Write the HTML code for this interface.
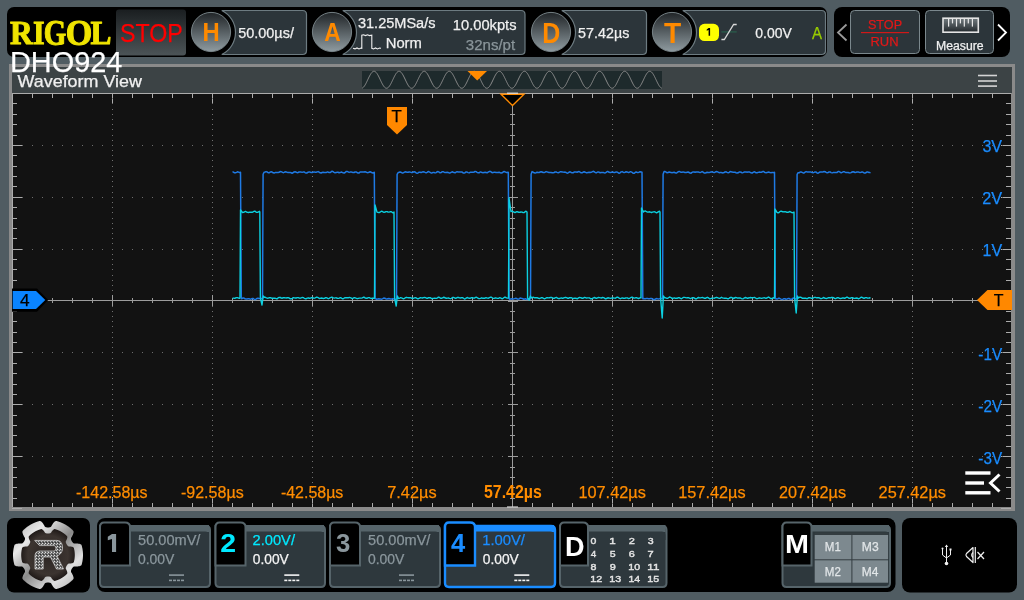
<!DOCTYPE html>
<html><head><meta charset="utf-8"><title>DHO924</title>
<style>html,body{margin:0;padding:0;width:1024px;height:600px;overflow:hidden;background:#505c62;font-family:"Liberation Sans", sans-serif;}</style>
</head><body>
<svg width="1024" height="600" viewBox="0 0 1024 600" style="position:absolute;left:0;top:0;display:block;will-change:transform">
<defs>
<linearGradient id="cg" x1="0" y1="0" x2="0" y2="1"><stop offset="0" stop-color="#202427"/><stop offset="1" stop-color="#8f9ba0"/></linearGradient>
<linearGradient id="sg" x1="0" y1="0" x2="0" y2="1"><stop offset="0" stop-color="#1a1e20"/><stop offset="1" stop-color="#4c5457"/></linearGradient>
<radialGradient id="gearin" cx="0.5" cy="0.5" r="0.5"><stop offset="0" stop-color="#2a2422"/><stop offset="0.75" stop-color="#3c3430"/><stop offset="1" stop-color="#221c1a"/></radialGradient>
<linearGradient id="ring" x1="0" y1="0" x2="1" y2="1"><stop offset="0" stop-color="#b0b0b0"/><stop offset="0.25" stop-color="#e8e8e8"/><stop offset="0.5" stop-color="#8a8a8a"/><stop offset="0.75" stop-color="#e0e0e0"/><stop offset="1" stop-color="#a8a8a8"/></linearGradient>
<linearGradient id="ruler" x1="0" y1="0" x2="0" y2="1"><stop offset="0" stop-color="#737c80"/><stop offset="1" stop-color="#22282c"/></linearGradient>
<pattern id="tex" width="3" height="3" patternUnits="userSpaceOnUse"><rect width="3" height="3" fill="#6a6a6a"/><rect width="1" height="1" fill="#e0e0e0"/><rect x="2" y="1" width="1" height="1" fill="#c0c0c0"/><rect x="1" y="2" width="1" height="1" fill="#303030"/></pattern>
</defs>
<rect x="0" y="0" width="1024" height="600" fill="#505c62"/>
<rect x="7" y="7" width="820" height="50" rx="7" fill="#000"/>
<rect x="834" y="7" width="176" height="50" rx="8" fill="#000"/>
<text x="9.96" y="44.10" font-size="34.36" fill="#f0e400" font-weight="bold" textLength="22.76" lengthAdjust="spacingAndGlyphs" style='font-family:"Liberation Serif", serif' stroke="#f0e400" stroke-width="1.0" stroke-linejoin="round">R</text>
<text x="33.09" y="44.10" font-size="34.36" fill="#f0e400" font-weight="bold" textLength="11.61" lengthAdjust="spacingAndGlyphs" style='font-family:"Liberation Serif", serif' stroke="#f0e400" stroke-width="1.0" stroke-linejoin="round">I</text>
<text x="43.68" y="44.60" font-size="35.89" fill="#f0e400" font-weight="bold" textLength="22.61" lengthAdjust="spacingAndGlyphs" style='font-family:"Liberation Serif", serif' stroke="#f0e400" stroke-width="1.0" stroke-linejoin="round">G</text>
<text x="65.63" y="44.60" font-size="35.89" fill="#f0e400" font-weight="bold" textLength="26.53" lengthAdjust="spacingAndGlyphs" style='font-family:"Liberation Serif", serif' stroke="#f0e400" stroke-width="1.0" stroke-linejoin="round">O</text>
<text x="90.56" y="44.10" font-size="34.36" fill="#f0e400" font-weight="bold" textLength="20.96" lengthAdjust="spacingAndGlyphs" style='font-family:"Liberation Serif", serif' stroke="#f0e400" stroke-width="1.0" stroke-linejoin="round">L</text>
<rect x="116" y="9.5" width="70" height="46" rx="3" fill="url(#sg)"/>
<text x="119.95" y="42.20" font-size="26.45" fill="#ff0000" font-weight="normal" textLength="62.76" lengthAdjust="spacingAndGlyphs" style='font-family:"Liberation Sans", sans-serif'  stroke="#ff0000" stroke-width="0.25">STOP</text>
<path d="M221.78,10.5 L302.5,10.5 Q306.5,10.5 306.5,14.5 L306.5,50.5 Q306.5,54.5 302.5,54.5 L221.78,54.5 A24.5,24.5 0 0 0 221.78,10.5 Z" fill="#2c353a" stroke="#6d7b81" stroke-width="1.2"/>
<circle cx="211" cy="32" r="19.6" fill="url(#cg)" stroke="#7f8b90" stroke-width="0.9"/>
<text x="202.41" y="41.10" font-size="24.86" fill="#ff8a00" font-weight="bold" textLength="17.20" lengthAdjust="spacingAndGlyphs" style='font-family:"Liberation Sans", sans-serif' >H</text>
<text x="238.22" y="37.70" font-size="14.39" fill="#f0f0f0" font-weight="normal" textLength="55.68" lengthAdjust="spacingAndGlyphs" style='font-family:"Liberation Sans", sans-serif'  stroke="#f0f0f0" stroke-width="0.25">50.00µs/</text>
<path d="M342.78,10.5 L521,10.5 Q525,10.5 525,14.5 L525,50.5 Q525,54.5 521,54.5 L342.78,54.5 A24.5,24.5 0 0 0 342.78,10.5 Z" fill="#2c353a" stroke="#6d7b81" stroke-width="1.2"/>
<circle cx="332" cy="32" r="19.6" fill="url(#cg)" stroke="#7f8b90" stroke-width="0.9"/>
<text x="324.33" y="41.10" font-size="24.86" fill="#ff8a00" font-weight="bold" textLength="16.47" lengthAdjust="spacingAndGlyphs" style='font-family:"Liberation Sans", sans-serif' >A</text>
<text x="357.95" y="27.80" font-size="13.95" fill="#f0f0f0" font-weight="normal" textLength="77.58" lengthAdjust="spacingAndGlyphs" style='font-family:"Liberation Sans", sans-serif'  stroke="#f0f0f0" stroke-width="0.25">31.25MSa/s</text>
<text x="385.69" y="47.80" font-size="14.10" fill="#f0f0f0" font-weight="normal" textLength="36.19" lengthAdjust="spacingAndGlyphs" style='font-family:"Liberation Sans", sans-serif'  stroke="#f0f0f0" stroke-width="0.25">Norm</text>
<text x="452.88" y="29.90" font-size="14.10" fill="#f0f0f0" font-weight="normal" textLength="63.65" lengthAdjust="spacingAndGlyphs" style='font-family:"Liberation Sans", sans-serif'  stroke="#f0f0f0" stroke-width="0.25">10.00kpts</text>
<text x="465.83" y="49.80" font-size="14.39" fill="#8a959a" font-weight="normal" textLength="49.28" lengthAdjust="spacingAndGlyphs" style='font-family:"Liberation Sans", sans-serif'  stroke="#8a959a" stroke-width="0.25">32ns/pt</text>
<polyline points="353,48.3 355,48.9 357,47.9 359,48.9 361,48.1 361.8,48.3 361.8,35.2 363.5,34.8 365.5,35.6 367.5,34.8 369.5,35.6 371.8,35.2 371.8,48.3 373.5,48.9 375.5,47.9 377.5,48.9 379.5,48.1 381,48.3" fill="none" stroke="#f0f0f0" stroke-width="1.1"/>
<path d="M561.78,10.5 L642.5,10.5 Q646.5,10.5 646.5,14.5 L646.5,50.5 Q646.5,54.5 642.5,54.5 L561.78,54.5 A24.5,24.5 0 0 0 561.78,10.5 Z" fill="#2c353a" stroke="#6d7b81" stroke-width="1.2"/>
<circle cx="551" cy="32" r="19.6" fill="url(#cg)" stroke="#7f8b90" stroke-width="0.9"/>
<text x="542.23" y="43.00" font-size="29.22" fill="#ff8a00" font-weight="bold" textLength="18.02" lengthAdjust="spacingAndGlyphs" style='font-family:"Liberation Sans", sans-serif' >D</text>
<text x="578.13" y="37.70" font-size="14.10" fill="#f0f0f0" font-weight="normal" textLength="51.19" lengthAdjust="spacingAndGlyphs" style='font-family:"Liberation Sans", sans-serif'  stroke="#f0f0f0" stroke-width="0.25">57.42µs</text>
<path d="M682.78,10.5 L821.5,10.5 Q825.5,10.5 825.5,14.5 L825.5,50.5 Q825.5,54.5 821.5,54.5 L682.78,54.5 A24.5,24.5 0 0 0 682.78,10.5 Z" fill="#2c353a" stroke="#6d7b81" stroke-width="1.2"/>
<circle cx="672" cy="32" r="19.6" fill="url(#cg)" stroke="#7f8b90" stroke-width="0.9"/>
<text x="663.88" y="43.00" font-size="29.22" fill="#ff8a00" font-weight="bold" textLength="17.22" lengthAdjust="spacingAndGlyphs" style='font-family:"Liberation Sans", sans-serif' >T</text>
<rect x="699" y="23.8" width="20" height="17.2" rx="5.5" fill="#ffff00"/>
<path d="M708.6,28 L710.1,28 L710.1,35.8 L708.6,35.8 L708.6,29.9 L706.7,30.7 L706.7,29.4 Z" fill="#000"/>
<line x1="721.4" y1="31.9" x2="736.7" y2="31.9" stroke="#2a5a4a" stroke-width="1.4"/>
<polyline points="721.4,39.5 724.3,39.5 733.6,24.5 736.7,24.5" fill="none" stroke="#d8d8d8" stroke-width="1.3"/>
<text x="755.25" y="37.70" font-size="15.26" fill="#f0f0f0" font-weight="normal" textLength="36.51" lengthAdjust="spacingAndGlyphs" style='font-family:"Liberation Sans", sans-serif'  stroke="#f0f0f0" stroke-width="0.25">0.00V</text>
<text x="811.97" y="38.70" font-size="16.28" fill="#99cc00" font-weight="normal" textLength="10.06" lengthAdjust="spacingAndGlyphs" style='font-family:"Liberation Sans", sans-serif'  stroke="#99cc00" stroke-width="0.25">A</text>
<polyline points="846.5,24.5 838,32.5 846.5,40.5" fill="none" stroke="#9a9a9a" stroke-width="1.8"/>
<rect x="850.5" y="10.5" width="69" height="43" rx="4" fill="#2c353a" stroke="#7b888d" stroke-width="1"/>
<text x="867.93" y="29.00" font-size="13.08" fill="#e01818" font-weight="normal" textLength="34.23" lengthAdjust="spacingAndGlyphs" style='font-family:"Liberation Sans", sans-serif'  stroke="#e01818" stroke-width="0.25">STOP</text>
<rect x="861" y="32" width="48" height="1.2" fill="#d01818"/>
<text x="870.44" y="45.50" font-size="12.35" fill="#e01818" font-weight="normal" textLength="28.12" lengthAdjust="spacingAndGlyphs" style='font-family:"Liberation Sans", sans-serif'  stroke="#e01818" stroke-width="0.25">RUN</text>
<rect x="925.5" y="10.5" width="68" height="43" rx="4" fill="#2c353a" stroke="#7b888d" stroke-width="1"/>
<rect x="943" y="18.2" width="35.3" height="14" fill="url(#ruler)" stroke="#e4e4e4" stroke-width="1.6"/>
<rect x="948.0" y="19" width="1.2" height="7.6" fill="#e8e8e8"/>
<rect x="951.9" y="19" width="1.2" height="4.4" fill="#e8e8e8"/>
<rect x="955.9" y="19" width="1.2" height="7.6" fill="#e8e8e8"/>
<rect x="959.8" y="19" width="1.2" height="4.4" fill="#e8e8e8"/>
<rect x="963.6999999999999" y="19" width="1.2" height="7.6" fill="#e8e8e8"/>
<rect x="967.6999999999999" y="19" width="1.2" height="4.4" fill="#e8e8e8"/>
<rect x="971.8" y="19" width="1.2" height="7.6" fill="#e8e8e8"/>
<text x="936.00" y="49.80" font-size="12.21" fill="#f0f0f0" font-weight="normal" textLength="47.55" lengthAdjust="spacingAndGlyphs" style='font-family:"Liberation Sans", sans-serif'  stroke="#f0f0f0" stroke-width="0.25">Measure</text>
<polyline points="998,24.5 1006,32.5 998,40.5" fill="none" stroke="#ffffff" stroke-width="1.8"/>
<rect x="9" y="64" width="1006" height="447" fill="#8a8a8a"/>
<rect x="12" y="67" width="1000" height="26" fill="#3c4345"/>
<rect x="12" y="93" width="999" height="414" fill="#121212"/>
<rect x="362" y="71" width="300" height="18" fill="#1e2a2c"/>
<polyline points="362.0,88.17 362.5,87.97 363.0,87.63 363.5,87.17 364.0,86.59 364.5,85.91 365.0,85.13 365.5,84.26 366.0,83.33 366.5,82.33 367.0,81.30 367.5,80.25 368.0,79.18 368.5,78.13 369.0,77.10 369.5,76.11 370.0,75.18 370.5,74.32 371.0,73.54 371.5,72.86 372.0,72.30 372.5,71.84 373.0,71.52 373.5,71.32 374.0,71.25 374.5,71.32 375.0,71.52 375.5,71.84 376.0,72.30 376.5,72.86 377.0,73.54 377.5,74.32 378.0,75.18 378.5,76.11 379.0,77.10 379.5,78.13 380.0,79.18 380.5,80.25 381.0,81.30 381.5,82.33 382.0,83.33 382.5,84.26 383.0,85.13 383.5,85.91 384.0,86.59 384.5,87.17 385.0,87.63 385.5,87.97 386.0,88.17 386.5,88.25 387.0,88.19 387.5,88.00 388.0,87.68 388.5,87.24 389.0,86.68 389.5,86.01 390.0,85.24 390.5,84.39 391.0,83.46 391.5,82.48 392.0,81.45 392.5,80.39 393.0,79.33 393.5,78.27 394.0,77.24 394.5,76.24 395.0,75.30 395.5,74.43 396.0,73.64 396.5,72.95 397.0,72.37 397.5,71.90 398.0,71.55 398.5,71.34 399.0,71.25 399.5,71.30 400.0,71.48 400.5,71.79 401.0,72.23 401.5,72.78 402.0,73.44 402.5,74.20 403.0,75.05 403.5,75.97 404.0,76.95 404.5,77.98 405.0,79.03 405.5,80.10 406.0,81.15 406.5,82.19 407.0,83.19 407.5,84.13 408.0,85.01 408.5,85.80 409.0,86.50 409.5,87.09 410.0,87.57 410.5,87.93 411.0,88.15 411.5,88.25 412.0,88.21 412.5,88.04 413.0,87.74 413.5,87.31 414.0,86.76 414.5,86.11 415.0,85.35 415.5,84.51 416.0,83.59 416.5,82.62 417.0,81.59 417.5,80.54 418.0,79.48 418.5,78.42 419.0,77.38 419.5,76.38 420.0,75.43 420.5,74.55 421.0,73.75 421.5,73.04 422.0,72.44 422.5,71.96 423.0,71.59 423.5,71.36 424.0,71.26 424.5,71.28 425.0,71.45 425.5,71.74 426.0,72.16 426.5,72.69 427.0,73.34 427.5,74.09 428.0,74.93 428.5,75.84 429.0,76.81 429.5,77.83 430.0,78.88 430.5,79.95 431.0,81.01 431.5,82.05 432.0,83.05 432.5,84.01 433.0,84.89 433.5,85.70 434.0,86.41 434.5,87.02 435.0,87.51 435.5,87.88 436.0,88.13 436.5,88.24 437.0,88.22 437.5,88.07 438.0,87.79 438.5,87.38 439.0,86.85 439.5,86.21 440.0,85.47 440.5,84.63 441.0,83.73 441.5,82.76 442.0,81.74 442.5,80.69 443.0,79.63 443.5,78.57 444.0,77.52 444.5,76.52 445.0,75.56 445.5,74.67 446.0,73.86 446.5,73.14 447.0,72.52 447.5,72.02 448.0,71.64 448.5,71.38 449.0,71.26 449.5,71.27 450.0,71.42 450.5,71.69 451.0,72.09 451.5,72.61 452.0,73.24 452.5,73.98 453.0,74.80 453.5,75.71 454.0,76.67 454.5,77.69 455.0,78.74 455.5,79.80 456.0,80.86 456.5,81.90 457.0,82.92 457.5,83.88 458.0,84.77 458.5,85.59 459.0,86.32 459.5,86.94 460.0,87.45 460.5,87.84 461.0,88.10 461.5,88.23 462.0,88.23 462.5,88.10 463.0,87.83 463.5,87.44 464.0,86.93 464.5,86.30 465.0,85.58 465.5,84.76 466.0,83.86 466.5,82.90 467.0,81.88 467.5,80.84 468.0,79.78 468.5,78.71 469.0,77.67 469.5,76.65 470.0,75.69 470.5,74.79 471.0,73.96 471.5,73.23 472.0,72.60 472.5,72.08 473.0,71.68 473.5,71.41 474.0,71.27 474.5,71.26 475.0,71.39 475.5,71.64 476.0,72.03 476.5,72.53 477.0,73.15 477.5,73.87 478.0,74.68 478.5,75.58 479.0,76.54 479.5,77.54 480.0,78.59 480.5,79.65 481.0,80.71 481.5,81.76 482.0,82.78 482.5,83.75 483.0,84.65 483.5,85.48 484.0,86.22 484.5,86.86 485.0,87.39 485.5,87.79 486.0,88.07 486.5,88.22 487.0,88.24 487.5,88.13 488.0,87.88 488.5,87.50 489.0,87.01 489.5,86.40 490.0,85.68 490.5,84.88 491.0,83.99 491.5,83.03 492.0,82.03 492.5,80.99 493.0,79.93 493.5,78.86 494.0,77.81 494.5,76.79 495.0,75.82 495.5,74.91 496.0,74.07 496.5,73.33 497.0,72.68 497.5,72.15 498.0,71.73 498.5,71.44 499.0,71.28 499.5,71.26 500.0,71.36 500.5,71.60 501.0,71.97 501.5,72.45 502.0,73.06 502.5,73.76 503.0,74.57 503.5,75.45 504.0,76.40 504.5,77.40 505.0,78.44 505.5,79.50 506.0,80.56 506.5,81.61 507.0,82.64 507.5,83.61 508.0,84.53 508.5,85.37 509.0,86.12 509.5,86.78 510.0,87.32 510.5,87.74 511.0,88.04 511.5,88.21 512.0,88.25 512.5,88.15 513.0,87.92 513.5,87.56 514.0,87.08 514.5,86.49 515.0,85.79 515.5,84.99 516.0,84.12 516.5,83.17 517.0,82.17 517.5,81.13 518.0,80.07 518.5,79.01 519.0,77.96 519.5,76.93 520.0,75.95 520.5,75.03 521.0,74.19 521.5,73.43 522.0,72.77 522.5,72.22 523.0,71.78 523.5,71.47 524.0,71.30 524.5,71.25 525.0,71.34 525.5,71.56 526.0,71.91 526.5,72.38 527.0,72.97 527.5,73.66 528.0,74.45 528.5,75.32 529.0,76.26 529.5,77.26 530.0,78.29 530.5,79.35 531.0,80.42 531.5,81.47 532.0,82.50 532.5,83.48 533.0,84.41 533.5,85.26 534.0,86.02 534.5,86.69 535.0,87.25 535.5,87.69 536.0,88.01 536.5,88.19 537.0,88.25 537.5,88.17 538.0,87.96 538.5,87.62 539.0,87.16 539.5,86.58 540.0,85.89 540.5,85.11 541.0,84.24 541.5,83.31 542.0,82.31 542.5,81.28 543.0,80.22 543.5,79.16 544.0,78.10 544.5,77.07 545.0,76.09 545.5,75.16 546.0,74.30 546.5,73.53 547.0,72.85 547.5,72.29 548.0,71.84 548.5,71.51 549.0,71.31 549.5,71.25 550.0,71.32 550.5,71.52 551.0,71.85 551.5,72.31 552.0,72.88 552.5,73.56 553.0,74.33 553.5,75.19 554.0,76.13 554.5,77.12 555.0,78.15 555.5,79.20 556.0,80.27 556.5,81.32 557.0,82.35 557.5,83.35 558.0,84.28 558.5,85.14 559.0,85.92 559.5,86.60 560.0,87.18 560.5,87.64 561.0,87.97 561.5,88.18 562.0,88.25 562.5,88.19 563.0,88.00 563.5,87.68 564.0,87.23 564.5,86.67 565.0,85.99 565.5,85.23 566.0,84.37 566.5,83.44 567.0,82.46 567.5,81.43 568.0,80.37 568.5,79.31 569.0,78.25 569.5,77.22 570.0,76.22 570.5,75.28 571.0,74.41 571.5,73.63 572.0,72.94 572.5,72.36 573.0,71.89 573.5,71.55 574.0,71.33 574.5,71.25 575.0,71.30 575.5,71.48 576.0,71.80 576.5,72.24 577.0,72.79 577.5,73.45 578.0,74.22 578.5,75.07 579.0,75.99 579.5,76.97 580.0,78.00 580.5,79.05 581.0,80.12 581.5,81.18 582.0,82.21 582.5,83.21 583.0,84.15 583.5,85.03 584.0,85.82 584.5,86.51 585.0,87.10 585.5,87.58 586.0,87.93 586.5,88.16 587.0,88.25 587.5,88.21 588.0,88.03 588.5,87.73 589.0,87.30 589.5,86.75 590.0,86.09 590.5,85.34 591.0,84.49 591.5,83.58 592.0,82.60 592.5,81.57 593.0,80.52 593.5,79.46 594.0,78.40 594.5,77.36 595.0,76.36 595.5,75.41 596.0,74.53 596.5,73.73 597.0,73.03 597.5,72.43 598.0,71.95 598.5,71.59 599.0,71.36 599.5,71.25 600.0,71.29 600.5,71.45 601.0,71.75 601.5,72.17 602.0,72.71 602.5,73.36 603.0,74.11 603.5,74.94 604.0,75.86 604.5,76.83 605.0,77.85 605.5,78.90 606.0,79.97 606.5,81.03 607.0,82.07 607.5,83.07 608.0,84.02 608.5,84.91 609.0,85.71 609.5,86.42 610.0,87.03 610.5,87.52 611.0,87.89 611.5,88.13 612.0,88.24 612.5,88.22 613.0,88.06 613.5,87.78 614.0,87.37 614.5,86.84 615.0,86.19 615.5,85.45 616.0,84.62 616.5,83.71 617.0,82.74 617.5,81.72 618.0,80.67 618.5,79.61 619.0,78.55 619.5,77.50 620.0,76.50 620.5,75.54 621.0,74.65 621.5,73.84 622.0,73.12 622.5,72.51 623.0,72.01 623.5,71.63 624.0,71.38 624.5,71.26 625.0,71.27 625.5,71.42 626.0,71.70 626.5,72.10 627.0,72.62 627.5,73.26 628.0,74.00 628.5,74.82 629.0,75.73 629.5,76.69 630.0,77.71 630.5,78.76 631.0,79.82 631.5,80.88 632.0,81.93 632.5,82.94 633.0,83.90 633.5,84.79 634.0,85.61 634.5,86.33 635.0,86.95 635.5,87.46 636.0,87.85 636.5,88.11 637.0,88.24 637.5,88.23 638.0,88.09 638.5,87.83 639.0,87.43 639.5,86.92 640.0,86.29 640.5,85.56 641.0,84.74 641.5,83.84 642.0,82.88 642.5,81.86 643.0,80.82 643.5,79.76 644.0,78.69 644.5,77.65 645.0,76.63 645.5,75.67 646.0,74.77 646.5,73.95 647.0,73.22 647.5,72.59 648.0,72.07 648.5,71.68 649.0,71.41 649.5,71.27 650.0,71.26 650.5,71.39 651.0,71.65 651.5,72.04 652.0,72.54 652.5,73.16 653.0,73.89 653.5,74.70 654.0,75.60 654.5,76.56 655.0,77.56 655.5,78.61 656.0,79.67 656.5,80.73 657.0,81.78 657.5,82.80 658.0,83.76 658.5,84.67 659.0,85.50 659.5,86.23 660.0,86.87 660.5,87.39 661.0,87.80 661.5,88.08 662.0,88.23" fill="none" stroke="#8c8c8c" stroke-width="1"/>
<polygon points="467.5,71 487,71 477.2,80.5" fill="#ff8a00"/>
<text x="17.52" y="86.70" font-size="17.01" fill="#f0f0f0" font-weight="normal" textLength="124.43" lengthAdjust="spacingAndGlyphs" style='font-family:"Liberation Sans", sans-serif'  stroke="#f0f0f0" stroke-width="0.25">Waveform View</text>
<rect x="978" y="74.7" width="19" height="1.6" fill="#d4d4d4"/>
<rect x="978" y="80.2" width="19" height="1.6" fill="#d4d4d4"/>
<rect x="978" y="85.3" width="19" height="1.6" fill="#d4d4d4"/>
<g shape-rendering="crispEdges"><rect x="12" y="93" width="999" height="1" fill="#acacac"/><rect x="12" y="93" width="1" height="414" fill="#acacac"/><rect x="12" y="93" width="1" height="10" fill="#acacac"/><rect x="12" y="497" width="1" height="10" fill="#acacac"/><rect x="32" y="93" width="1" height="4.5" fill="#acacac"/><rect x="32" y="502.5" width="1" height="4.5" fill="#acacac"/><rect x="52" y="93" width="1" height="4.5" fill="#acacac"/><rect x="52" y="502.5" width="1" height="4.5" fill="#acacac"/><rect x="72" y="93" width="1" height="4.5" fill="#acacac"/><rect x="72" y="502.5" width="1" height="4.5" fill="#acacac"/><rect x="92" y="93" width="1" height="4.5" fill="#acacac"/><rect x="92" y="502.5" width="1" height="4.5" fill="#acacac"/><rect x="112" y="93" width="1" height="10" fill="#acacac"/><rect x="112" y="497" width="1" height="10" fill="#acacac"/><rect x="132" y="93" width="1" height="4.5" fill="#acacac"/><rect x="132" y="502.5" width="1" height="4.5" fill="#acacac"/><rect x="152" y="93" width="1" height="4.5" fill="#acacac"/><rect x="152" y="502.5" width="1" height="4.5" fill="#acacac"/><rect x="172" y="93" width="1" height="4.5" fill="#acacac"/><rect x="172" y="502.5" width="1" height="4.5" fill="#acacac"/><rect x="192" y="93" width="1" height="4.5" fill="#acacac"/><rect x="192" y="502.5" width="1" height="4.5" fill="#acacac"/><rect x="212" y="93" width="1" height="10" fill="#acacac"/><rect x="212" y="497" width="1" height="10" fill="#acacac"/><rect x="232" y="93" width="1" height="4.5" fill="#acacac"/><rect x="232" y="502.5" width="1" height="4.5" fill="#acacac"/><rect x="252" y="93" width="1" height="4.5" fill="#acacac"/><rect x="252" y="502.5" width="1" height="4.5" fill="#acacac"/><rect x="272" y="93" width="1" height="4.5" fill="#acacac"/><rect x="272" y="502.5" width="1" height="4.5" fill="#acacac"/><rect x="292" y="93" width="1" height="4.5" fill="#acacac"/><rect x="292" y="502.5" width="1" height="4.5" fill="#acacac"/><rect x="312" y="93" width="1" height="10" fill="#acacac"/><rect x="312" y="497" width="1" height="10" fill="#acacac"/><rect x="332" y="93" width="1" height="4.5" fill="#acacac"/><rect x="332" y="502.5" width="1" height="4.5" fill="#acacac"/><rect x="352" y="93" width="1" height="4.5" fill="#acacac"/><rect x="352" y="502.5" width="1" height="4.5" fill="#acacac"/><rect x="372" y="93" width="1" height="4.5" fill="#acacac"/><rect x="372" y="502.5" width="1" height="4.5" fill="#acacac"/><rect x="392" y="93" width="1" height="4.5" fill="#acacac"/><rect x="392" y="502.5" width="1" height="4.5" fill="#acacac"/><rect x="412" y="93" width="1" height="10" fill="#acacac"/><rect x="412" y="497" width="1" height="10" fill="#acacac"/><rect x="432" y="93" width="1" height="4.5" fill="#acacac"/><rect x="432" y="502.5" width="1" height="4.5" fill="#acacac"/><rect x="452" y="93" width="1" height="4.5" fill="#acacac"/><rect x="452" y="502.5" width="1" height="4.5" fill="#acacac"/><rect x="472" y="93" width="1" height="4.5" fill="#acacac"/><rect x="472" y="502.5" width="1" height="4.5" fill="#acacac"/><rect x="492" y="93" width="1" height="4.5" fill="#acacac"/><rect x="492" y="502.5" width="1" height="4.5" fill="#acacac"/><rect x="512" y="93" width="1" height="10" fill="#acacac"/><rect x="512" y="497" width="1" height="10" fill="#acacac"/><rect x="532" y="93" width="1" height="4.5" fill="#acacac"/><rect x="532" y="502.5" width="1" height="4.5" fill="#acacac"/><rect x="552" y="93" width="1" height="4.5" fill="#acacac"/><rect x="552" y="502.5" width="1" height="4.5" fill="#acacac"/><rect x="572" y="93" width="1" height="4.5" fill="#acacac"/><rect x="572" y="502.5" width="1" height="4.5" fill="#acacac"/><rect x="592" y="93" width="1" height="4.5" fill="#acacac"/><rect x="592" y="502.5" width="1" height="4.5" fill="#acacac"/><rect x="612" y="93" width="1" height="10" fill="#acacac"/><rect x="612" y="497" width="1" height="10" fill="#acacac"/><rect x="632" y="93" width="1" height="4.5" fill="#acacac"/><rect x="632" y="502.5" width="1" height="4.5" fill="#acacac"/><rect x="652" y="93" width="1" height="4.5" fill="#acacac"/><rect x="652" y="502.5" width="1" height="4.5" fill="#acacac"/><rect x="672" y="93" width="1" height="4.5" fill="#acacac"/><rect x="672" y="502.5" width="1" height="4.5" fill="#acacac"/><rect x="692" y="93" width="1" height="4.5" fill="#acacac"/><rect x="692" y="502.5" width="1" height="4.5" fill="#acacac"/><rect x="712" y="93" width="1" height="10" fill="#acacac"/><rect x="712" y="497" width="1" height="10" fill="#acacac"/><rect x="732" y="93" width="1" height="4.5" fill="#acacac"/><rect x="732" y="502.5" width="1" height="4.5" fill="#acacac"/><rect x="752" y="93" width="1" height="4.5" fill="#acacac"/><rect x="752" y="502.5" width="1" height="4.5" fill="#acacac"/><rect x="772" y="93" width="1" height="4.5" fill="#acacac"/><rect x="772" y="502.5" width="1" height="4.5" fill="#acacac"/><rect x="792" y="93" width="1" height="4.5" fill="#acacac"/><rect x="792" y="502.5" width="1" height="4.5" fill="#acacac"/><rect x="812" y="93" width="1" height="10" fill="#acacac"/><rect x="812" y="497" width="1" height="10" fill="#acacac"/><rect x="832" y="93" width="1" height="4.5" fill="#acacac"/><rect x="832" y="502.5" width="1" height="4.5" fill="#acacac"/><rect x="852" y="93" width="1" height="4.5" fill="#acacac"/><rect x="852" y="502.5" width="1" height="4.5" fill="#acacac"/><rect x="872" y="93" width="1" height="4.5" fill="#acacac"/><rect x="872" y="502.5" width="1" height="4.5" fill="#acacac"/><rect x="892" y="93" width="1" height="4.5" fill="#acacac"/><rect x="892" y="502.5" width="1" height="4.5" fill="#acacac"/><rect x="912" y="93" width="1" height="10" fill="#acacac"/><rect x="912" y="497" width="1" height="10" fill="#acacac"/><rect x="932" y="93" width="1" height="4.5" fill="#acacac"/><rect x="932" y="502.5" width="1" height="4.5" fill="#acacac"/><rect x="952" y="93" width="1" height="4.5" fill="#acacac"/><rect x="952" y="502.5" width="1" height="4.5" fill="#acacac"/><rect x="972" y="93" width="1" height="4.5" fill="#acacac"/><rect x="972" y="502.5" width="1" height="4.5" fill="#acacac"/><rect x="992" y="93" width="1" height="4.5" fill="#acacac"/><rect x="992" y="502.5" width="1" height="4.5" fill="#acacac"/><rect x="12" y="93.00" width="10" height="1" fill="#acacac"/><rect x="1001" y="93.00" width="10" height="1" fill="#acacac"/><rect x="12" y="103.38" width="5" height="1" fill="#acacac"/><rect x="1006" y="103.38" width="5" height="1" fill="#acacac"/><rect x="12" y="113.75" width="5" height="1" fill="#acacac"/><rect x="1006" y="113.75" width="5" height="1" fill="#acacac"/><rect x="12" y="124.12" width="5" height="1" fill="#acacac"/><rect x="1006" y="124.12" width="5" height="1" fill="#acacac"/><rect x="12" y="134.50" width="5" height="1" fill="#acacac"/><rect x="1006" y="134.50" width="5" height="1" fill="#acacac"/><rect x="12" y="144.88" width="10" height="1" fill="#acacac"/><rect x="1001" y="144.88" width="10" height="1" fill="#acacac"/><rect x="12" y="155.25" width="5" height="1" fill="#acacac"/><rect x="1006" y="155.25" width="5" height="1" fill="#acacac"/><rect x="12" y="165.62" width="5" height="1" fill="#acacac"/><rect x="1006" y="165.62" width="5" height="1" fill="#acacac"/><rect x="12" y="176.00" width="5" height="1" fill="#acacac"/><rect x="1006" y="176.00" width="5" height="1" fill="#acacac"/><rect x="12" y="186.38" width="5" height="1" fill="#acacac"/><rect x="1006" y="186.38" width="5" height="1" fill="#acacac"/><rect x="12" y="196.75" width="10" height="1" fill="#acacac"/><rect x="1001" y="196.75" width="10" height="1" fill="#acacac"/><rect x="12" y="207.12" width="5" height="1" fill="#acacac"/><rect x="1006" y="207.12" width="5" height="1" fill="#acacac"/><rect x="12" y="217.50" width="5" height="1" fill="#acacac"/><rect x="1006" y="217.50" width="5" height="1" fill="#acacac"/><rect x="12" y="227.88" width="5" height="1" fill="#acacac"/><rect x="1006" y="227.88" width="5" height="1" fill="#acacac"/><rect x="12" y="238.25" width="5" height="1" fill="#acacac"/><rect x="1006" y="238.25" width="5" height="1" fill="#acacac"/><rect x="12" y="248.62" width="10" height="1" fill="#acacac"/><rect x="1001" y="248.62" width="10" height="1" fill="#acacac"/><rect x="12" y="259.00" width="5" height="1" fill="#acacac"/><rect x="1006" y="259.00" width="5" height="1" fill="#acacac"/><rect x="12" y="269.38" width="5" height="1" fill="#acacac"/><rect x="1006" y="269.38" width="5" height="1" fill="#acacac"/><rect x="12" y="279.75" width="5" height="1" fill="#acacac"/><rect x="1006" y="279.75" width="5" height="1" fill="#acacac"/><rect x="12" y="290.12" width="5" height="1" fill="#acacac"/><rect x="1006" y="290.12" width="5" height="1" fill="#acacac"/><rect x="12" y="300.50" width="10" height="1" fill="#acacac"/><rect x="1001" y="300.50" width="10" height="1" fill="#acacac"/><rect x="12" y="310.88" width="5" height="1" fill="#acacac"/><rect x="1006" y="310.88" width="5" height="1" fill="#acacac"/><rect x="12" y="321.25" width="5" height="1" fill="#acacac"/><rect x="1006" y="321.25" width="5" height="1" fill="#acacac"/><rect x="12" y="331.62" width="5" height="1" fill="#acacac"/><rect x="1006" y="331.62" width="5" height="1" fill="#acacac"/><rect x="12" y="342.00" width="5" height="1" fill="#acacac"/><rect x="1006" y="342.00" width="5" height="1" fill="#acacac"/><rect x="12" y="352.38" width="10" height="1" fill="#acacac"/><rect x="1001" y="352.38" width="10" height="1" fill="#acacac"/><rect x="12" y="362.75" width="5" height="1" fill="#acacac"/><rect x="1006" y="362.75" width="5" height="1" fill="#acacac"/><rect x="12" y="373.12" width="5" height="1" fill="#acacac"/><rect x="1006" y="373.12" width="5" height="1" fill="#acacac"/><rect x="12" y="383.50" width="5" height="1" fill="#acacac"/><rect x="1006" y="383.50" width="5" height="1" fill="#acacac"/><rect x="12" y="393.88" width="5" height="1" fill="#acacac"/><rect x="1006" y="393.88" width="5" height="1" fill="#acacac"/><rect x="12" y="404.25" width="10" height="1" fill="#acacac"/><rect x="1001" y="404.25" width="10" height="1" fill="#acacac"/><rect x="12" y="414.62" width="5" height="1" fill="#acacac"/><rect x="1006" y="414.62" width="5" height="1" fill="#acacac"/><rect x="12" y="425.00" width="5" height="1" fill="#acacac"/><rect x="1006" y="425.00" width="5" height="1" fill="#acacac"/><rect x="12" y="435.38" width="5" height="1" fill="#acacac"/><rect x="1006" y="435.38" width="5" height="1" fill="#acacac"/><rect x="12" y="445.75" width="5" height="1" fill="#acacac"/><rect x="1006" y="445.75" width="5" height="1" fill="#acacac"/><rect x="12" y="456.12" width="10" height="1" fill="#acacac"/><rect x="1001" y="456.12" width="10" height="1" fill="#acacac"/><rect x="12" y="466.50" width="5" height="1" fill="#acacac"/><rect x="1006" y="466.50" width="5" height="1" fill="#acacac"/><rect x="12" y="476.88" width="5" height="1" fill="#acacac"/><rect x="1006" y="476.88" width="5" height="1" fill="#acacac"/><rect x="12" y="487.25" width="5" height="1" fill="#acacac"/><rect x="1006" y="487.25" width="5" height="1" fill="#acacac"/><rect x="12" y="497.62" width="5" height="1" fill="#acacac"/><rect x="1006" y="497.62" width="5" height="1" fill="#acacac"/><rect x="12" y="508.00" width="10" height="1" fill="#acacac"/><rect x="1001" y="508.00" width="10" height="1" fill="#acacac"/><rect x="22" y="144.88" width="1" height="1" fill="#6e6e6e"/><rect x="32" y="144.88" width="1" height="1" fill="#6e6e6e"/><rect x="42" y="144.88" width="1" height="1" fill="#6e6e6e"/><rect x="52" y="144.88" width="1" height="1" fill="#6e6e6e"/><rect x="62" y="144.88" width="1" height="1" fill="#6e6e6e"/><rect x="72" y="144.88" width="1" height="1" fill="#6e6e6e"/><rect x="82" y="144.88" width="1" height="1" fill="#6e6e6e"/><rect x="92" y="144.88" width="1" height="1" fill="#6e6e6e"/><rect x="102" y="144.88" width="1" height="1" fill="#6e6e6e"/><rect x="112" y="144.88" width="1" height="1" fill="#6e6e6e"/><rect x="122" y="144.88" width="1" height="1" fill="#6e6e6e"/><rect x="132" y="144.88" width="1" height="1" fill="#6e6e6e"/><rect x="142" y="144.88" width="1" height="1" fill="#6e6e6e"/><rect x="152" y="144.88" width="1" height="1" fill="#6e6e6e"/><rect x="162" y="144.88" width="1" height="1" fill="#6e6e6e"/><rect x="172" y="144.88" width="1" height="1" fill="#6e6e6e"/><rect x="182" y="144.88" width="1" height="1" fill="#6e6e6e"/><rect x="192" y="144.88" width="1" height="1" fill="#6e6e6e"/><rect x="202" y="144.88" width="1" height="1" fill="#6e6e6e"/><rect x="212" y="144.88" width="1" height="1" fill="#6e6e6e"/><rect x="222" y="144.88" width="1" height="1" fill="#6e6e6e"/><rect x="232" y="144.88" width="1" height="1" fill="#6e6e6e"/><rect x="242" y="144.88" width="1" height="1" fill="#6e6e6e"/><rect x="252" y="144.88" width="1" height="1" fill="#6e6e6e"/><rect x="262" y="144.88" width="1" height="1" fill="#6e6e6e"/><rect x="272" y="144.88" width="1" height="1" fill="#6e6e6e"/><rect x="282" y="144.88" width="1" height="1" fill="#6e6e6e"/><rect x="292" y="144.88" width="1" height="1" fill="#6e6e6e"/><rect x="302" y="144.88" width="1" height="1" fill="#6e6e6e"/><rect x="312" y="144.88" width="1" height="1" fill="#6e6e6e"/><rect x="322" y="144.88" width="1" height="1" fill="#6e6e6e"/><rect x="332" y="144.88" width="1" height="1" fill="#6e6e6e"/><rect x="342" y="144.88" width="1" height="1" fill="#6e6e6e"/><rect x="352" y="144.88" width="1" height="1" fill="#6e6e6e"/><rect x="362" y="144.88" width="1" height="1" fill="#6e6e6e"/><rect x="372" y="144.88" width="1" height="1" fill="#6e6e6e"/><rect x="382" y="144.88" width="1" height="1" fill="#6e6e6e"/><rect x="392" y="144.88" width="1" height="1" fill="#6e6e6e"/><rect x="402" y="144.88" width="1" height="1" fill="#6e6e6e"/><rect x="412" y="144.88" width="1" height="1" fill="#6e6e6e"/><rect x="422" y="144.88" width="1" height="1" fill="#6e6e6e"/><rect x="432" y="144.88" width="1" height="1" fill="#6e6e6e"/><rect x="442" y="144.88" width="1" height="1" fill="#6e6e6e"/><rect x="452" y="144.88" width="1" height="1" fill="#6e6e6e"/><rect x="462" y="144.88" width="1" height="1" fill="#6e6e6e"/><rect x="472" y="144.88" width="1" height="1" fill="#6e6e6e"/><rect x="482" y="144.88" width="1" height="1" fill="#6e6e6e"/><rect x="492" y="144.88" width="1" height="1" fill="#6e6e6e"/><rect x="502" y="144.88" width="1" height="1" fill="#6e6e6e"/><rect x="512" y="144.88" width="1" height="1" fill="#6e6e6e"/><rect x="522" y="144.88" width="1" height="1" fill="#6e6e6e"/><rect x="532" y="144.88" width="1" height="1" fill="#6e6e6e"/><rect x="542" y="144.88" width="1" height="1" fill="#6e6e6e"/><rect x="552" y="144.88" width="1" height="1" fill="#6e6e6e"/><rect x="562" y="144.88" width="1" height="1" fill="#6e6e6e"/><rect x="572" y="144.88" width="1" height="1" fill="#6e6e6e"/><rect x="582" y="144.88" width="1" height="1" fill="#6e6e6e"/><rect x="592" y="144.88" width="1" height="1" fill="#6e6e6e"/><rect x="602" y="144.88" width="1" height="1" fill="#6e6e6e"/><rect x="612" y="144.88" width="1" height="1" fill="#6e6e6e"/><rect x="622" y="144.88" width="1" height="1" fill="#6e6e6e"/><rect x="632" y="144.88" width="1" height="1" fill="#6e6e6e"/><rect x="642" y="144.88" width="1" height="1" fill="#6e6e6e"/><rect x="652" y="144.88" width="1" height="1" fill="#6e6e6e"/><rect x="662" y="144.88" width="1" height="1" fill="#6e6e6e"/><rect x="672" y="144.88" width="1" height="1" fill="#6e6e6e"/><rect x="682" y="144.88" width="1" height="1" fill="#6e6e6e"/><rect x="692" y="144.88" width="1" height="1" fill="#6e6e6e"/><rect x="702" y="144.88" width="1" height="1" fill="#6e6e6e"/><rect x="712" y="144.88" width="1" height="1" fill="#6e6e6e"/><rect x="722" y="144.88" width="1" height="1" fill="#6e6e6e"/><rect x="732" y="144.88" width="1" height="1" fill="#6e6e6e"/><rect x="742" y="144.88" width="1" height="1" fill="#6e6e6e"/><rect x="752" y="144.88" width="1" height="1" fill="#6e6e6e"/><rect x="762" y="144.88" width="1" height="1" fill="#6e6e6e"/><rect x="772" y="144.88" width="1" height="1" fill="#6e6e6e"/><rect x="782" y="144.88" width="1" height="1" fill="#6e6e6e"/><rect x="792" y="144.88" width="1" height="1" fill="#6e6e6e"/><rect x="802" y="144.88" width="1" height="1" fill="#6e6e6e"/><rect x="812" y="144.88" width="1" height="1" fill="#6e6e6e"/><rect x="822" y="144.88" width="1" height="1" fill="#6e6e6e"/><rect x="832" y="144.88" width="1" height="1" fill="#6e6e6e"/><rect x="842" y="144.88" width="1" height="1" fill="#6e6e6e"/><rect x="852" y="144.88" width="1" height="1" fill="#6e6e6e"/><rect x="862" y="144.88" width="1" height="1" fill="#6e6e6e"/><rect x="872" y="144.88" width="1" height="1" fill="#6e6e6e"/><rect x="882" y="144.88" width="1" height="1" fill="#6e6e6e"/><rect x="892" y="144.88" width="1" height="1" fill="#6e6e6e"/><rect x="902" y="144.88" width="1" height="1" fill="#6e6e6e"/><rect x="912" y="144.88" width="1" height="1" fill="#6e6e6e"/><rect x="922" y="144.88" width="1" height="1" fill="#6e6e6e"/><rect x="932" y="144.88" width="1" height="1" fill="#6e6e6e"/><rect x="942" y="144.88" width="1" height="1" fill="#6e6e6e"/><rect x="952" y="144.88" width="1" height="1" fill="#6e6e6e"/><rect x="962" y="144.88" width="1" height="1" fill="#6e6e6e"/><rect x="972" y="144.88" width="1" height="1" fill="#6e6e6e"/><rect x="982" y="144.88" width="1" height="1" fill="#6e6e6e"/><rect x="992" y="144.88" width="1" height="1" fill="#6e6e6e"/><rect x="1002" y="144.88" width="1" height="1" fill="#6e6e6e"/><rect x="22" y="196.75" width="1" height="1" fill="#6e6e6e"/><rect x="32" y="196.75" width="1" height="1" fill="#6e6e6e"/><rect x="42" y="196.75" width="1" height="1" fill="#6e6e6e"/><rect x="52" y="196.75" width="1" height="1" fill="#6e6e6e"/><rect x="62" y="196.75" width="1" height="1" fill="#6e6e6e"/><rect x="72" y="196.75" width="1" height="1" fill="#6e6e6e"/><rect x="82" y="196.75" width="1" height="1" fill="#6e6e6e"/><rect x="92" y="196.75" width="1" height="1" fill="#6e6e6e"/><rect x="102" y="196.75" width="1" height="1" fill="#6e6e6e"/><rect x="112" y="196.75" width="1" height="1" fill="#6e6e6e"/><rect x="122" y="196.75" width="1" height="1" fill="#6e6e6e"/><rect x="132" y="196.75" width="1" height="1" fill="#6e6e6e"/><rect x="142" y="196.75" width="1" height="1" fill="#6e6e6e"/><rect x="152" y="196.75" width="1" height="1" fill="#6e6e6e"/><rect x="162" y="196.75" width="1" height="1" fill="#6e6e6e"/><rect x="172" y="196.75" width="1" height="1" fill="#6e6e6e"/><rect x="182" y="196.75" width="1" height="1" fill="#6e6e6e"/><rect x="192" y="196.75" width="1" height="1" fill="#6e6e6e"/><rect x="202" y="196.75" width="1" height="1" fill="#6e6e6e"/><rect x="212" y="196.75" width="1" height="1" fill="#6e6e6e"/><rect x="222" y="196.75" width="1" height="1" fill="#6e6e6e"/><rect x="232" y="196.75" width="1" height="1" fill="#6e6e6e"/><rect x="242" y="196.75" width="1" height="1" fill="#6e6e6e"/><rect x="252" y="196.75" width="1" height="1" fill="#6e6e6e"/><rect x="262" y="196.75" width="1" height="1" fill="#6e6e6e"/><rect x="272" y="196.75" width="1" height="1" fill="#6e6e6e"/><rect x="282" y="196.75" width="1" height="1" fill="#6e6e6e"/><rect x="292" y="196.75" width="1" height="1" fill="#6e6e6e"/><rect x="302" y="196.75" width="1" height="1" fill="#6e6e6e"/><rect x="312" y="196.75" width="1" height="1" fill="#6e6e6e"/><rect x="322" y="196.75" width="1" height="1" fill="#6e6e6e"/><rect x="332" y="196.75" width="1" height="1" fill="#6e6e6e"/><rect x="342" y="196.75" width="1" height="1" fill="#6e6e6e"/><rect x="352" y="196.75" width="1" height="1" fill="#6e6e6e"/><rect x="362" y="196.75" width="1" height="1" fill="#6e6e6e"/><rect x="372" y="196.75" width="1" height="1" fill="#6e6e6e"/><rect x="382" y="196.75" width="1" height="1" fill="#6e6e6e"/><rect x="392" y="196.75" width="1" height="1" fill="#6e6e6e"/><rect x="402" y="196.75" width="1" height="1" fill="#6e6e6e"/><rect x="412" y="196.75" width="1" height="1" fill="#6e6e6e"/><rect x="422" y="196.75" width="1" height="1" fill="#6e6e6e"/><rect x="432" y="196.75" width="1" height="1" fill="#6e6e6e"/><rect x="442" y="196.75" width="1" height="1" fill="#6e6e6e"/><rect x="452" y="196.75" width="1" height="1" fill="#6e6e6e"/><rect x="462" y="196.75" width="1" height="1" fill="#6e6e6e"/><rect x="472" y="196.75" width="1" height="1" fill="#6e6e6e"/><rect x="482" y="196.75" width="1" height="1" fill="#6e6e6e"/><rect x="492" y="196.75" width="1" height="1" fill="#6e6e6e"/><rect x="502" y="196.75" width="1" height="1" fill="#6e6e6e"/><rect x="512" y="196.75" width="1" height="1" fill="#6e6e6e"/><rect x="522" y="196.75" width="1" height="1" fill="#6e6e6e"/><rect x="532" y="196.75" width="1" height="1" fill="#6e6e6e"/><rect x="542" y="196.75" width="1" height="1" fill="#6e6e6e"/><rect x="552" y="196.75" width="1" height="1" fill="#6e6e6e"/><rect x="562" y="196.75" width="1" height="1" fill="#6e6e6e"/><rect x="572" y="196.75" width="1" height="1" fill="#6e6e6e"/><rect x="582" y="196.75" width="1" height="1" fill="#6e6e6e"/><rect x="592" y="196.75" width="1" height="1" fill="#6e6e6e"/><rect x="602" y="196.75" width="1" height="1" fill="#6e6e6e"/><rect x="612" y="196.75" width="1" height="1" fill="#6e6e6e"/><rect x="622" y="196.75" width="1" height="1" fill="#6e6e6e"/><rect x="632" y="196.75" width="1" height="1" fill="#6e6e6e"/><rect x="642" y="196.75" width="1" height="1" fill="#6e6e6e"/><rect x="652" y="196.75" width="1" height="1" fill="#6e6e6e"/><rect x="662" y="196.75" width="1" height="1" fill="#6e6e6e"/><rect x="672" y="196.75" width="1" height="1" fill="#6e6e6e"/><rect x="682" y="196.75" width="1" height="1" fill="#6e6e6e"/><rect x="692" y="196.75" width="1" height="1" fill="#6e6e6e"/><rect x="702" y="196.75" width="1" height="1" fill="#6e6e6e"/><rect x="712" y="196.75" width="1" height="1" fill="#6e6e6e"/><rect x="722" y="196.75" width="1" height="1" fill="#6e6e6e"/><rect x="732" y="196.75" width="1" height="1" fill="#6e6e6e"/><rect x="742" y="196.75" width="1" height="1" fill="#6e6e6e"/><rect x="752" y="196.75" width="1" height="1" fill="#6e6e6e"/><rect x="762" y="196.75" width="1" height="1" fill="#6e6e6e"/><rect x="772" y="196.75" width="1" height="1" fill="#6e6e6e"/><rect x="782" y="196.75" width="1" height="1" fill="#6e6e6e"/><rect x="792" y="196.75" width="1" height="1" fill="#6e6e6e"/><rect x="802" y="196.75" width="1" height="1" fill="#6e6e6e"/><rect x="812" y="196.75" width="1" height="1" fill="#6e6e6e"/><rect x="822" y="196.75" width="1" height="1" fill="#6e6e6e"/><rect x="832" y="196.75" width="1" height="1" fill="#6e6e6e"/><rect x="842" y="196.75" width="1" height="1" fill="#6e6e6e"/><rect x="852" y="196.75" width="1" height="1" fill="#6e6e6e"/><rect x="862" y="196.75" width="1" height="1" fill="#6e6e6e"/><rect x="872" y="196.75" width="1" height="1" fill="#6e6e6e"/><rect x="882" y="196.75" width="1" height="1" fill="#6e6e6e"/><rect x="892" y="196.75" width="1" height="1" fill="#6e6e6e"/><rect x="902" y="196.75" width="1" height="1" fill="#6e6e6e"/><rect x="912" y="196.75" width="1" height="1" fill="#6e6e6e"/><rect x="922" y="196.75" width="1" height="1" fill="#6e6e6e"/><rect x="932" y="196.75" width="1" height="1" fill="#6e6e6e"/><rect x="942" y="196.75" width="1" height="1" fill="#6e6e6e"/><rect x="952" y="196.75" width="1" height="1" fill="#6e6e6e"/><rect x="962" y="196.75" width="1" height="1" fill="#6e6e6e"/><rect x="972" y="196.75" width="1" height="1" fill="#6e6e6e"/><rect x="982" y="196.75" width="1" height="1" fill="#6e6e6e"/><rect x="992" y="196.75" width="1" height="1" fill="#6e6e6e"/><rect x="1002" y="196.75" width="1" height="1" fill="#6e6e6e"/><rect x="22" y="248.62" width="1" height="1" fill="#6e6e6e"/><rect x="32" y="248.62" width="1" height="1" fill="#6e6e6e"/><rect x="42" y="248.62" width="1" height="1" fill="#6e6e6e"/><rect x="52" y="248.62" width="1" height="1" fill="#6e6e6e"/><rect x="62" y="248.62" width="1" height="1" fill="#6e6e6e"/><rect x="72" y="248.62" width="1" height="1" fill="#6e6e6e"/><rect x="82" y="248.62" width="1" height="1" fill="#6e6e6e"/><rect x="92" y="248.62" width="1" height="1" fill="#6e6e6e"/><rect x="102" y="248.62" width="1" height="1" fill="#6e6e6e"/><rect x="112" y="248.62" width="1" height="1" fill="#6e6e6e"/><rect x="122" y="248.62" width="1" height="1" fill="#6e6e6e"/><rect x="132" y="248.62" width="1" height="1" fill="#6e6e6e"/><rect x="142" y="248.62" width="1" height="1" fill="#6e6e6e"/><rect x="152" y="248.62" width="1" height="1" fill="#6e6e6e"/><rect x="162" y="248.62" width="1" height="1" fill="#6e6e6e"/><rect x="172" y="248.62" width="1" height="1" fill="#6e6e6e"/><rect x="182" y="248.62" width="1" height="1" fill="#6e6e6e"/><rect x="192" y="248.62" width="1" height="1" fill="#6e6e6e"/><rect x="202" y="248.62" width="1" height="1" fill="#6e6e6e"/><rect x="212" y="248.62" width="1" height="1" fill="#6e6e6e"/><rect x="222" y="248.62" width="1" height="1" fill="#6e6e6e"/><rect x="232" y="248.62" width="1" height="1" fill="#6e6e6e"/><rect x="242" y="248.62" width="1" height="1" fill="#6e6e6e"/><rect x="252" y="248.62" width="1" height="1" fill="#6e6e6e"/><rect x="262" y="248.62" width="1" height="1" fill="#6e6e6e"/><rect x="272" y="248.62" width="1" height="1" fill="#6e6e6e"/><rect x="282" y="248.62" width="1" height="1" fill="#6e6e6e"/><rect x="292" y="248.62" width="1" height="1" fill="#6e6e6e"/><rect x="302" y="248.62" width="1" height="1" fill="#6e6e6e"/><rect x="312" y="248.62" width="1" height="1" fill="#6e6e6e"/><rect x="322" y="248.62" width="1" height="1" fill="#6e6e6e"/><rect x="332" y="248.62" width="1" height="1" fill="#6e6e6e"/><rect x="342" y="248.62" width="1" height="1" fill="#6e6e6e"/><rect x="352" y="248.62" width="1" height="1" fill="#6e6e6e"/><rect x="362" y="248.62" width="1" height="1" fill="#6e6e6e"/><rect x="372" y="248.62" width="1" height="1" fill="#6e6e6e"/><rect x="382" y="248.62" width="1" height="1" fill="#6e6e6e"/><rect x="392" y="248.62" width="1" height="1" fill="#6e6e6e"/><rect x="402" y="248.62" width="1" height="1" fill="#6e6e6e"/><rect x="412" y="248.62" width="1" height="1" fill="#6e6e6e"/><rect x="422" y="248.62" width="1" height="1" fill="#6e6e6e"/><rect x="432" y="248.62" width="1" height="1" fill="#6e6e6e"/><rect x="442" y="248.62" width="1" height="1" fill="#6e6e6e"/><rect x="452" y="248.62" width="1" height="1" fill="#6e6e6e"/><rect x="462" y="248.62" width="1" height="1" fill="#6e6e6e"/><rect x="472" y="248.62" width="1" height="1" fill="#6e6e6e"/><rect x="482" y="248.62" width="1" height="1" fill="#6e6e6e"/><rect x="492" y="248.62" width="1" height="1" fill="#6e6e6e"/><rect x="502" y="248.62" width="1" height="1" fill="#6e6e6e"/><rect x="512" y="248.62" width="1" height="1" fill="#6e6e6e"/><rect x="522" y="248.62" width="1" height="1" fill="#6e6e6e"/><rect x="532" y="248.62" width="1" height="1" fill="#6e6e6e"/><rect x="542" y="248.62" width="1" height="1" fill="#6e6e6e"/><rect x="552" y="248.62" width="1" height="1" fill="#6e6e6e"/><rect x="562" y="248.62" width="1" height="1" fill="#6e6e6e"/><rect x="572" y="248.62" width="1" height="1" fill="#6e6e6e"/><rect x="582" y="248.62" width="1" height="1" fill="#6e6e6e"/><rect x="592" y="248.62" width="1" height="1" fill="#6e6e6e"/><rect x="602" y="248.62" width="1" height="1" fill="#6e6e6e"/><rect x="612" y="248.62" width="1" height="1" fill="#6e6e6e"/><rect x="622" y="248.62" width="1" height="1" fill="#6e6e6e"/><rect x="632" y="248.62" width="1" height="1" fill="#6e6e6e"/><rect x="642" y="248.62" width="1" height="1" fill="#6e6e6e"/><rect x="652" y="248.62" width="1" height="1" fill="#6e6e6e"/><rect x="662" y="248.62" width="1" height="1" fill="#6e6e6e"/><rect x="672" y="248.62" width="1" height="1" fill="#6e6e6e"/><rect x="682" y="248.62" width="1" height="1" fill="#6e6e6e"/><rect x="692" y="248.62" width="1" height="1" fill="#6e6e6e"/><rect x="702" y="248.62" width="1" height="1" fill="#6e6e6e"/><rect x="712" y="248.62" width="1" height="1" fill="#6e6e6e"/><rect x="722" y="248.62" width="1" height="1" fill="#6e6e6e"/><rect x="732" y="248.62" width="1" height="1" fill="#6e6e6e"/><rect x="742" y="248.62" width="1" height="1" fill="#6e6e6e"/><rect x="752" y="248.62" width="1" height="1" fill="#6e6e6e"/><rect x="762" y="248.62" width="1" height="1" fill="#6e6e6e"/><rect x="772" y="248.62" width="1" height="1" fill="#6e6e6e"/><rect x="782" y="248.62" width="1" height="1" fill="#6e6e6e"/><rect x="792" y="248.62" width="1" height="1" fill="#6e6e6e"/><rect x="802" y="248.62" width="1" height="1" fill="#6e6e6e"/><rect x="812" y="248.62" width="1" height="1" fill="#6e6e6e"/><rect x="822" y="248.62" width="1" height="1" fill="#6e6e6e"/><rect x="832" y="248.62" width="1" height="1" fill="#6e6e6e"/><rect x="842" y="248.62" width="1" height="1" fill="#6e6e6e"/><rect x="852" y="248.62" width="1" height="1" fill="#6e6e6e"/><rect x="862" y="248.62" width="1" height="1" fill="#6e6e6e"/><rect x="872" y="248.62" width="1" height="1" fill="#6e6e6e"/><rect x="882" y="248.62" width="1" height="1" fill="#6e6e6e"/><rect x="892" y="248.62" width="1" height="1" fill="#6e6e6e"/><rect x="902" y="248.62" width="1" height="1" fill="#6e6e6e"/><rect x="912" y="248.62" width="1" height="1" fill="#6e6e6e"/><rect x="922" y="248.62" width="1" height="1" fill="#6e6e6e"/><rect x="932" y="248.62" width="1" height="1" fill="#6e6e6e"/><rect x="942" y="248.62" width="1" height="1" fill="#6e6e6e"/><rect x="952" y="248.62" width="1" height="1" fill="#6e6e6e"/><rect x="962" y="248.62" width="1" height="1" fill="#6e6e6e"/><rect x="972" y="248.62" width="1" height="1" fill="#6e6e6e"/><rect x="982" y="248.62" width="1" height="1" fill="#6e6e6e"/><rect x="992" y="248.62" width="1" height="1" fill="#6e6e6e"/><rect x="1002" y="248.62" width="1" height="1" fill="#6e6e6e"/><rect x="22" y="352.38" width="1" height="1" fill="#6e6e6e"/><rect x="32" y="352.38" width="1" height="1" fill="#6e6e6e"/><rect x="42" y="352.38" width="1" height="1" fill="#6e6e6e"/><rect x="52" y="352.38" width="1" height="1" fill="#6e6e6e"/><rect x="62" y="352.38" width="1" height="1" fill="#6e6e6e"/><rect x="72" y="352.38" width="1" height="1" fill="#6e6e6e"/><rect x="82" y="352.38" width="1" height="1" fill="#6e6e6e"/><rect x="92" y="352.38" width="1" height="1" fill="#6e6e6e"/><rect x="102" y="352.38" width="1" height="1" fill="#6e6e6e"/><rect x="112" y="352.38" width="1" height="1" fill="#6e6e6e"/><rect x="122" y="352.38" width="1" height="1" fill="#6e6e6e"/><rect x="132" y="352.38" width="1" height="1" fill="#6e6e6e"/><rect x="142" y="352.38" width="1" height="1" fill="#6e6e6e"/><rect x="152" y="352.38" width="1" height="1" fill="#6e6e6e"/><rect x="162" y="352.38" width="1" height="1" fill="#6e6e6e"/><rect x="172" y="352.38" width="1" height="1" fill="#6e6e6e"/><rect x="182" y="352.38" width="1" height="1" fill="#6e6e6e"/><rect x="192" y="352.38" width="1" height="1" fill="#6e6e6e"/><rect x="202" y="352.38" width="1" height="1" fill="#6e6e6e"/><rect x="212" y="352.38" width="1" height="1" fill="#6e6e6e"/><rect x="222" y="352.38" width="1" height="1" fill="#6e6e6e"/><rect x="232" y="352.38" width="1" height="1" fill="#6e6e6e"/><rect x="242" y="352.38" width="1" height="1" fill="#6e6e6e"/><rect x="252" y="352.38" width="1" height="1" fill="#6e6e6e"/><rect x="262" y="352.38" width="1" height="1" fill="#6e6e6e"/><rect x="272" y="352.38" width="1" height="1" fill="#6e6e6e"/><rect x="282" y="352.38" width="1" height="1" fill="#6e6e6e"/><rect x="292" y="352.38" width="1" height="1" fill="#6e6e6e"/><rect x="302" y="352.38" width="1" height="1" fill="#6e6e6e"/><rect x="312" y="352.38" width="1" height="1" fill="#6e6e6e"/><rect x="322" y="352.38" width="1" height="1" fill="#6e6e6e"/><rect x="332" y="352.38" width="1" height="1" fill="#6e6e6e"/><rect x="342" y="352.38" width="1" height="1" fill="#6e6e6e"/><rect x="352" y="352.38" width="1" height="1" fill="#6e6e6e"/><rect x="362" y="352.38" width="1" height="1" fill="#6e6e6e"/><rect x="372" y="352.38" width="1" height="1" fill="#6e6e6e"/><rect x="382" y="352.38" width="1" height="1" fill="#6e6e6e"/><rect x="392" y="352.38" width="1" height="1" fill="#6e6e6e"/><rect x="402" y="352.38" width="1" height="1" fill="#6e6e6e"/><rect x="412" y="352.38" width="1" height="1" fill="#6e6e6e"/><rect x="422" y="352.38" width="1" height="1" fill="#6e6e6e"/><rect x="432" y="352.38" width="1" height="1" fill="#6e6e6e"/><rect x="442" y="352.38" width="1" height="1" fill="#6e6e6e"/><rect x="452" y="352.38" width="1" height="1" fill="#6e6e6e"/><rect x="462" y="352.38" width="1" height="1" fill="#6e6e6e"/><rect x="472" y="352.38" width="1" height="1" fill="#6e6e6e"/><rect x="482" y="352.38" width="1" height="1" fill="#6e6e6e"/><rect x="492" y="352.38" width="1" height="1" fill="#6e6e6e"/><rect x="502" y="352.38" width="1" height="1" fill="#6e6e6e"/><rect x="512" y="352.38" width="1" height="1" fill="#6e6e6e"/><rect x="522" y="352.38" width="1" height="1" fill="#6e6e6e"/><rect x="532" y="352.38" width="1" height="1" fill="#6e6e6e"/><rect x="542" y="352.38" width="1" height="1" fill="#6e6e6e"/><rect x="552" y="352.38" width="1" height="1" fill="#6e6e6e"/><rect x="562" y="352.38" width="1" height="1" fill="#6e6e6e"/><rect x="572" y="352.38" width="1" height="1" fill="#6e6e6e"/><rect x="582" y="352.38" width="1" height="1" fill="#6e6e6e"/><rect x="592" y="352.38" width="1" height="1" fill="#6e6e6e"/><rect x="602" y="352.38" width="1" height="1" fill="#6e6e6e"/><rect x="612" y="352.38" width="1" height="1" fill="#6e6e6e"/><rect x="622" y="352.38" width="1" height="1" fill="#6e6e6e"/><rect x="632" y="352.38" width="1" height="1" fill="#6e6e6e"/><rect x="642" y="352.38" width="1" height="1" fill="#6e6e6e"/><rect x="652" y="352.38" width="1" height="1" fill="#6e6e6e"/><rect x="662" y="352.38" width="1" height="1" fill="#6e6e6e"/><rect x="672" y="352.38" width="1" height="1" fill="#6e6e6e"/><rect x="682" y="352.38" width="1" height="1" fill="#6e6e6e"/><rect x="692" y="352.38" width="1" height="1" fill="#6e6e6e"/><rect x="702" y="352.38" width="1" height="1" fill="#6e6e6e"/><rect x="712" y="352.38" width="1" height="1" fill="#6e6e6e"/><rect x="722" y="352.38" width="1" height="1" fill="#6e6e6e"/><rect x="732" y="352.38" width="1" height="1" fill="#6e6e6e"/><rect x="742" y="352.38" width="1" height="1" fill="#6e6e6e"/><rect x="752" y="352.38" width="1" height="1" fill="#6e6e6e"/><rect x="762" y="352.38" width="1" height="1" fill="#6e6e6e"/><rect x="772" y="352.38" width="1" height="1" fill="#6e6e6e"/><rect x="782" y="352.38" width="1" height="1" fill="#6e6e6e"/><rect x="792" y="352.38" width="1" height="1" fill="#6e6e6e"/><rect x="802" y="352.38" width="1" height="1" fill="#6e6e6e"/><rect x="812" y="352.38" width="1" height="1" fill="#6e6e6e"/><rect x="822" y="352.38" width="1" height="1" fill="#6e6e6e"/><rect x="832" y="352.38" width="1" height="1" fill="#6e6e6e"/><rect x="842" y="352.38" width="1" height="1" fill="#6e6e6e"/><rect x="852" y="352.38" width="1" height="1" fill="#6e6e6e"/><rect x="862" y="352.38" width="1" height="1" fill="#6e6e6e"/><rect x="872" y="352.38" width="1" height="1" fill="#6e6e6e"/><rect x="882" y="352.38" width="1" height="1" fill="#6e6e6e"/><rect x="892" y="352.38" width="1" height="1" fill="#6e6e6e"/><rect x="902" y="352.38" width="1" height="1" fill="#6e6e6e"/><rect x="912" y="352.38" width="1" height="1" fill="#6e6e6e"/><rect x="922" y="352.38" width="1" height="1" fill="#6e6e6e"/><rect x="932" y="352.38" width="1" height="1" fill="#6e6e6e"/><rect x="942" y="352.38" width="1" height="1" fill="#6e6e6e"/><rect x="952" y="352.38" width="1" height="1" fill="#6e6e6e"/><rect x="962" y="352.38" width="1" height="1" fill="#6e6e6e"/><rect x="972" y="352.38" width="1" height="1" fill="#6e6e6e"/><rect x="982" y="352.38" width="1" height="1" fill="#6e6e6e"/><rect x="992" y="352.38" width="1" height="1" fill="#6e6e6e"/><rect x="1002" y="352.38" width="1" height="1" fill="#6e6e6e"/><rect x="22" y="404.25" width="1" height="1" fill="#6e6e6e"/><rect x="32" y="404.25" width="1" height="1" fill="#6e6e6e"/><rect x="42" y="404.25" width="1" height="1" fill="#6e6e6e"/><rect x="52" y="404.25" width="1" height="1" fill="#6e6e6e"/><rect x="62" y="404.25" width="1" height="1" fill="#6e6e6e"/><rect x="72" y="404.25" width="1" height="1" fill="#6e6e6e"/><rect x="82" y="404.25" width="1" height="1" fill="#6e6e6e"/><rect x="92" y="404.25" width="1" height="1" fill="#6e6e6e"/><rect x="102" y="404.25" width="1" height="1" fill="#6e6e6e"/><rect x="112" y="404.25" width="1" height="1" fill="#6e6e6e"/><rect x="122" y="404.25" width="1" height="1" fill="#6e6e6e"/><rect x="132" y="404.25" width="1" height="1" fill="#6e6e6e"/><rect x="142" y="404.25" width="1" height="1" fill="#6e6e6e"/><rect x="152" y="404.25" width="1" height="1" fill="#6e6e6e"/><rect x="162" y="404.25" width="1" height="1" fill="#6e6e6e"/><rect x="172" y="404.25" width="1" height="1" fill="#6e6e6e"/><rect x="182" y="404.25" width="1" height="1" fill="#6e6e6e"/><rect x="192" y="404.25" width="1" height="1" fill="#6e6e6e"/><rect x="202" y="404.25" width="1" height="1" fill="#6e6e6e"/><rect x="212" y="404.25" width="1" height="1" fill="#6e6e6e"/><rect x="222" y="404.25" width="1" height="1" fill="#6e6e6e"/><rect x="232" y="404.25" width="1" height="1" fill="#6e6e6e"/><rect x="242" y="404.25" width="1" height="1" fill="#6e6e6e"/><rect x="252" y="404.25" width="1" height="1" fill="#6e6e6e"/><rect x="262" y="404.25" width="1" height="1" fill="#6e6e6e"/><rect x="272" y="404.25" width="1" height="1" fill="#6e6e6e"/><rect x="282" y="404.25" width="1" height="1" fill="#6e6e6e"/><rect x="292" y="404.25" width="1" height="1" fill="#6e6e6e"/><rect x="302" y="404.25" width="1" height="1" fill="#6e6e6e"/><rect x="312" y="404.25" width="1" height="1" fill="#6e6e6e"/><rect x="322" y="404.25" width="1" height="1" fill="#6e6e6e"/><rect x="332" y="404.25" width="1" height="1" fill="#6e6e6e"/><rect x="342" y="404.25" width="1" height="1" fill="#6e6e6e"/><rect x="352" y="404.25" width="1" height="1" fill="#6e6e6e"/><rect x="362" y="404.25" width="1" height="1" fill="#6e6e6e"/><rect x="372" y="404.25" width="1" height="1" fill="#6e6e6e"/><rect x="382" y="404.25" width="1" height="1" fill="#6e6e6e"/><rect x="392" y="404.25" width="1" height="1" fill="#6e6e6e"/><rect x="402" y="404.25" width="1" height="1" fill="#6e6e6e"/><rect x="412" y="404.25" width="1" height="1" fill="#6e6e6e"/><rect x="422" y="404.25" width="1" height="1" fill="#6e6e6e"/><rect x="432" y="404.25" width="1" height="1" fill="#6e6e6e"/><rect x="442" y="404.25" width="1" height="1" fill="#6e6e6e"/><rect x="452" y="404.25" width="1" height="1" fill="#6e6e6e"/><rect x="462" y="404.25" width="1" height="1" fill="#6e6e6e"/><rect x="472" y="404.25" width="1" height="1" fill="#6e6e6e"/><rect x="482" y="404.25" width="1" height="1" fill="#6e6e6e"/><rect x="492" y="404.25" width="1" height="1" fill="#6e6e6e"/><rect x="502" y="404.25" width="1" height="1" fill="#6e6e6e"/><rect x="512" y="404.25" width="1" height="1" fill="#6e6e6e"/><rect x="522" y="404.25" width="1" height="1" fill="#6e6e6e"/><rect x="532" y="404.25" width="1" height="1" fill="#6e6e6e"/><rect x="542" y="404.25" width="1" height="1" fill="#6e6e6e"/><rect x="552" y="404.25" width="1" height="1" fill="#6e6e6e"/><rect x="562" y="404.25" width="1" height="1" fill="#6e6e6e"/><rect x="572" y="404.25" width="1" height="1" fill="#6e6e6e"/><rect x="582" y="404.25" width="1" height="1" fill="#6e6e6e"/><rect x="592" y="404.25" width="1" height="1" fill="#6e6e6e"/><rect x="602" y="404.25" width="1" height="1" fill="#6e6e6e"/><rect x="612" y="404.25" width="1" height="1" fill="#6e6e6e"/><rect x="622" y="404.25" width="1" height="1" fill="#6e6e6e"/><rect x="632" y="404.25" width="1" height="1" fill="#6e6e6e"/><rect x="642" y="404.25" width="1" height="1" fill="#6e6e6e"/><rect x="652" y="404.25" width="1" height="1" fill="#6e6e6e"/><rect x="662" y="404.25" width="1" height="1" fill="#6e6e6e"/><rect x="672" y="404.25" width="1" height="1" fill="#6e6e6e"/><rect x="682" y="404.25" width="1" height="1" fill="#6e6e6e"/><rect x="692" y="404.25" width="1" height="1" fill="#6e6e6e"/><rect x="702" y="404.25" width="1" height="1" fill="#6e6e6e"/><rect x="712" y="404.25" width="1" height="1" fill="#6e6e6e"/><rect x="722" y="404.25" width="1" height="1" fill="#6e6e6e"/><rect x="732" y="404.25" width="1" height="1" fill="#6e6e6e"/><rect x="742" y="404.25" width="1" height="1" fill="#6e6e6e"/><rect x="752" y="404.25" width="1" height="1" fill="#6e6e6e"/><rect x="762" y="404.25" width="1" height="1" fill="#6e6e6e"/><rect x="772" y="404.25" width="1" height="1" fill="#6e6e6e"/><rect x="782" y="404.25" width="1" height="1" fill="#6e6e6e"/><rect x="792" y="404.25" width="1" height="1" fill="#6e6e6e"/><rect x="802" y="404.25" width="1" height="1" fill="#6e6e6e"/><rect x="812" y="404.25" width="1" height="1" fill="#6e6e6e"/><rect x="822" y="404.25" width="1" height="1" fill="#6e6e6e"/><rect x="832" y="404.25" width="1" height="1" fill="#6e6e6e"/><rect x="842" y="404.25" width="1" height="1" fill="#6e6e6e"/><rect x="852" y="404.25" width="1" height="1" fill="#6e6e6e"/><rect x="862" y="404.25" width="1" height="1" fill="#6e6e6e"/><rect x="872" y="404.25" width="1" height="1" fill="#6e6e6e"/><rect x="882" y="404.25" width="1" height="1" fill="#6e6e6e"/><rect x="892" y="404.25" width="1" height="1" fill="#6e6e6e"/><rect x="902" y="404.25" width="1" height="1" fill="#6e6e6e"/><rect x="912" y="404.25" width="1" height="1" fill="#6e6e6e"/><rect x="922" y="404.25" width="1" height="1" fill="#6e6e6e"/><rect x="932" y="404.25" width="1" height="1" fill="#6e6e6e"/><rect x="942" y="404.25" width="1" height="1" fill="#6e6e6e"/><rect x="952" y="404.25" width="1" height="1" fill="#6e6e6e"/><rect x="962" y="404.25" width="1" height="1" fill="#6e6e6e"/><rect x="972" y="404.25" width="1" height="1" fill="#6e6e6e"/><rect x="982" y="404.25" width="1" height="1" fill="#6e6e6e"/><rect x="992" y="404.25" width="1" height="1" fill="#6e6e6e"/><rect x="1002" y="404.25" width="1" height="1" fill="#6e6e6e"/><rect x="22" y="456.12" width="1" height="1" fill="#6e6e6e"/><rect x="32" y="456.12" width="1" height="1" fill="#6e6e6e"/><rect x="42" y="456.12" width="1" height="1" fill="#6e6e6e"/><rect x="52" y="456.12" width="1" height="1" fill="#6e6e6e"/><rect x="62" y="456.12" width="1" height="1" fill="#6e6e6e"/><rect x="72" y="456.12" width="1" height="1" fill="#6e6e6e"/><rect x="82" y="456.12" width="1" height="1" fill="#6e6e6e"/><rect x="92" y="456.12" width="1" height="1" fill="#6e6e6e"/><rect x="102" y="456.12" width="1" height="1" fill="#6e6e6e"/><rect x="112" y="456.12" width="1" height="1" fill="#6e6e6e"/><rect x="122" y="456.12" width="1" height="1" fill="#6e6e6e"/><rect x="132" y="456.12" width="1" height="1" fill="#6e6e6e"/><rect x="142" y="456.12" width="1" height="1" fill="#6e6e6e"/><rect x="152" y="456.12" width="1" height="1" fill="#6e6e6e"/><rect x="162" y="456.12" width="1" height="1" fill="#6e6e6e"/><rect x="172" y="456.12" width="1" height="1" fill="#6e6e6e"/><rect x="182" y="456.12" width="1" height="1" fill="#6e6e6e"/><rect x="192" y="456.12" width="1" height="1" fill="#6e6e6e"/><rect x="202" y="456.12" width="1" height="1" fill="#6e6e6e"/><rect x="212" y="456.12" width="1" height="1" fill="#6e6e6e"/><rect x="222" y="456.12" width="1" height="1" fill="#6e6e6e"/><rect x="232" y="456.12" width="1" height="1" fill="#6e6e6e"/><rect x="242" y="456.12" width="1" height="1" fill="#6e6e6e"/><rect x="252" y="456.12" width="1" height="1" fill="#6e6e6e"/><rect x="262" y="456.12" width="1" height="1" fill="#6e6e6e"/><rect x="272" y="456.12" width="1" height="1" fill="#6e6e6e"/><rect x="282" y="456.12" width="1" height="1" fill="#6e6e6e"/><rect x="292" y="456.12" width="1" height="1" fill="#6e6e6e"/><rect x="302" y="456.12" width="1" height="1" fill="#6e6e6e"/><rect x="312" y="456.12" width="1" height="1" fill="#6e6e6e"/><rect x="322" y="456.12" width="1" height="1" fill="#6e6e6e"/><rect x="332" y="456.12" width="1" height="1" fill="#6e6e6e"/><rect x="342" y="456.12" width="1" height="1" fill="#6e6e6e"/><rect x="352" y="456.12" width="1" height="1" fill="#6e6e6e"/><rect x="362" y="456.12" width="1" height="1" fill="#6e6e6e"/><rect x="372" y="456.12" width="1" height="1" fill="#6e6e6e"/><rect x="382" y="456.12" width="1" height="1" fill="#6e6e6e"/><rect x="392" y="456.12" width="1" height="1" fill="#6e6e6e"/><rect x="402" y="456.12" width="1" height="1" fill="#6e6e6e"/><rect x="412" y="456.12" width="1" height="1" fill="#6e6e6e"/><rect x="422" y="456.12" width="1" height="1" fill="#6e6e6e"/><rect x="432" y="456.12" width="1" height="1" fill="#6e6e6e"/><rect x="442" y="456.12" width="1" height="1" fill="#6e6e6e"/><rect x="452" y="456.12" width="1" height="1" fill="#6e6e6e"/><rect x="462" y="456.12" width="1" height="1" fill="#6e6e6e"/><rect x="472" y="456.12" width="1" height="1" fill="#6e6e6e"/><rect x="482" y="456.12" width="1" height="1" fill="#6e6e6e"/><rect x="492" y="456.12" width="1" height="1" fill="#6e6e6e"/><rect x="502" y="456.12" width="1" height="1" fill="#6e6e6e"/><rect x="512" y="456.12" width="1" height="1" fill="#6e6e6e"/><rect x="522" y="456.12" width="1" height="1" fill="#6e6e6e"/><rect x="532" y="456.12" width="1" height="1" fill="#6e6e6e"/><rect x="542" y="456.12" width="1" height="1" fill="#6e6e6e"/><rect x="552" y="456.12" width="1" height="1" fill="#6e6e6e"/><rect x="562" y="456.12" width="1" height="1" fill="#6e6e6e"/><rect x="572" y="456.12" width="1" height="1" fill="#6e6e6e"/><rect x="582" y="456.12" width="1" height="1" fill="#6e6e6e"/><rect x="592" y="456.12" width="1" height="1" fill="#6e6e6e"/><rect x="602" y="456.12" width="1" height="1" fill="#6e6e6e"/><rect x="612" y="456.12" width="1" height="1" fill="#6e6e6e"/><rect x="622" y="456.12" width="1" height="1" fill="#6e6e6e"/><rect x="632" y="456.12" width="1" height="1" fill="#6e6e6e"/><rect x="642" y="456.12" width="1" height="1" fill="#6e6e6e"/><rect x="652" y="456.12" width="1" height="1" fill="#6e6e6e"/><rect x="662" y="456.12" width="1" height="1" fill="#6e6e6e"/><rect x="672" y="456.12" width="1" height="1" fill="#6e6e6e"/><rect x="682" y="456.12" width="1" height="1" fill="#6e6e6e"/><rect x="692" y="456.12" width="1" height="1" fill="#6e6e6e"/><rect x="702" y="456.12" width="1" height="1" fill="#6e6e6e"/><rect x="712" y="456.12" width="1" height="1" fill="#6e6e6e"/><rect x="722" y="456.12" width="1" height="1" fill="#6e6e6e"/><rect x="732" y="456.12" width="1" height="1" fill="#6e6e6e"/><rect x="742" y="456.12" width="1" height="1" fill="#6e6e6e"/><rect x="752" y="456.12" width="1" height="1" fill="#6e6e6e"/><rect x="762" y="456.12" width="1" height="1" fill="#6e6e6e"/><rect x="772" y="456.12" width="1" height="1" fill="#6e6e6e"/><rect x="782" y="456.12" width="1" height="1" fill="#6e6e6e"/><rect x="792" y="456.12" width="1" height="1" fill="#6e6e6e"/><rect x="802" y="456.12" width="1" height="1" fill="#6e6e6e"/><rect x="812" y="456.12" width="1" height="1" fill="#6e6e6e"/><rect x="822" y="456.12" width="1" height="1" fill="#6e6e6e"/><rect x="832" y="456.12" width="1" height="1" fill="#6e6e6e"/><rect x="842" y="456.12" width="1" height="1" fill="#6e6e6e"/><rect x="852" y="456.12" width="1" height="1" fill="#6e6e6e"/><rect x="862" y="456.12" width="1" height="1" fill="#6e6e6e"/><rect x="872" y="456.12" width="1" height="1" fill="#6e6e6e"/><rect x="882" y="456.12" width="1" height="1" fill="#6e6e6e"/><rect x="892" y="456.12" width="1" height="1" fill="#6e6e6e"/><rect x="902" y="456.12" width="1" height="1" fill="#6e6e6e"/><rect x="912" y="456.12" width="1" height="1" fill="#6e6e6e"/><rect x="922" y="456.12" width="1" height="1" fill="#6e6e6e"/><rect x="932" y="456.12" width="1" height="1" fill="#6e6e6e"/><rect x="942" y="456.12" width="1" height="1" fill="#6e6e6e"/><rect x="952" y="456.12" width="1" height="1" fill="#6e6e6e"/><rect x="962" y="456.12" width="1" height="1" fill="#6e6e6e"/><rect x="972" y="456.12" width="1" height="1" fill="#6e6e6e"/><rect x="982" y="456.12" width="1" height="1" fill="#6e6e6e"/><rect x="992" y="456.12" width="1" height="1" fill="#6e6e6e"/><rect x="1002" y="456.12" width="1" height="1" fill="#6e6e6e"/><rect x="112" y="98.19" width="1" height="1" fill="#707070"/><rect x="112" y="103.38" width="1" height="1" fill="#707070"/><rect x="112" y="108.56" width="1" height="1" fill="#707070"/><rect x="112" y="113.75" width="1" height="1" fill="#707070"/><rect x="112" y="118.94" width="1" height="1" fill="#707070"/><rect x="112" y="124.12" width="1" height="1" fill="#707070"/><rect x="112" y="129.31" width="1" height="1" fill="#707070"/><rect x="112" y="134.50" width="1" height="1" fill="#707070"/><rect x="112" y="139.69" width="1" height="1" fill="#707070"/><rect x="112" y="150.06" width="1" height="1" fill="#707070"/><rect x="112" y="155.25" width="1" height="1" fill="#707070"/><rect x="112" y="160.44" width="1" height="1" fill="#707070"/><rect x="112" y="165.62" width="1" height="1" fill="#707070"/><rect x="112" y="170.81" width="1" height="1" fill="#707070"/><rect x="112" y="176.00" width="1" height="1" fill="#707070"/><rect x="112" y="181.19" width="1" height="1" fill="#707070"/><rect x="112" y="186.38" width="1" height="1" fill="#707070"/><rect x="112" y="191.56" width="1" height="1" fill="#707070"/><rect x="112" y="201.94" width="1" height="1" fill="#707070"/><rect x="112" y="207.12" width="1" height="1" fill="#707070"/><rect x="112" y="212.31" width="1" height="1" fill="#707070"/><rect x="112" y="217.50" width="1" height="1" fill="#707070"/><rect x="112" y="222.69" width="1" height="1" fill="#707070"/><rect x="112" y="227.88" width="1" height="1" fill="#707070"/><rect x="112" y="233.06" width="1" height="1" fill="#707070"/><rect x="112" y="238.25" width="1" height="1" fill="#707070"/><rect x="112" y="243.44" width="1" height="1" fill="#707070"/><rect x="112" y="253.81" width="1" height="1" fill="#707070"/><rect x="112" y="259.00" width="1" height="1" fill="#707070"/><rect x="112" y="264.19" width="1" height="1" fill="#707070"/><rect x="112" y="269.38" width="1" height="1" fill="#707070"/><rect x="112" y="274.56" width="1" height="1" fill="#707070"/><rect x="112" y="279.75" width="1" height="1" fill="#707070"/><rect x="112" y="284.94" width="1" height="1" fill="#707070"/><rect x="112" y="290.12" width="1" height="1" fill="#707070"/><rect x="112" y="295.31" width="1" height="1" fill="#707070"/><rect x="112" y="305.69" width="1" height="1" fill="#707070"/><rect x="112" y="310.88" width="1" height="1" fill="#707070"/><rect x="112" y="316.06" width="1" height="1" fill="#707070"/><rect x="112" y="321.25" width="1" height="1" fill="#707070"/><rect x="112" y="326.44" width="1" height="1" fill="#707070"/><rect x="112" y="331.62" width="1" height="1" fill="#707070"/><rect x="112" y="336.81" width="1" height="1" fill="#707070"/><rect x="112" y="342.00" width="1" height="1" fill="#707070"/><rect x="112" y="347.19" width="1" height="1" fill="#707070"/><rect x="112" y="357.56" width="1" height="1" fill="#707070"/><rect x="112" y="362.75" width="1" height="1" fill="#707070"/><rect x="112" y="367.94" width="1" height="1" fill="#707070"/><rect x="112" y="373.12" width="1" height="1" fill="#707070"/><rect x="112" y="378.31" width="1" height="1" fill="#707070"/><rect x="112" y="383.50" width="1" height="1" fill="#707070"/><rect x="112" y="388.69" width="1" height="1" fill="#707070"/><rect x="112" y="393.88" width="1" height="1" fill="#707070"/><rect x="112" y="399.06" width="1" height="1" fill="#707070"/><rect x="112" y="409.44" width="1" height="1" fill="#707070"/><rect x="112" y="414.62" width="1" height="1" fill="#707070"/><rect x="112" y="419.81" width="1" height="1" fill="#707070"/><rect x="112" y="425.00" width="1" height="1" fill="#707070"/><rect x="112" y="430.19" width="1" height="1" fill="#707070"/><rect x="112" y="435.38" width="1" height="1" fill="#707070"/><rect x="112" y="440.56" width="1" height="1" fill="#707070"/><rect x="112" y="445.75" width="1" height="1" fill="#707070"/><rect x="112" y="450.94" width="1" height="1" fill="#707070"/><rect x="112" y="461.31" width="1" height="1" fill="#707070"/><rect x="112" y="466.50" width="1" height="1" fill="#707070"/><rect x="112" y="471.69" width="1" height="1" fill="#707070"/><rect x="112" y="476.88" width="1" height="1" fill="#707070"/><rect x="112" y="482.06" width="1" height="1" fill="#707070"/><rect x="112" y="487.25" width="1" height="1" fill="#707070"/><rect x="112" y="492.44" width="1" height="1" fill="#707070"/><rect x="112" y="497.62" width="1" height="1" fill="#707070"/><rect x="112" y="502.81" width="1" height="1" fill="#707070"/><rect x="212" y="98.19" width="1" height="1" fill="#707070"/><rect x="212" y="103.38" width="1" height="1" fill="#707070"/><rect x="212" y="108.56" width="1" height="1" fill="#707070"/><rect x="212" y="113.75" width="1" height="1" fill="#707070"/><rect x="212" y="118.94" width="1" height="1" fill="#707070"/><rect x="212" y="124.12" width="1" height="1" fill="#707070"/><rect x="212" y="129.31" width="1" height="1" fill="#707070"/><rect x="212" y="134.50" width="1" height="1" fill="#707070"/><rect x="212" y="139.69" width="1" height="1" fill="#707070"/><rect x="212" y="150.06" width="1" height="1" fill="#707070"/><rect x="212" y="155.25" width="1" height="1" fill="#707070"/><rect x="212" y="160.44" width="1" height="1" fill="#707070"/><rect x="212" y="165.62" width="1" height="1" fill="#707070"/><rect x="212" y="170.81" width="1" height="1" fill="#707070"/><rect x="212" y="176.00" width="1" height="1" fill="#707070"/><rect x="212" y="181.19" width="1" height="1" fill="#707070"/><rect x="212" y="186.38" width="1" height="1" fill="#707070"/><rect x="212" y="191.56" width="1" height="1" fill="#707070"/><rect x="212" y="201.94" width="1" height="1" fill="#707070"/><rect x="212" y="207.12" width="1" height="1" fill="#707070"/><rect x="212" y="212.31" width="1" height="1" fill="#707070"/><rect x="212" y="217.50" width="1" height="1" fill="#707070"/><rect x="212" y="222.69" width="1" height="1" fill="#707070"/><rect x="212" y="227.88" width="1" height="1" fill="#707070"/><rect x="212" y="233.06" width="1" height="1" fill="#707070"/><rect x="212" y="238.25" width="1" height="1" fill="#707070"/><rect x="212" y="243.44" width="1" height="1" fill="#707070"/><rect x="212" y="253.81" width="1" height="1" fill="#707070"/><rect x="212" y="259.00" width="1" height="1" fill="#707070"/><rect x="212" y="264.19" width="1" height="1" fill="#707070"/><rect x="212" y="269.38" width="1" height="1" fill="#707070"/><rect x="212" y="274.56" width="1" height="1" fill="#707070"/><rect x="212" y="279.75" width="1" height="1" fill="#707070"/><rect x="212" y="284.94" width="1" height="1" fill="#707070"/><rect x="212" y="290.12" width="1" height="1" fill="#707070"/><rect x="212" y="295.31" width="1" height="1" fill="#707070"/><rect x="212" y="305.69" width="1" height="1" fill="#707070"/><rect x="212" y="310.88" width="1" height="1" fill="#707070"/><rect x="212" y="316.06" width="1" height="1" fill="#707070"/><rect x="212" y="321.25" width="1" height="1" fill="#707070"/><rect x="212" y="326.44" width="1" height="1" fill="#707070"/><rect x="212" y="331.62" width="1" height="1" fill="#707070"/><rect x="212" y="336.81" width="1" height="1" fill="#707070"/><rect x="212" y="342.00" width="1" height="1" fill="#707070"/><rect x="212" y="347.19" width="1" height="1" fill="#707070"/><rect x="212" y="357.56" width="1" height="1" fill="#707070"/><rect x="212" y="362.75" width="1" height="1" fill="#707070"/><rect x="212" y="367.94" width="1" height="1" fill="#707070"/><rect x="212" y="373.12" width="1" height="1" fill="#707070"/><rect x="212" y="378.31" width="1" height="1" fill="#707070"/><rect x="212" y="383.50" width="1" height="1" fill="#707070"/><rect x="212" y="388.69" width="1" height="1" fill="#707070"/><rect x="212" y="393.88" width="1" height="1" fill="#707070"/><rect x="212" y="399.06" width="1" height="1" fill="#707070"/><rect x="212" y="409.44" width="1" height="1" fill="#707070"/><rect x="212" y="414.62" width="1" height="1" fill="#707070"/><rect x="212" y="419.81" width="1" height="1" fill="#707070"/><rect x="212" y="425.00" width="1" height="1" fill="#707070"/><rect x="212" y="430.19" width="1" height="1" fill="#707070"/><rect x="212" y="435.38" width="1" height="1" fill="#707070"/><rect x="212" y="440.56" width="1" height="1" fill="#707070"/><rect x="212" y="445.75" width="1" height="1" fill="#707070"/><rect x="212" y="450.94" width="1" height="1" fill="#707070"/><rect x="212" y="461.31" width="1" height="1" fill="#707070"/><rect x="212" y="466.50" width="1" height="1" fill="#707070"/><rect x="212" y="471.69" width="1" height="1" fill="#707070"/><rect x="212" y="476.88" width="1" height="1" fill="#707070"/><rect x="212" y="482.06" width="1" height="1" fill="#707070"/><rect x="212" y="487.25" width="1" height="1" fill="#707070"/><rect x="212" y="492.44" width="1" height="1" fill="#707070"/><rect x="212" y="497.62" width="1" height="1" fill="#707070"/><rect x="212" y="502.81" width="1" height="1" fill="#707070"/><rect x="312" y="98.19" width="1" height="1" fill="#707070"/><rect x="312" y="103.38" width="1" height="1" fill="#707070"/><rect x="312" y="108.56" width="1" height="1" fill="#707070"/><rect x="312" y="113.75" width="1" height="1" fill="#707070"/><rect x="312" y="118.94" width="1" height="1" fill="#707070"/><rect x="312" y="124.12" width="1" height="1" fill="#707070"/><rect x="312" y="129.31" width="1" height="1" fill="#707070"/><rect x="312" y="134.50" width="1" height="1" fill="#707070"/><rect x="312" y="139.69" width="1" height="1" fill="#707070"/><rect x="312" y="150.06" width="1" height="1" fill="#707070"/><rect x="312" y="155.25" width="1" height="1" fill="#707070"/><rect x="312" y="160.44" width="1" height="1" fill="#707070"/><rect x="312" y="165.62" width="1" height="1" fill="#707070"/><rect x="312" y="170.81" width="1" height="1" fill="#707070"/><rect x="312" y="176.00" width="1" height="1" fill="#707070"/><rect x="312" y="181.19" width="1" height="1" fill="#707070"/><rect x="312" y="186.38" width="1" height="1" fill="#707070"/><rect x="312" y="191.56" width="1" height="1" fill="#707070"/><rect x="312" y="201.94" width="1" height="1" fill="#707070"/><rect x="312" y="207.12" width="1" height="1" fill="#707070"/><rect x="312" y="212.31" width="1" height="1" fill="#707070"/><rect x="312" y="217.50" width="1" height="1" fill="#707070"/><rect x="312" y="222.69" width="1" height="1" fill="#707070"/><rect x="312" y="227.88" width="1" height="1" fill="#707070"/><rect x="312" y="233.06" width="1" height="1" fill="#707070"/><rect x="312" y="238.25" width="1" height="1" fill="#707070"/><rect x="312" y="243.44" width="1" height="1" fill="#707070"/><rect x="312" y="253.81" width="1" height="1" fill="#707070"/><rect x="312" y="259.00" width="1" height="1" fill="#707070"/><rect x="312" y="264.19" width="1" height="1" fill="#707070"/><rect x="312" y="269.38" width="1" height="1" fill="#707070"/><rect x="312" y="274.56" width="1" height="1" fill="#707070"/><rect x="312" y="279.75" width="1" height="1" fill="#707070"/><rect x="312" y="284.94" width="1" height="1" fill="#707070"/><rect x="312" y="290.12" width="1" height="1" fill="#707070"/><rect x="312" y="295.31" width="1" height="1" fill="#707070"/><rect x="312" y="305.69" width="1" height="1" fill="#707070"/><rect x="312" y="310.88" width="1" height="1" fill="#707070"/><rect x="312" y="316.06" width="1" height="1" fill="#707070"/><rect x="312" y="321.25" width="1" height="1" fill="#707070"/><rect x="312" y="326.44" width="1" height="1" fill="#707070"/><rect x="312" y="331.62" width="1" height="1" fill="#707070"/><rect x="312" y="336.81" width="1" height="1" fill="#707070"/><rect x="312" y="342.00" width="1" height="1" fill="#707070"/><rect x="312" y="347.19" width="1" height="1" fill="#707070"/><rect x="312" y="357.56" width="1" height="1" fill="#707070"/><rect x="312" y="362.75" width="1" height="1" fill="#707070"/><rect x="312" y="367.94" width="1" height="1" fill="#707070"/><rect x="312" y="373.12" width="1" height="1" fill="#707070"/><rect x="312" y="378.31" width="1" height="1" fill="#707070"/><rect x="312" y="383.50" width="1" height="1" fill="#707070"/><rect x="312" y="388.69" width="1" height="1" fill="#707070"/><rect x="312" y="393.88" width="1" height="1" fill="#707070"/><rect x="312" y="399.06" width="1" height="1" fill="#707070"/><rect x="312" y="409.44" width="1" height="1" fill="#707070"/><rect x="312" y="414.62" width="1" height="1" fill="#707070"/><rect x="312" y="419.81" width="1" height="1" fill="#707070"/><rect x="312" y="425.00" width="1" height="1" fill="#707070"/><rect x="312" y="430.19" width="1" height="1" fill="#707070"/><rect x="312" y="435.38" width="1" height="1" fill="#707070"/><rect x="312" y="440.56" width="1" height="1" fill="#707070"/><rect x="312" y="445.75" width="1" height="1" fill="#707070"/><rect x="312" y="450.94" width="1" height="1" fill="#707070"/><rect x="312" y="461.31" width="1" height="1" fill="#707070"/><rect x="312" y="466.50" width="1" height="1" fill="#707070"/><rect x="312" y="471.69" width="1" height="1" fill="#707070"/><rect x="312" y="476.88" width="1" height="1" fill="#707070"/><rect x="312" y="482.06" width="1" height="1" fill="#707070"/><rect x="312" y="487.25" width="1" height="1" fill="#707070"/><rect x="312" y="492.44" width="1" height="1" fill="#707070"/><rect x="312" y="497.62" width="1" height="1" fill="#707070"/><rect x="312" y="502.81" width="1" height="1" fill="#707070"/><rect x="412" y="98.19" width="1" height="1" fill="#707070"/><rect x="412" y="103.38" width="1" height="1" fill="#707070"/><rect x="412" y="108.56" width="1" height="1" fill="#707070"/><rect x="412" y="113.75" width="1" height="1" fill="#707070"/><rect x="412" y="118.94" width="1" height="1" fill="#707070"/><rect x="412" y="124.12" width="1" height="1" fill="#707070"/><rect x="412" y="129.31" width="1" height="1" fill="#707070"/><rect x="412" y="134.50" width="1" height="1" fill="#707070"/><rect x="412" y="139.69" width="1" height="1" fill="#707070"/><rect x="412" y="150.06" width="1" height="1" fill="#707070"/><rect x="412" y="155.25" width="1" height="1" fill="#707070"/><rect x="412" y="160.44" width="1" height="1" fill="#707070"/><rect x="412" y="165.62" width="1" height="1" fill="#707070"/><rect x="412" y="170.81" width="1" height="1" fill="#707070"/><rect x="412" y="176.00" width="1" height="1" fill="#707070"/><rect x="412" y="181.19" width="1" height="1" fill="#707070"/><rect x="412" y="186.38" width="1" height="1" fill="#707070"/><rect x="412" y="191.56" width="1" height="1" fill="#707070"/><rect x="412" y="201.94" width="1" height="1" fill="#707070"/><rect x="412" y="207.12" width="1" height="1" fill="#707070"/><rect x="412" y="212.31" width="1" height="1" fill="#707070"/><rect x="412" y="217.50" width="1" height="1" fill="#707070"/><rect x="412" y="222.69" width="1" height="1" fill="#707070"/><rect x="412" y="227.88" width="1" height="1" fill="#707070"/><rect x="412" y="233.06" width="1" height="1" fill="#707070"/><rect x="412" y="238.25" width="1" height="1" fill="#707070"/><rect x="412" y="243.44" width="1" height="1" fill="#707070"/><rect x="412" y="253.81" width="1" height="1" fill="#707070"/><rect x="412" y="259.00" width="1" height="1" fill="#707070"/><rect x="412" y="264.19" width="1" height="1" fill="#707070"/><rect x="412" y="269.38" width="1" height="1" fill="#707070"/><rect x="412" y="274.56" width="1" height="1" fill="#707070"/><rect x="412" y="279.75" width="1" height="1" fill="#707070"/><rect x="412" y="284.94" width="1" height="1" fill="#707070"/><rect x="412" y="290.12" width="1" height="1" fill="#707070"/><rect x="412" y="295.31" width="1" height="1" fill="#707070"/><rect x="412" y="305.69" width="1" height="1" fill="#707070"/><rect x="412" y="310.88" width="1" height="1" fill="#707070"/><rect x="412" y="316.06" width="1" height="1" fill="#707070"/><rect x="412" y="321.25" width="1" height="1" fill="#707070"/><rect x="412" y="326.44" width="1" height="1" fill="#707070"/><rect x="412" y="331.62" width="1" height="1" fill="#707070"/><rect x="412" y="336.81" width="1" height="1" fill="#707070"/><rect x="412" y="342.00" width="1" height="1" fill="#707070"/><rect x="412" y="347.19" width="1" height="1" fill="#707070"/><rect x="412" y="357.56" width="1" height="1" fill="#707070"/><rect x="412" y="362.75" width="1" height="1" fill="#707070"/><rect x="412" y="367.94" width="1" height="1" fill="#707070"/><rect x="412" y="373.12" width="1" height="1" fill="#707070"/><rect x="412" y="378.31" width="1" height="1" fill="#707070"/><rect x="412" y="383.50" width="1" height="1" fill="#707070"/><rect x="412" y="388.69" width="1" height="1" fill="#707070"/><rect x="412" y="393.88" width="1" height="1" fill="#707070"/><rect x="412" y="399.06" width="1" height="1" fill="#707070"/><rect x="412" y="409.44" width="1" height="1" fill="#707070"/><rect x="412" y="414.62" width="1" height="1" fill="#707070"/><rect x="412" y="419.81" width="1" height="1" fill="#707070"/><rect x="412" y="425.00" width="1" height="1" fill="#707070"/><rect x="412" y="430.19" width="1" height="1" fill="#707070"/><rect x="412" y="435.38" width="1" height="1" fill="#707070"/><rect x="412" y="440.56" width="1" height="1" fill="#707070"/><rect x="412" y="445.75" width="1" height="1" fill="#707070"/><rect x="412" y="450.94" width="1" height="1" fill="#707070"/><rect x="412" y="461.31" width="1" height="1" fill="#707070"/><rect x="412" y="466.50" width="1" height="1" fill="#707070"/><rect x="412" y="471.69" width="1" height="1" fill="#707070"/><rect x="412" y="476.88" width="1" height="1" fill="#707070"/><rect x="412" y="482.06" width="1" height="1" fill="#707070"/><rect x="412" y="487.25" width="1" height="1" fill="#707070"/><rect x="412" y="492.44" width="1" height="1" fill="#707070"/><rect x="412" y="497.62" width="1" height="1" fill="#707070"/><rect x="412" y="502.81" width="1" height="1" fill="#707070"/><rect x="612" y="98.19" width="1" height="1" fill="#707070"/><rect x="612" y="103.38" width="1" height="1" fill="#707070"/><rect x="612" y="108.56" width="1" height="1" fill="#707070"/><rect x="612" y="113.75" width="1" height="1" fill="#707070"/><rect x="612" y="118.94" width="1" height="1" fill="#707070"/><rect x="612" y="124.12" width="1" height="1" fill="#707070"/><rect x="612" y="129.31" width="1" height="1" fill="#707070"/><rect x="612" y="134.50" width="1" height="1" fill="#707070"/><rect x="612" y="139.69" width="1" height="1" fill="#707070"/><rect x="612" y="150.06" width="1" height="1" fill="#707070"/><rect x="612" y="155.25" width="1" height="1" fill="#707070"/><rect x="612" y="160.44" width="1" height="1" fill="#707070"/><rect x="612" y="165.62" width="1" height="1" fill="#707070"/><rect x="612" y="170.81" width="1" height="1" fill="#707070"/><rect x="612" y="176.00" width="1" height="1" fill="#707070"/><rect x="612" y="181.19" width="1" height="1" fill="#707070"/><rect x="612" y="186.38" width="1" height="1" fill="#707070"/><rect x="612" y="191.56" width="1" height="1" fill="#707070"/><rect x="612" y="201.94" width="1" height="1" fill="#707070"/><rect x="612" y="207.12" width="1" height="1" fill="#707070"/><rect x="612" y="212.31" width="1" height="1" fill="#707070"/><rect x="612" y="217.50" width="1" height="1" fill="#707070"/><rect x="612" y="222.69" width="1" height="1" fill="#707070"/><rect x="612" y="227.88" width="1" height="1" fill="#707070"/><rect x="612" y="233.06" width="1" height="1" fill="#707070"/><rect x="612" y="238.25" width="1" height="1" fill="#707070"/><rect x="612" y="243.44" width="1" height="1" fill="#707070"/><rect x="612" y="253.81" width="1" height="1" fill="#707070"/><rect x="612" y="259.00" width="1" height="1" fill="#707070"/><rect x="612" y="264.19" width="1" height="1" fill="#707070"/><rect x="612" y="269.38" width="1" height="1" fill="#707070"/><rect x="612" y="274.56" width="1" height="1" fill="#707070"/><rect x="612" y="279.75" width="1" height="1" fill="#707070"/><rect x="612" y="284.94" width="1" height="1" fill="#707070"/><rect x="612" y="290.12" width="1" height="1" fill="#707070"/><rect x="612" y="295.31" width="1" height="1" fill="#707070"/><rect x="612" y="305.69" width="1" height="1" fill="#707070"/><rect x="612" y="310.88" width="1" height="1" fill="#707070"/><rect x="612" y="316.06" width="1" height="1" fill="#707070"/><rect x="612" y="321.25" width="1" height="1" fill="#707070"/><rect x="612" y="326.44" width="1" height="1" fill="#707070"/><rect x="612" y="331.62" width="1" height="1" fill="#707070"/><rect x="612" y="336.81" width="1" height="1" fill="#707070"/><rect x="612" y="342.00" width="1" height="1" fill="#707070"/><rect x="612" y="347.19" width="1" height="1" fill="#707070"/><rect x="612" y="357.56" width="1" height="1" fill="#707070"/><rect x="612" y="362.75" width="1" height="1" fill="#707070"/><rect x="612" y="367.94" width="1" height="1" fill="#707070"/><rect x="612" y="373.12" width="1" height="1" fill="#707070"/><rect x="612" y="378.31" width="1" height="1" fill="#707070"/><rect x="612" y="383.50" width="1" height="1" fill="#707070"/><rect x="612" y="388.69" width="1" height="1" fill="#707070"/><rect x="612" y="393.88" width="1" height="1" fill="#707070"/><rect x="612" y="399.06" width="1" height="1" fill="#707070"/><rect x="612" y="409.44" width="1" height="1" fill="#707070"/><rect x="612" y="414.62" width="1" height="1" fill="#707070"/><rect x="612" y="419.81" width="1" height="1" fill="#707070"/><rect x="612" y="425.00" width="1" height="1" fill="#707070"/><rect x="612" y="430.19" width="1" height="1" fill="#707070"/><rect x="612" y="435.38" width="1" height="1" fill="#707070"/><rect x="612" y="440.56" width="1" height="1" fill="#707070"/><rect x="612" y="445.75" width="1" height="1" fill="#707070"/><rect x="612" y="450.94" width="1" height="1" fill="#707070"/><rect x="612" y="461.31" width="1" height="1" fill="#707070"/><rect x="612" y="466.50" width="1" height="1" fill="#707070"/><rect x="612" y="471.69" width="1" height="1" fill="#707070"/><rect x="612" y="476.88" width="1" height="1" fill="#707070"/><rect x="612" y="482.06" width="1" height="1" fill="#707070"/><rect x="612" y="487.25" width="1" height="1" fill="#707070"/><rect x="612" y="492.44" width="1" height="1" fill="#707070"/><rect x="612" y="497.62" width="1" height="1" fill="#707070"/><rect x="612" y="502.81" width="1" height="1" fill="#707070"/><rect x="712" y="98.19" width="1" height="1" fill="#707070"/><rect x="712" y="103.38" width="1" height="1" fill="#707070"/><rect x="712" y="108.56" width="1" height="1" fill="#707070"/><rect x="712" y="113.75" width="1" height="1" fill="#707070"/><rect x="712" y="118.94" width="1" height="1" fill="#707070"/><rect x="712" y="124.12" width="1" height="1" fill="#707070"/><rect x="712" y="129.31" width="1" height="1" fill="#707070"/><rect x="712" y="134.50" width="1" height="1" fill="#707070"/><rect x="712" y="139.69" width="1" height="1" fill="#707070"/><rect x="712" y="150.06" width="1" height="1" fill="#707070"/><rect x="712" y="155.25" width="1" height="1" fill="#707070"/><rect x="712" y="160.44" width="1" height="1" fill="#707070"/><rect x="712" y="165.62" width="1" height="1" fill="#707070"/><rect x="712" y="170.81" width="1" height="1" fill="#707070"/><rect x="712" y="176.00" width="1" height="1" fill="#707070"/><rect x="712" y="181.19" width="1" height="1" fill="#707070"/><rect x="712" y="186.38" width="1" height="1" fill="#707070"/><rect x="712" y="191.56" width="1" height="1" fill="#707070"/><rect x="712" y="201.94" width="1" height="1" fill="#707070"/><rect x="712" y="207.12" width="1" height="1" fill="#707070"/><rect x="712" y="212.31" width="1" height="1" fill="#707070"/><rect x="712" y="217.50" width="1" height="1" fill="#707070"/><rect x="712" y="222.69" width="1" height="1" fill="#707070"/><rect x="712" y="227.88" width="1" height="1" fill="#707070"/><rect x="712" y="233.06" width="1" height="1" fill="#707070"/><rect x="712" y="238.25" width="1" height="1" fill="#707070"/><rect x="712" y="243.44" width="1" height="1" fill="#707070"/><rect x="712" y="253.81" width="1" height="1" fill="#707070"/><rect x="712" y="259.00" width="1" height="1" fill="#707070"/><rect x="712" y="264.19" width="1" height="1" fill="#707070"/><rect x="712" y="269.38" width="1" height="1" fill="#707070"/><rect x="712" y="274.56" width="1" height="1" fill="#707070"/><rect x="712" y="279.75" width="1" height="1" fill="#707070"/><rect x="712" y="284.94" width="1" height="1" fill="#707070"/><rect x="712" y="290.12" width="1" height="1" fill="#707070"/><rect x="712" y="295.31" width="1" height="1" fill="#707070"/><rect x="712" y="305.69" width="1" height="1" fill="#707070"/><rect x="712" y="310.88" width="1" height="1" fill="#707070"/><rect x="712" y="316.06" width="1" height="1" fill="#707070"/><rect x="712" y="321.25" width="1" height="1" fill="#707070"/><rect x="712" y="326.44" width="1" height="1" fill="#707070"/><rect x="712" y="331.62" width="1" height="1" fill="#707070"/><rect x="712" y="336.81" width="1" height="1" fill="#707070"/><rect x="712" y="342.00" width="1" height="1" fill="#707070"/><rect x="712" y="347.19" width="1" height="1" fill="#707070"/><rect x="712" y="357.56" width="1" height="1" fill="#707070"/><rect x="712" y="362.75" width="1" height="1" fill="#707070"/><rect x="712" y="367.94" width="1" height="1" fill="#707070"/><rect x="712" y="373.12" width="1" height="1" fill="#707070"/><rect x="712" y="378.31" width="1" height="1" fill="#707070"/><rect x="712" y="383.50" width="1" height="1" fill="#707070"/><rect x="712" y="388.69" width="1" height="1" fill="#707070"/><rect x="712" y="393.88" width="1" height="1" fill="#707070"/><rect x="712" y="399.06" width="1" height="1" fill="#707070"/><rect x="712" y="409.44" width="1" height="1" fill="#707070"/><rect x="712" y="414.62" width="1" height="1" fill="#707070"/><rect x="712" y="419.81" width="1" height="1" fill="#707070"/><rect x="712" y="425.00" width="1" height="1" fill="#707070"/><rect x="712" y="430.19" width="1" height="1" fill="#707070"/><rect x="712" y="435.38" width="1" height="1" fill="#707070"/><rect x="712" y="440.56" width="1" height="1" fill="#707070"/><rect x="712" y="445.75" width="1" height="1" fill="#707070"/><rect x="712" y="450.94" width="1" height="1" fill="#707070"/><rect x="712" y="461.31" width="1" height="1" fill="#707070"/><rect x="712" y="466.50" width="1" height="1" fill="#707070"/><rect x="712" y="471.69" width="1" height="1" fill="#707070"/><rect x="712" y="476.88" width="1" height="1" fill="#707070"/><rect x="712" y="482.06" width="1" height="1" fill="#707070"/><rect x="712" y="487.25" width="1" height="1" fill="#707070"/><rect x="712" y="492.44" width="1" height="1" fill="#707070"/><rect x="712" y="497.62" width="1" height="1" fill="#707070"/><rect x="712" y="502.81" width="1" height="1" fill="#707070"/><rect x="812" y="98.19" width="1" height="1" fill="#707070"/><rect x="812" y="103.38" width="1" height="1" fill="#707070"/><rect x="812" y="108.56" width="1" height="1" fill="#707070"/><rect x="812" y="113.75" width="1" height="1" fill="#707070"/><rect x="812" y="118.94" width="1" height="1" fill="#707070"/><rect x="812" y="124.12" width="1" height="1" fill="#707070"/><rect x="812" y="129.31" width="1" height="1" fill="#707070"/><rect x="812" y="134.50" width="1" height="1" fill="#707070"/><rect x="812" y="139.69" width="1" height="1" fill="#707070"/><rect x="812" y="150.06" width="1" height="1" fill="#707070"/><rect x="812" y="155.25" width="1" height="1" fill="#707070"/><rect x="812" y="160.44" width="1" height="1" fill="#707070"/><rect x="812" y="165.62" width="1" height="1" fill="#707070"/><rect x="812" y="170.81" width="1" height="1" fill="#707070"/><rect x="812" y="176.00" width="1" height="1" fill="#707070"/><rect x="812" y="181.19" width="1" height="1" fill="#707070"/><rect x="812" y="186.38" width="1" height="1" fill="#707070"/><rect x="812" y="191.56" width="1" height="1" fill="#707070"/><rect x="812" y="201.94" width="1" height="1" fill="#707070"/><rect x="812" y="207.12" width="1" height="1" fill="#707070"/><rect x="812" y="212.31" width="1" height="1" fill="#707070"/><rect x="812" y="217.50" width="1" height="1" fill="#707070"/><rect x="812" y="222.69" width="1" height="1" fill="#707070"/><rect x="812" y="227.88" width="1" height="1" fill="#707070"/><rect x="812" y="233.06" width="1" height="1" fill="#707070"/><rect x="812" y="238.25" width="1" height="1" fill="#707070"/><rect x="812" y="243.44" width="1" height="1" fill="#707070"/><rect x="812" y="253.81" width="1" height="1" fill="#707070"/><rect x="812" y="259.00" width="1" height="1" fill="#707070"/><rect x="812" y="264.19" width="1" height="1" fill="#707070"/><rect x="812" y="269.38" width="1" height="1" fill="#707070"/><rect x="812" y="274.56" width="1" height="1" fill="#707070"/><rect x="812" y="279.75" width="1" height="1" fill="#707070"/><rect x="812" y="284.94" width="1" height="1" fill="#707070"/><rect x="812" y="290.12" width="1" height="1" fill="#707070"/><rect x="812" y="295.31" width="1" height="1" fill="#707070"/><rect x="812" y="305.69" width="1" height="1" fill="#707070"/><rect x="812" y="310.88" width="1" height="1" fill="#707070"/><rect x="812" y="316.06" width="1" height="1" fill="#707070"/><rect x="812" y="321.25" width="1" height="1" fill="#707070"/><rect x="812" y="326.44" width="1" height="1" fill="#707070"/><rect x="812" y="331.62" width="1" height="1" fill="#707070"/><rect x="812" y="336.81" width="1" height="1" fill="#707070"/><rect x="812" y="342.00" width="1" height="1" fill="#707070"/><rect x="812" y="347.19" width="1" height="1" fill="#707070"/><rect x="812" y="357.56" width="1" height="1" fill="#707070"/><rect x="812" y="362.75" width="1" height="1" fill="#707070"/><rect x="812" y="367.94" width="1" height="1" fill="#707070"/><rect x="812" y="373.12" width="1" height="1" fill="#707070"/><rect x="812" y="378.31" width="1" height="1" fill="#707070"/><rect x="812" y="383.50" width="1" height="1" fill="#707070"/><rect x="812" y="388.69" width="1" height="1" fill="#707070"/><rect x="812" y="393.88" width="1" height="1" fill="#707070"/><rect x="812" y="399.06" width="1" height="1" fill="#707070"/><rect x="812" y="409.44" width="1" height="1" fill="#707070"/><rect x="812" y="414.62" width="1" height="1" fill="#707070"/><rect x="812" y="419.81" width="1" height="1" fill="#707070"/><rect x="812" y="425.00" width="1" height="1" fill="#707070"/><rect x="812" y="430.19" width="1" height="1" fill="#707070"/><rect x="812" y="435.38" width="1" height="1" fill="#707070"/><rect x="812" y="440.56" width="1" height="1" fill="#707070"/><rect x="812" y="445.75" width="1" height="1" fill="#707070"/><rect x="812" y="450.94" width="1" height="1" fill="#707070"/><rect x="812" y="461.31" width="1" height="1" fill="#707070"/><rect x="812" y="466.50" width="1" height="1" fill="#707070"/><rect x="812" y="471.69" width="1" height="1" fill="#707070"/><rect x="812" y="476.88" width="1" height="1" fill="#707070"/><rect x="812" y="482.06" width="1" height="1" fill="#707070"/><rect x="812" y="487.25" width="1" height="1" fill="#707070"/><rect x="812" y="492.44" width="1" height="1" fill="#707070"/><rect x="812" y="497.62" width="1" height="1" fill="#707070"/><rect x="812" y="502.81" width="1" height="1" fill="#707070"/><rect x="912" y="98.19" width="1" height="1" fill="#707070"/><rect x="912" y="103.38" width="1" height="1" fill="#707070"/><rect x="912" y="108.56" width="1" height="1" fill="#707070"/><rect x="912" y="113.75" width="1" height="1" fill="#707070"/><rect x="912" y="118.94" width="1" height="1" fill="#707070"/><rect x="912" y="124.12" width="1" height="1" fill="#707070"/><rect x="912" y="129.31" width="1" height="1" fill="#707070"/><rect x="912" y="134.50" width="1" height="1" fill="#707070"/><rect x="912" y="139.69" width="1" height="1" fill="#707070"/><rect x="912" y="150.06" width="1" height="1" fill="#707070"/><rect x="912" y="155.25" width="1" height="1" fill="#707070"/><rect x="912" y="160.44" width="1" height="1" fill="#707070"/><rect x="912" y="165.62" width="1" height="1" fill="#707070"/><rect x="912" y="170.81" width="1" height="1" fill="#707070"/><rect x="912" y="176.00" width="1" height="1" fill="#707070"/><rect x="912" y="181.19" width="1" height="1" fill="#707070"/><rect x="912" y="186.38" width="1" height="1" fill="#707070"/><rect x="912" y="191.56" width="1" height="1" fill="#707070"/><rect x="912" y="201.94" width="1" height="1" fill="#707070"/><rect x="912" y="207.12" width="1" height="1" fill="#707070"/><rect x="912" y="212.31" width="1" height="1" fill="#707070"/><rect x="912" y="217.50" width="1" height="1" fill="#707070"/><rect x="912" y="222.69" width="1" height="1" fill="#707070"/><rect x="912" y="227.88" width="1" height="1" fill="#707070"/><rect x="912" y="233.06" width="1" height="1" fill="#707070"/><rect x="912" y="238.25" width="1" height="1" fill="#707070"/><rect x="912" y="243.44" width="1" height="1" fill="#707070"/><rect x="912" y="253.81" width="1" height="1" fill="#707070"/><rect x="912" y="259.00" width="1" height="1" fill="#707070"/><rect x="912" y="264.19" width="1" height="1" fill="#707070"/><rect x="912" y="269.38" width="1" height="1" fill="#707070"/><rect x="912" y="274.56" width="1" height="1" fill="#707070"/><rect x="912" y="279.75" width="1" height="1" fill="#707070"/><rect x="912" y="284.94" width="1" height="1" fill="#707070"/><rect x="912" y="290.12" width="1" height="1" fill="#707070"/><rect x="912" y="295.31" width="1" height="1" fill="#707070"/><rect x="912" y="305.69" width="1" height="1" fill="#707070"/><rect x="912" y="310.88" width="1" height="1" fill="#707070"/><rect x="912" y="316.06" width="1" height="1" fill="#707070"/><rect x="912" y="321.25" width="1" height="1" fill="#707070"/><rect x="912" y="326.44" width="1" height="1" fill="#707070"/><rect x="912" y="331.62" width="1" height="1" fill="#707070"/><rect x="912" y="336.81" width="1" height="1" fill="#707070"/><rect x="912" y="342.00" width="1" height="1" fill="#707070"/><rect x="912" y="347.19" width="1" height="1" fill="#707070"/><rect x="912" y="357.56" width="1" height="1" fill="#707070"/><rect x="912" y="362.75" width="1" height="1" fill="#707070"/><rect x="912" y="367.94" width="1" height="1" fill="#707070"/><rect x="912" y="373.12" width="1" height="1" fill="#707070"/><rect x="912" y="378.31" width="1" height="1" fill="#707070"/><rect x="912" y="383.50" width="1" height="1" fill="#707070"/><rect x="912" y="388.69" width="1" height="1" fill="#707070"/><rect x="912" y="393.88" width="1" height="1" fill="#707070"/><rect x="912" y="399.06" width="1" height="1" fill="#707070"/><rect x="912" y="409.44" width="1" height="1" fill="#707070"/><rect x="912" y="414.62" width="1" height="1" fill="#707070"/><rect x="912" y="419.81" width="1" height="1" fill="#707070"/><rect x="912" y="425.00" width="1" height="1" fill="#707070"/><rect x="912" y="430.19" width="1" height="1" fill="#707070"/><rect x="912" y="435.38" width="1" height="1" fill="#707070"/><rect x="912" y="440.56" width="1" height="1" fill="#707070"/><rect x="912" y="445.75" width="1" height="1" fill="#707070"/><rect x="912" y="450.94" width="1" height="1" fill="#707070"/><rect x="912" y="461.31" width="1" height="1" fill="#707070"/><rect x="912" y="466.50" width="1" height="1" fill="#707070"/><rect x="912" y="471.69" width="1" height="1" fill="#707070"/><rect x="912" y="476.88" width="1" height="1" fill="#707070"/><rect x="912" y="482.06" width="1" height="1" fill="#707070"/><rect x="912" y="487.25" width="1" height="1" fill="#707070"/><rect x="912" y="492.44" width="1" height="1" fill="#707070"/><rect x="912" y="497.62" width="1" height="1" fill="#707070"/><rect x="912" y="502.81" width="1" height="1" fill="#707070"/><rect x="12" y="300.00" width="999" height="1" fill="#9c9c9c"/><rect x="512" y="93" width="1" height="414" fill="#9c9c9c"/><rect x="32" y="298.00" width="1" height="5" fill="#9c9c9c"/><rect x="52" y="298.00" width="1" height="5" fill="#9c9c9c"/><rect x="72" y="298.00" width="1" height="5" fill="#9c9c9c"/><rect x="92" y="298.00" width="1" height="5" fill="#9c9c9c"/><rect x="112" y="295.00" width="1" height="11" fill="#9c9c9c"/><rect x="132" y="298.00" width="1" height="5" fill="#9c9c9c"/><rect x="152" y="298.00" width="1" height="5" fill="#9c9c9c"/><rect x="172" y="298.00" width="1" height="5" fill="#9c9c9c"/><rect x="192" y="298.00" width="1" height="5" fill="#9c9c9c"/><rect x="212" y="295.00" width="1" height="11" fill="#9c9c9c"/><rect x="232" y="298.00" width="1" height="5" fill="#9c9c9c"/><rect x="252" y="298.00" width="1" height="5" fill="#9c9c9c"/><rect x="272" y="298.00" width="1" height="5" fill="#9c9c9c"/><rect x="292" y="298.00" width="1" height="5" fill="#9c9c9c"/><rect x="312" y="295.00" width="1" height="11" fill="#9c9c9c"/><rect x="332" y="298.00" width="1" height="5" fill="#9c9c9c"/><rect x="352" y="298.00" width="1" height="5" fill="#9c9c9c"/><rect x="372" y="298.00" width="1" height="5" fill="#9c9c9c"/><rect x="392" y="298.00" width="1" height="5" fill="#9c9c9c"/><rect x="412" y="295.00" width="1" height="11" fill="#9c9c9c"/><rect x="432" y="298.00" width="1" height="5" fill="#9c9c9c"/><rect x="452" y="298.00" width="1" height="5" fill="#9c9c9c"/><rect x="472" y="298.00" width="1" height="5" fill="#9c9c9c"/><rect x="492" y="298.00" width="1" height="5" fill="#9c9c9c"/><rect x="512" y="295.00" width="1" height="11" fill="#9c9c9c"/><rect x="532" y="298.00" width="1" height="5" fill="#9c9c9c"/><rect x="552" y="298.00" width="1" height="5" fill="#9c9c9c"/><rect x="572" y="298.00" width="1" height="5" fill="#9c9c9c"/><rect x="592" y="298.00" width="1" height="5" fill="#9c9c9c"/><rect x="612" y="295.00" width="1" height="11" fill="#9c9c9c"/><rect x="632" y="298.00" width="1" height="5" fill="#9c9c9c"/><rect x="652" y="298.00" width="1" height="5" fill="#9c9c9c"/><rect x="672" y="298.00" width="1" height="5" fill="#9c9c9c"/><rect x="692" y="298.00" width="1" height="5" fill="#9c9c9c"/><rect x="712" y="295.00" width="1" height="11" fill="#9c9c9c"/><rect x="732" y="298.00" width="1" height="5" fill="#9c9c9c"/><rect x="752" y="298.00" width="1" height="5" fill="#9c9c9c"/><rect x="772" y="298.00" width="1" height="5" fill="#9c9c9c"/><rect x="792" y="298.00" width="1" height="5" fill="#9c9c9c"/><rect x="812" y="295.00" width="1" height="11" fill="#9c9c9c"/><rect x="832" y="298.00" width="1" height="5" fill="#9c9c9c"/><rect x="852" y="298.00" width="1" height="5" fill="#9c9c9c"/><rect x="872" y="298.00" width="1" height="5" fill="#9c9c9c"/><rect x="892" y="298.00" width="1" height="5" fill="#9c9c9c"/><rect x="912" y="295.00" width="1" height="11" fill="#9c9c9c"/><rect x="932" y="298.00" width="1" height="5" fill="#9c9c9c"/><rect x="952" y="298.00" width="1" height="5" fill="#9c9c9c"/><rect x="972" y="298.00" width="1" height="5" fill="#9c9c9c"/><rect x="992" y="298.00" width="1" height="5" fill="#9c9c9c"/><rect x="510.0" y="103.38" width="5" height="1" fill="#9c9c9c"/><rect x="510.0" y="113.75" width="5" height="1" fill="#9c9c9c"/><rect x="510.0" y="124.12" width="5" height="1" fill="#9c9c9c"/><rect x="510.0" y="134.50" width="5" height="1" fill="#9c9c9c"/><rect x="507.5" y="144.88" width="10" height="1" fill="#9c9c9c"/><rect x="510.0" y="155.25" width="5" height="1" fill="#9c9c9c"/><rect x="510.0" y="165.62" width="5" height="1" fill="#9c9c9c"/><rect x="510.0" y="176.00" width="5" height="1" fill="#9c9c9c"/><rect x="510.0" y="186.38" width="5" height="1" fill="#9c9c9c"/><rect x="507.5" y="196.75" width="10" height="1" fill="#9c9c9c"/><rect x="510.0" y="207.12" width="5" height="1" fill="#9c9c9c"/><rect x="510.0" y="217.50" width="5" height="1" fill="#9c9c9c"/><rect x="510.0" y="227.88" width="5" height="1" fill="#9c9c9c"/><rect x="510.0" y="238.25" width="5" height="1" fill="#9c9c9c"/><rect x="507.5" y="248.62" width="10" height="1" fill="#9c9c9c"/><rect x="510.0" y="259.00" width="5" height="1" fill="#9c9c9c"/><rect x="510.0" y="269.38" width="5" height="1" fill="#9c9c9c"/><rect x="510.0" y="279.75" width="5" height="1" fill="#9c9c9c"/><rect x="510.0" y="290.12" width="5" height="1" fill="#9c9c9c"/><rect x="507.5" y="300.50" width="10" height="1" fill="#9c9c9c"/><rect x="510.0" y="310.88" width="5" height="1" fill="#9c9c9c"/><rect x="510.0" y="321.25" width="5" height="1" fill="#9c9c9c"/><rect x="510.0" y="331.62" width="5" height="1" fill="#9c9c9c"/><rect x="510.0" y="342.00" width="5" height="1" fill="#9c9c9c"/><rect x="507.5" y="352.38" width="10" height="1" fill="#9c9c9c"/><rect x="510.0" y="362.75" width="5" height="1" fill="#9c9c9c"/><rect x="510.0" y="373.12" width="5" height="1" fill="#9c9c9c"/><rect x="510.0" y="383.50" width="5" height="1" fill="#9c9c9c"/><rect x="510.0" y="393.88" width="5" height="1" fill="#9c9c9c"/><rect x="507.5" y="404.25" width="10" height="1" fill="#9c9c9c"/><rect x="510.0" y="414.62" width="5" height="1" fill="#9c9c9c"/><rect x="510.0" y="425.00" width="5" height="1" fill="#9c9c9c"/><rect x="510.0" y="435.38" width="5" height="1" fill="#9c9c9c"/><rect x="510.0" y="445.75" width="5" height="1" fill="#9c9c9c"/><rect x="507.5" y="456.12" width="10" height="1" fill="#9c9c9c"/><rect x="510.0" y="466.50" width="5" height="1" fill="#9c9c9c"/><rect x="510.0" y="476.88" width="5" height="1" fill="#9c9c9c"/><rect x="510.0" y="487.25" width="5" height="1" fill="#9c9c9c"/><rect x="510.0" y="497.62" width="5" height="1" fill="#9c9c9c"/></g>
<text x="982.39" y="152.00" font-size="17.01" fill="#1a8cff" font-weight="normal" textLength="19.68" lengthAdjust="spacingAndGlyphs" style='font-family:"Liberation Sans", sans-serif'  stroke="#1a8cff" stroke-width="0.25">3V</text>
<text x="982.18" y="204.00" font-size="17.01" fill="#1a8cff" font-weight="normal" textLength="19.89" lengthAdjust="spacingAndGlyphs" style='font-family:"Liberation Sans", sans-serif'  stroke="#1a8cff" stroke-width="0.25">2V</text>
<text x="982.48" y="255.80" font-size="16.86" fill="#1a8cff" font-weight="normal" textLength="19.59" lengthAdjust="spacingAndGlyphs" style='font-family:"Liberation Sans", sans-serif'  stroke="#1a8cff" stroke-width="0.25">1V</text>
<text x="978.32" y="360.00" font-size="17.01" fill="#1a8cff" font-weight="normal" textLength="23.75" lengthAdjust="spacingAndGlyphs" style='font-family:"Liberation Sans", sans-serif'  stroke="#1a8cff" stroke-width="0.25">-1V</text>
<text x="978.32" y="412.00" font-size="17.15" fill="#1a8cff" font-weight="normal" textLength="23.75" lengthAdjust="spacingAndGlyphs" style='font-family:"Liberation Sans", sans-serif'  stroke="#1a8cff" stroke-width="0.25">-2V</text>
<text x="978.32" y="464.00" font-size="17.15" fill="#1a8cff" font-weight="normal" textLength="23.75" lengthAdjust="spacingAndGlyphs" style='font-family:"Liberation Sans", sans-serif'  stroke="#1a8cff" stroke-width="0.25">-3V</text>
<text x="75.99" y="497.90" font-size="16.57" fill="#ff8c00" font-weight="normal" textLength="71.59" lengthAdjust="spacingAndGlyphs" style='font-family:"Liberation Sans", sans-serif'  stroke="#ff8c00" stroke-width="0.25">-142.58µs</text>
<text x="180.89" y="497.90" font-size="16.57" fill="#ff8c00" font-weight="normal" textLength="62.79" lengthAdjust="spacingAndGlyphs" style='font-family:"Liberation Sans", sans-serif'  stroke="#ff8c00" stroke-width="0.25">-92.58µs</text>
<text x="280.89" y="497.90" font-size="16.57" fill="#ff8c00" font-weight="normal" textLength="62.49" lengthAdjust="spacingAndGlyphs" style='font-family:"Liberation Sans", sans-serif'  stroke="#ff8c00" stroke-width="0.25">-42.58µs</text>
<text x="387.26" y="497.90" font-size="16.57" fill="#ff8c00" font-weight="normal" textLength="49.33" lengthAdjust="spacingAndGlyphs" style='font-family:"Liberation Sans", sans-serif'  stroke="#ff8c00" stroke-width="0.25">7.42µs</text>
<text x="484.01" y="498.20" font-size="17.44" fill="#ff8c00" font-weight="bold" textLength="57.84" lengthAdjust="spacingAndGlyphs" style='font-family:"Liberation Sans", sans-serif' >57.42µs</text>
<text x="578.46" y="497.90" font-size="16.57" fill="#ff8c00" font-weight="normal" textLength="67.33" lengthAdjust="spacingAndGlyphs" style='font-family:"Liberation Sans", sans-serif'  stroke="#ff8c00" stroke-width="0.25">107.42µs</text>
<text x="678.26" y="497.90" font-size="16.57" fill="#ff8c00" font-weight="normal" textLength="67.33" lengthAdjust="spacingAndGlyphs" style='font-family:"Liberation Sans", sans-serif'  stroke="#ff8c00" stroke-width="0.25">157.42µs</text>
<text x="778.99" y="497.90" font-size="16.57" fill="#ff8c00" font-weight="normal" textLength="67.00" lengthAdjust="spacingAndGlyphs" style='font-family:"Liberation Sans", sans-serif'  stroke="#ff8c00" stroke-width="0.25">207.42µs</text>
<text x="878.58" y="497.90" font-size="16.57" fill="#ff8c00" font-weight="normal" textLength="67.41" lengthAdjust="spacingAndGlyphs" style='font-family:"Liberation Sans", sans-serif'  stroke="#ff8c00" stroke-width="0.25">257.42µs</text>
<polygon points="501,94.3 524,94.3 512.5,105.5" fill="#000" stroke="#ff8a00" stroke-width="1.4"/>
<rect x="507" y="92.6" width="11" height="1.2" fill="#e0e0e0"/>
<rect x="507" y="506.4" width="11" height="1.2" fill="#d8d8d8"/>
<polygon points="387,107 407,107 407,125 397,134.5 387,125" fill="#ff8800"/>
<text x="391.62" y="122.00" font-size="16.72" fill="#000" font-weight="normal" textLength="10.26" lengthAdjust="spacingAndGlyphs" style='font-family:"Liberation Sans", sans-serif'  stroke="#000" stroke-width="0.25">T</text>
<polygon points="12,288.6 37,288.6 48.2,300 37,311.8 12,311.8" fill="#000"/>
<polygon points="12.7,291 36,291 45.3,300 36,309 12.7,309" fill="#0a84ff"/>
<text x="19.90" y="306.00" font-size="16.42" fill="#000" font-weight="normal" textLength="9.60" lengthAdjust="spacingAndGlyphs" style='font-family:"Liberation Sans", sans-serif'  stroke="#000" stroke-width="0.25">4</text>
<polygon points="977,300 987.5,290 1012,290 1012,310 987.5,310" fill="#ff8800"/>
<text x="993.64" y="306.00" font-size="16.72" fill="#000" font-weight="normal" textLength="9.72" lengthAdjust="spacingAndGlyphs" style='font-family:"Liberation Sans", sans-serif'  stroke="#000" stroke-width="0.25">T</text>
<rect x="965.3" y="471.3" width="25.200000000000045" height="3.4" fill="#fff"/>
<rect x="965.3" y="481.3" width="18.700000000000045" height="3.4" fill="#fff"/>
<rect x="965.3" y="491.1" width="25.200000000000045" height="3.4" fill="#fff"/>
<polyline points="999.5,474.5 990.5,483 999.5,491.5" fill="none" stroke="#fff" stroke-width="3"/>
<polyline points="232.5,171.6 233.5,172.1 234.5,172.8 235.5,172.8 236.5,172.4 237.5,171.8 238.5,172.1 239.5,172.6 240.5,172.3 241.3,298.8 242.0,298.6 243.0,298.0 244.0,298.1 245.0,298.8 246.0,299.1 247.0,298.9 248.0,298.8 249.0,298.7 250.0,299.2 251.0,299.0 252.0,298.6 253.0,298.5 254.0,299.1 255.0,299.6 256.0,299.1 257.0,298.5 258.0,298.2 259.0,298.4 260.0,298.8 261.0,298.6 262.0,298.4 262.5,298.8 263.1,174.3 264.1,172.2 265.1,172.0 266.1,171.6 267.1,171.9 268.1,172.7 269.1,172.8 270.1,172.1 271.1,171.8 272.1,172.0 273.1,172.8 274.1,173.0 275.1,172.6 276.1,172.6 277.1,172.5 278.1,172.6 279.1,172.3 280.1,171.5 281.1,171.7 282.1,172.2 283.1,172.7 284.1,172.4 285.1,171.8 286.1,171.9 287.1,172.3 288.1,172.6 289.1,172.4 290.1,172.4 291.1,172.8 292.1,173.2 293.1,172.8 294.1,171.9 295.1,171.8 296.1,172.1 297.1,172.7 298.1,172.5 299.1,172.0 300.1,171.9 301.1,172.1 302.1,172.2 303.1,172.1 304.1,171.9 305.1,172.6 306.1,173.1 307.1,172.9 308.1,172.2 309.1,172.0 310.1,172.1 311.1,172.6 312.1,172.5 313.1,172.2 314.1,171.9 315.1,172.2 316.1,172.3 317.1,171.9 318.1,171.6 319.1,172.2 320.1,172.8 321.1,173.0 322.1,172.5 323.1,172.2 324.1,172.4 325.1,172.6 326.1,172.5 327.1,172.1 328.1,172.1 329.1,172.5 330.1,172.6 331.1,171.9 332.1,171.2 333.1,171.6 334.1,172.3 335.1,172.8 336.1,172.6 337.1,172.2 338.1,172.3 339.1,172.7 340.1,172.6 341.1,172.1 342.1,172.3 343.1,172.8 344.1,173.1 345.1,172.5 346.1,171.6 347.1,171.4 348.1,171.9 349.1,172.4 350.1,172.1 351.1,171.9 352.1,172.2 353.1,172.6 354.1,172.5 355.1,172.0 356.1,171.9 357.1,172.5 358.1,173.0 359.1,172.9 360.1,172.0 361.1,171.9 362.1,172.0 363.1,172.1 364.1,172.0 365.1,171.8 366.1,172.1 367.1,172.5 368.1,172.7 369.1,172.2 370.1,171.8 371.1,172.2 372.1,172.8 373.1,173.0 374.1,172.5 374.3,172.3 375.1,298.8 375.8,298.7 376.8,299.3 377.8,299.1 378.8,298.7 379.8,298.9 380.8,299.1 381.8,299.2 382.8,298.7 383.8,298.1 384.8,298.3 385.8,298.7 386.8,299.0 387.8,298.7 388.8,298.6 389.8,298.8 390.8,299.1 391.8,298.9 392.8,298.6 393.8,298.9 394.8,299.5 395.8,299.6 396.5,298.8 397.1,174.3 398.1,172.6 399.1,172.3 400.1,172.0 401.1,172.3 402.1,172.9 403.1,173.0 404.1,172.3 405.1,171.8 406.1,172.0 407.1,172.2 408.1,172.3 409.1,172.0 410.1,172.1 411.1,172.4 412.1,172.6 413.1,172.2 414.1,171.7 415.1,172.0 416.1,172.9 417.1,173.3 418.1,172.8 419.1,172.2 420.1,172.2 421.1,172.5 422.1,172.1 423.1,171.8 424.1,171.9 425.1,172.4 426.1,172.8 427.1,172.3 428.1,171.6 429.1,171.8 430.1,172.3 431.1,173.0 432.1,172.9 433.1,172.4 434.1,172.5 435.1,172.9 436.1,172.6 437.1,171.8 438.1,171.6 439.1,172.1 440.1,172.8 441.1,172.6 442.1,171.7 443.1,171.7 444.1,172.2 445.1,172.5 446.1,172.4 447.1,172.3 448.1,172.5 449.1,172.9 450.1,173.0 451.1,172.3 452.1,171.8 453.1,172.2 454.1,172.6 455.1,172.8 456.1,172.2 457.1,171.7 458.1,171.9 459.1,172.1 460.1,172.0 461.1,171.9 462.1,172.1 463.1,172.9 464.1,173.0 465.1,172.7 466.1,171.9 467.1,172.1 468.1,172.6 469.1,172.9 470.1,172.3 471.1,172.2 472.1,172.2 473.1,172.3 474.1,172.0 475.1,171.4 476.1,171.7 477.1,172.4 478.1,172.8 479.1,172.8 480.1,172.0 481.1,172.1 482.1,172.6 483.1,172.8 484.1,172.4 485.1,172.3 486.1,172.5 487.1,172.8 488.1,172.2 489.1,171.6 490.1,171.3 491.1,171.9 492.1,172.7 493.1,172.6 494.1,172.2 495.1,172.2 496.1,172.6 497.1,172.6 498.1,172.4 499.1,172.2 500.1,172.6 501.1,173.1 502.1,172.8 503.1,172.0 504.1,171.5 505.1,171.9 506.1,172.4 507.1,172.5 508.1,172.2 508.3,172.3 509.1,298.8 509.8,299.4 510.8,298.9 511.8,298.8 512.8,299.1 513.8,298.9 514.8,298.6 515.8,298.3 516.8,298.7 517.8,299.2 518.8,299.1 519.8,298.3 520.8,298.1 521.8,298.4 522.8,298.8 523.8,299.2 524.8,299.0 525.8,298.8 526.8,299.4 527.8,299.3 528.8,298.8 529.8,298.6 530.5,298.8 531.1,174.3 532.1,171.6 533.1,172.1 534.1,172.8 535.1,173.0 536.1,172.7 537.1,172.2 538.1,172.5 539.1,172.6 540.1,172.0 541.1,171.7 542.1,172.0 543.1,172.5 544.1,172.5 545.1,172.2 546.1,171.6 547.1,171.9 548.1,172.2 549.1,172.6 550.1,172.4 551.1,172.5 552.1,172.7 553.1,172.8 554.1,172.5 555.1,172.0 556.1,172.0 557.1,172.4 558.1,172.7 559.1,172.5 560.1,171.8 561.1,171.7 562.1,171.9 563.1,172.1 564.1,172.2 565.1,172.1 566.1,172.5 567.1,173.2 568.1,172.9 569.1,172.2 570.1,171.8 571.1,172.5 572.1,172.7 573.1,172.8 574.1,172.1 575.1,171.9 576.1,172.1 577.1,172.3 578.1,171.7 579.1,171.5 580.1,172.2 581.1,172.8 582.1,172.8 583.1,172.2 584.1,171.8 585.1,172.2 586.1,172.7 587.1,172.7 588.1,172.4 589.1,172.2 590.1,172.5 591.1,172.3 592.1,171.8 593.1,171.3 594.1,171.7 595.1,172.4 596.1,172.9 597.1,172.4 598.1,171.9 599.1,172.2 600.1,172.8 601.1,172.5 602.1,172.5 603.1,172.4 604.1,172.8 605.1,173.0 606.1,172.3 607.1,171.6 608.1,171.6 609.1,172.3 610.1,172.5 611.1,172.4 612.1,172.0 613.1,172.2 614.1,172.5 615.1,172.4 616.1,172.0 617.1,172.1 618.1,172.7 619.1,173.3 620.1,172.8 621.1,171.9 622.1,171.6 623.1,172.2 624.1,172.5 625.1,172.2 626.1,171.8 627.1,172.0 628.1,172.4 629.1,172.4 630.1,171.8 631.1,171.8 632.1,172.3 633.1,173.3 634.1,173.3 635.1,172.5 636.1,172.0 637.1,172.4 638.1,172.4 639.1,172.2 640.1,171.7 641.1,172.0 642.0,172.3 642.8,298.8 643.5,298.5 644.5,298.8 645.5,298.8 646.5,298.4 647.5,298.5 648.5,298.7 649.5,298.7 650.5,298.5 651.5,298.4 652.5,299.0 653.5,299.5 654.5,299.6 655.5,299.0 656.5,298.6 657.5,298.8 658.5,298.9 659.5,298.8 660.5,298.6 661.5,298.4 662.5,298.8 663.1,174.3 664.1,171.5 665.1,171.6 666.1,172.2 667.1,172.8 668.1,172.6 669.1,172.0 670.1,172.2 671.1,172.6 672.1,172.7 673.1,172.4 674.1,172.3 675.1,172.7 676.1,173.2 677.1,172.7 678.1,171.9 679.1,171.4 680.1,171.8 681.1,172.3 682.1,172.2 683.1,171.9 684.1,172.2 685.1,172.5 686.1,172.6 687.1,172.2 688.1,172.0 689.1,172.5 690.1,173.0 691.1,173.2 692.1,172.4 693.1,171.9 694.1,172.0 695.1,172.3 696.1,172.0 697.1,171.9 698.1,171.9 699.1,172.3 700.1,172.5 701.1,172.1 702.1,171.6 703.1,172.2 704.1,173.0 705.1,173.1 706.1,172.7 707.1,172.3 708.1,172.4 709.1,172.6 710.1,172.3 711.1,171.9 712.1,171.8 713.1,172.3 714.1,172.6 715.1,172.2 716.1,171.5 717.1,171.7 718.1,172.2 719.1,172.7 720.1,172.6 721.1,172.5 722.1,172.7 723.1,172.9 724.1,172.5 725.1,171.9 726.1,171.8 727.1,172.4 728.1,172.7 729.1,172.5 730.1,171.6 731.1,171.7 732.1,172.1 733.1,172.2 734.1,172.3 735.1,172.3 736.1,172.7 737.1,173.0 738.1,172.8 739.1,172.1 740.1,172.0 741.1,172.2 742.1,172.9 743.1,172.6 744.1,172.1 745.1,171.9 746.1,171.9 747.1,172.2 748.1,171.9 749.1,171.9 750.1,172.3 751.1,172.8 752.1,173.1 753.1,172.4 754.1,171.8 755.1,172.1 756.1,172.8 757.1,172.8 758.1,172.4 759.1,172.1 760.1,172.3 761.1,172.3 762.1,172.0 763.1,171.3 764.1,171.8 765.1,172.6 766.1,172.7 767.1,172.6 768.1,172.1 769.1,172.2 770.1,172.5 771.1,172.7 772.1,172.4 773.1,172.5 774.1,172.7 774.5,172.3 775.3,298.8 776.0,298.7 777.0,298.9 778.0,298.7 779.0,298.1 780.0,298.6 781.0,299.1 782.0,299.4 783.0,299.2 784.0,298.7 785.0,298.8 786.0,299.2 787.0,299.0 788.0,298.6 789.0,298.5 790.0,299.0 791.0,299.3 792.0,298.8 793.0,298.2 794.0,298.0 795.0,298.7 796.0,299.1 796.5,298.8 797.1,174.3 798.1,172.7 799.1,172.8 800.1,172.1 801.1,172.0 802.1,172.4 803.1,172.9 804.1,172.9 805.1,172.2 806.1,171.6 807.1,171.9 808.1,172.1 809.1,172.1 810.1,171.9 811.1,172.1 812.1,172.6 813.1,172.7 814.1,172.4 815.1,171.9 816.1,172.1 817.1,173.0 818.1,173.2 819.1,172.5 820.1,172.0 821.1,172.0 822.1,172.1 823.1,171.9 824.1,171.5 825.1,171.7 826.1,172.4 827.1,172.8 828.1,172.5 829.1,171.9 830.1,171.9 831.1,172.6 832.1,172.9 833.1,172.6 834.1,172.4 835.1,172.4 836.1,172.6 837.1,172.4 838.1,171.5 839.1,171.6 840.1,172.2 841.1,172.8 842.1,172.3 843.1,171.8 844.1,171.7 845.1,172.2 846.1,172.6 847.1,172.6 848.1,172.5 849.1,172.8 850.1,172.9 851.1,172.6 852.1,172.0 853.1,171.7 854.1,172.0 855.1,172.6 856.1,172.3 857.1,171.9 858.1,171.9 859.1,172.2 860.1,172.4 861.1,172.3 862.1,171.9 863.1,172.3 864.1,173.0 865.1,173.1 866.1,172.5 867.1,172.0 868.1,172.1 869.1,172.6 870.1,172.6 870.5,172.3" fill="none" stroke="#1f7ae4" stroke-width="1.5" stroke-linejoin="round"/>
<polyline points="232.5,298.1 233.5,298.1 234.5,298.4 235.5,298.0 236.5,297.6 237.5,297.6 238.5,298.1 239.5,298.3 240.0,298.0 240.5,210.0 242.5,212.5 243.5,212.4 244.5,211.8 245.5,211.4 246.5,212.0 247.5,212.4 248.5,212.5 249.5,212.2 250.5,212.2 251.5,212.3 252.5,212.3 253.5,211.6 254.5,211.1 255.5,211.5 256.5,212.4 257.5,212.4 258.5,211.8 259.5,211.3 259.8,212.0 260.4,298.0 262.0,305.0 263.2,296.0 264.3,297.3 265.3,297.2 266.3,297.9 267.3,298.2 268.3,298.1 269.3,297.7 270.3,297.6 271.3,298.0 272.3,298.2 273.3,298.2 274.3,298.1 275.3,298.3 276.3,298.7 277.3,298.7 278.3,297.7 279.3,297.4 280.3,297.5 281.3,298.0 282.3,298.2 283.3,297.7 284.3,297.7 285.3,297.9 286.3,298.0 287.3,297.7 288.3,297.6 289.3,298.1 290.3,298.9 291.3,298.8 292.3,298.3 293.3,297.6 294.3,297.9 295.3,298.0 296.3,298.0 297.3,297.6 298.3,297.6 299.3,298.1 300.3,298.2 301.3,297.8 302.3,297.4 303.3,297.6 304.3,298.3 305.3,298.7 306.3,298.7 307.3,298.1 308.3,297.8 309.3,298.3 310.3,298.2 311.3,297.8 312.3,297.6 313.3,298.0 314.3,298.2 315.3,297.9 316.3,297.2 317.3,297.3 318.3,297.7 319.3,298.5 320.3,298.3 321.3,298.0 322.3,298.2 323.3,298.5 324.3,298.4 325.3,297.8 326.3,297.7 327.3,298.1 328.3,298.7 329.3,298.3 330.3,297.6 331.3,297.3 332.3,297.3 333.3,297.9 334.3,298.1 335.3,297.9 336.3,297.8 337.3,298.3 338.3,298.4 339.3,298.1 340.3,297.6 341.3,298.0 342.3,298.7 343.3,298.7 344.3,298.0 345.3,297.7 346.3,297.6 347.3,297.8 348.3,297.8 349.3,297.4 350.3,297.6 351.3,298.1 352.3,298.6 353.3,298.2 354.3,297.6 355.3,297.9 356.3,298.3 357.3,298.7 358.3,298.4 359.3,298.1 360.3,298.1 361.3,298.1 362.3,297.8 363.3,297.3 364.3,297.3 365.3,298.1 366.3,298.3 367.3,298.3 368.3,297.6 369.3,297.6 370.3,298.1 371.3,298.5 372.3,298.3 373.3,298.1 374.3,298.3 374.5,298.0 375.0,205.0 377.0,212.1 378.0,212.4 379.0,212.7 380.0,212.2 381.0,211.5 382.0,211.2 383.0,211.9 384.0,212.3 385.0,212.1 386.0,211.6 387.0,211.6 388.0,212.0 389.0,212.1 390.0,211.8 391.0,211.7 392.0,212.2 393.0,212.9 394.0,212.0 394.6,298.0 396.2,306.0 397.4,296.0 398.5,298.6 399.5,298.3 400.5,297.6 401.5,297.9 402.5,298.3 403.5,298.8 404.5,298.3 405.5,297.7 406.5,297.3 407.5,297.6 408.5,297.8 409.5,297.6 410.5,297.7 411.5,298.1 412.5,298.5 413.5,298.3 414.5,297.9 415.5,297.6 416.5,298.1 417.5,298.8 418.5,298.7 419.5,298.2 420.5,297.7 421.5,297.9 422.5,298.0 423.5,297.6 424.5,297.4 425.5,297.6 426.5,298.3 427.5,298.3 428.5,297.7 429.5,297.6 430.5,297.8 431.5,298.6 432.5,298.5 433.5,298.4 434.5,298.1 435.5,298.3 436.5,298.4 437.5,297.9 438.5,297.1 439.5,297.5 440.5,298.2 441.5,298.3 442.5,297.9 443.5,297.3 444.5,297.5 445.5,298.0 446.5,298.3 447.5,298.1 448.5,298.0 449.5,298.4 450.5,298.7 451.5,298.3 452.5,297.4 453.5,297.4 454.5,297.9 455.5,298.4 456.5,298.0 457.5,297.4 458.5,297.5 459.5,297.9 460.5,298.0 461.5,297.7 462.5,297.6 463.5,298.3 464.5,299.0 465.5,298.6 466.5,297.9 467.5,297.5 468.5,298.1 469.5,298.3 470.5,298.2 471.5,297.7 472.5,297.7 473.5,298.1 474.5,298.1 475.5,297.4 476.5,297.2 477.5,297.9 478.5,298.5 479.5,298.6 480.5,298.3 481.5,297.8 482.5,298.2 483.5,298.3 484.5,298.3 485.5,297.8 486.5,297.8 487.5,298.1 488.5,298.2 489.5,297.6 490.5,297.2 491.5,297.2 492.5,298.1 493.5,298.4 494.5,298.2 495.5,297.8 496.5,298.1 497.5,298.4 498.5,298.4 499.5,297.7 500.5,297.9 501.5,298.5 502.5,298.8 503.5,298.0 504.5,297.2 505.5,297.3 506.5,297.9 507.5,298.1 508.5,298.0 509.0,198.0 511.0,211.6 512.0,211.1 513.0,211.6 514.0,212.1 515.0,212.6 516.0,212.0 517.0,211.6 518.0,212.0 519.0,212.4 520.0,212.2 521.0,212.0 522.0,212.1 523.0,212.5 524.0,212.6 525.0,211.8 526.0,211.2 527.0,212.0 527.6,298.0 529.2,300.0 530.4,296.0 531.5,298.0 532.5,297.4 533.5,297.2 534.5,297.9 535.5,297.8 536.5,297.8 537.5,297.8 538.5,298.3 539.5,298.5 540.5,298.2 541.5,297.7 542.5,297.7 543.5,298.4 544.5,298.8 545.5,298.4 546.5,297.7 547.5,297.7 548.5,297.9 549.5,297.7 550.5,297.5 551.5,297.5 552.5,297.9 553.5,298.4 554.5,298.3 555.5,297.6 556.5,297.4 557.5,298.1 558.5,298.5 559.5,298.5 560.5,298.2 561.5,297.9 562.5,298.3 563.5,298.0 564.5,297.6 565.5,297.3 566.5,297.6 567.5,298.2 568.5,298.3 569.5,297.7 570.5,297.6 571.5,297.7 572.5,298.4 573.5,298.5 574.5,298.2 575.5,298.3 576.5,298.5 577.5,298.7 578.5,297.9 579.5,297.5 580.5,297.6 581.5,298.0 582.5,298.4 583.5,298.0 584.5,297.4 585.5,297.6 586.5,298.1 587.5,297.9 588.5,297.9 589.5,297.9 590.5,298.7 591.5,298.8 592.5,298.4 593.5,297.8 594.5,297.5 595.5,298.0 596.5,298.3 597.5,297.9 598.5,297.5 599.5,297.6 600.5,297.9 601.5,298.0 602.5,297.5 603.5,297.6 604.5,298.1 605.5,298.9 606.5,298.5 607.5,298.0 608.5,297.8 609.5,298.1 610.5,298.4 611.5,298.1 612.5,297.8 613.5,298.0 614.5,298.1 615.5,298.2 616.5,297.4 617.5,297.1 618.5,297.7 619.5,298.3 620.5,298.7 621.5,298.2 622.5,297.9 623.5,298.3 624.5,298.4 625.5,298.0 626.5,297.9 627.5,297.9 628.5,298.6 629.5,298.4 630.5,297.7 631.5,297.3 632.5,297.3 633.5,298.0 634.5,298.1 635.5,297.8 636.5,297.7 637.5,298.1 638.5,298.5 639.5,298.1 640.5,297.7 641.0,298.0 641.5,208.0 643.5,212.0 644.5,211.1 645.5,211.0 646.5,211.7 647.5,212.1 648.5,212.0 649.5,211.8 650.5,212.1 651.5,212.5 652.5,212.2 653.5,211.9 654.5,211.8 655.5,212.2 656.5,212.9 657.5,212.4 658.5,211.6 659.5,211.2 660.0,212.0 660.6,298.0 662.2,318.0 663.4,296.0 664.5,297.7 665.5,297.8 666.5,298.2 667.5,298.4 668.5,297.7 669.5,297.0 670.5,297.3 671.5,298.0 672.5,298.5 673.5,298.2 674.5,297.9 675.5,298.4 676.5,298.3 677.5,298.2 678.5,297.7 679.5,297.8 680.5,298.3 681.5,298.8 682.5,298.0 683.5,297.4 684.5,297.4 685.5,297.6 686.5,297.9 687.5,297.8 688.5,297.7 689.5,298.2 690.5,298.6 691.5,298.2 692.5,297.7 693.5,297.6 694.5,298.1 695.5,298.9 696.5,298.7 697.5,298.0 698.5,297.5 699.5,297.9 700.5,297.9 701.5,297.6 702.5,297.5 703.5,297.8 704.5,298.3 705.5,298.3 706.5,297.7 707.5,297.3 708.5,297.9 709.5,298.7 710.5,298.7 711.5,298.3 712.5,298.1 713.5,298.1 714.5,298.2 715.5,297.6 716.5,297.3 717.5,297.6 718.5,298.1 719.5,298.4 720.5,298.0 721.5,297.3 722.5,297.8 723.5,298.1 724.5,298.3 725.5,298.1 726.5,298.3 727.5,298.7 728.5,298.7 729.5,298.0 730.5,297.5 731.5,297.4 732.5,298.0 733.5,298.5 734.5,298.0 735.5,297.5 736.5,297.6 737.5,298.1 738.5,298.0 739.5,297.9 740.5,298.0 741.5,298.6 742.5,298.9 743.5,298.6 744.5,297.8 745.5,297.5 746.5,297.9 747.5,298.4 748.5,298.0 749.5,297.8 750.5,297.5 751.5,297.8 752.5,297.8 753.5,297.6 754.5,297.4 755.5,298.0 756.5,298.6 757.5,298.6 758.5,298.2 759.5,297.8 760.5,298.1 761.5,298.4 762.5,298.1 763.5,297.9 764.5,297.8 765.5,298.2 766.5,298.2 767.5,297.6 768.5,297.0 769.5,297.6 770.5,298.5 771.5,298.7 772.5,298.1 773.5,297.8 774.5,298.0 775.0,209.0 777.0,212.4 778.0,212.8 779.0,212.5 780.0,211.6 781.0,211.2 782.0,211.5 783.0,211.8 784.0,211.9 785.0,211.6 786.0,211.9 787.0,212.4 788.0,212.3 789.0,211.8 790.0,211.5 791.0,212.2 792.0,212.7 793.0,212.6 794.0,212.0 794.6,298.0 796.2,313.0 797.4,296.0 798.5,298.1 799.5,297.2 800.5,297.2 801.5,297.7 802.5,298.3 803.5,298.2 804.5,298.1 805.5,298.2 806.5,298.5 807.5,298.6 808.5,297.8 809.5,297.6 810.5,297.9 811.5,298.4 812.5,298.3 813.5,297.8 814.5,297.4 815.5,297.4 816.5,297.9 817.5,297.8 818.5,297.8 819.5,297.9 820.5,298.6 821.5,298.6 822.5,298.2 823.5,297.5 824.5,298.0 825.5,298.4 826.5,298.5 827.5,298.2 828.5,297.7 829.5,297.6 830.5,297.9 831.5,297.5 832.5,297.4 833.5,297.6 834.5,298.4 835.5,298.7 836.5,298.2 837.5,297.7 838.5,297.7 839.5,298.4 840.5,298.5 841.5,298.4 842.5,297.9 843.5,298.0 844.5,298.2 845.5,298.0 846.5,297.3 847.5,297.2 848.5,298.0 849.5,298.3 850.5,298.2 851.5,297.7 852.5,297.7 853.5,298.2 854.5,298.4 855.5,298.2 856.5,298.0 857.5,298.2 858.5,298.8 859.5,298.4 860.5,297.7 861.5,297.1 862.5,297.6 863.5,298.2 864.5,298.2 865.5,297.6 866.5,297.6 867.5,298.1 868.5,298.1 869.5,297.8 870.5,298.0" fill="none" stroke="#0cd0e0" stroke-width="1.4" stroke-linejoin="round"/>
<text x="10.03" y="71.60" font-size="30.09" fill="#ffffff" font-weight="normal" textLength="112.31" lengthAdjust="spacingAndGlyphs" style='font-family:"Liberation Sans", sans-serif'  stroke="#ffffff" stroke-width="0.25">DHO924</text>
<rect x="7" y="518" width="83" height="74.5" rx="7" fill="#000"/>
<rect x="97" y="518" width="798.5" height="74" rx="8" fill="#000"/>
<rect x="902" y="518" width="115" height="74.6" rx="8" fill="#000"/>
<polygon points="83.00,555.00 83.00,555.31 82.99,555.61 82.99,555.92 82.98,556.22 82.97,556.53 82.95,556.83 82.93,557.14 82.91,557.44 82.89,557.75 82.87,558.05 82.84,558.35 82.81,558.66 82.78,558.96 82.74,559.27 82.70,559.57 82.66,559.87 82.62,560.17 82.57,560.48 82.52,560.78 82.47,561.08 82.41,561.38 82.36,561.68 82.30,561.98 82.24,562.28 82.17,562.58 82.10,562.87 82.03,563.17 81.96,563.47 81.89,563.76 81.81,564.06 81.73,564.35 81.64,564.65 81.52,564.93 81.34,565.19 81.08,565.43 80.76,565.64 80.37,565.83 79.93,566.00 79.44,566.13 78.90,566.25 78.32,566.34 77.70,566.40 77.06,566.45 76.40,566.47 75.72,566.48 75.04,566.48 74.30,566.44 73.95,566.56 73.67,566.70 73.43,566.86 73.22,567.03 73.02,567.20 72.84,567.38 72.66,567.57 72.50,567.76 72.35,567.95 72.21,568.14 72.07,568.34 71.94,568.54 71.82,568.75 71.70,568.96 71.59,569.17 71.48,569.39 71.39,569.61 71.30,569.84 71.22,570.08 71.14,570.32 71.08,570.57 71.03,570.82 70.99,571.10 70.97,571.38 70.98,571.70 71.05,572.06 71.46,572.68 71.80,573.27 72.13,573.86 72.44,574.44 72.73,575.02 72.98,575.59 73.19,576.14 73.36,576.66 73.49,577.16 73.57,577.62 73.60,578.05 73.57,578.43 73.49,578.77 73.36,579.07 73.18,579.31 72.96,579.53 72.75,579.75 72.53,579.96 72.31,580.18 72.09,580.39 71.87,580.60 71.65,580.80 71.42,581.01 71.19,581.21 70.96,581.41 70.73,581.61 70.50,581.81 70.26,582.01 70.03,582.20 69.79,582.39 69.55,582.58 69.31,582.77 69.06,582.95 68.82,583.13 68.57,583.32 68.32,583.49 68.08,583.67 67.82,583.84 67.57,584.02 67.32,584.19 67.06,584.35 66.81,584.52 66.55,584.68 66.29,584.84 66.03,585.00 65.76,585.16 65.50,585.31 65.23,585.46 64.97,585.61 64.70,585.76 64.43,585.90 64.16,586.05 63.89,586.19 63.62,586.32 63.34,586.46 63.07,586.59 62.79,586.72 62.51,586.85 62.24,586.97 61.96,587.10 61.68,587.22 61.39,587.34 61.11,587.45 60.83,587.56 60.54,587.68 60.26,587.78 59.97,587.89 59.68,587.99 59.39,588.09 59.11,588.19 58.82,588.29 58.52,588.38 58.23,588.47 57.94,588.56 57.65,588.64 57.35,588.73 57.06,588.81 56.76,588.89 56.47,588.96 56.16,589.00 55.84,588.97 55.51,588.86 55.16,588.69 54.81,588.45 54.44,588.15 54.08,587.79 53.71,587.38 53.34,586.92 52.98,586.42 52.62,585.89 52.26,585.33 51.92,584.75 51.58,584.16 51.25,583.49 50.97,583.25 50.70,583.09 50.45,582.96 50.19,582.85 49.94,582.77 49.69,582.70 49.45,582.64 49.20,582.60 48.96,582.56 48.72,582.53 48.48,582.52 48.24,582.50 48.00,582.50 47.76,582.50 47.52,582.52 47.28,582.53 47.04,582.56 46.80,582.60 46.55,582.64 46.31,582.70 46.06,582.77 45.81,582.85 45.55,582.96 45.30,583.09 45.03,583.25 44.75,583.49 44.42,584.16 44.08,584.75 43.74,585.33 43.38,585.89 43.02,586.42 42.66,586.92 42.29,587.38 41.92,587.79 41.56,588.15 41.19,588.45 40.84,588.69 40.49,588.86 40.16,588.97 39.84,589.00 39.53,588.96 39.24,588.89 38.94,588.81 38.65,588.73 38.35,588.64 38.06,588.56 37.77,588.47 37.48,588.38 37.18,588.29 36.89,588.19 36.61,588.09 36.32,587.99 36.03,587.89 35.74,587.78 35.46,587.68 35.17,587.56 34.89,587.45 34.61,587.34 34.32,587.22 34.04,587.10 33.76,586.97 33.49,586.85 33.21,586.72 32.93,586.59 32.66,586.46 32.38,586.32 32.11,586.19 31.84,586.05 31.57,585.90 31.30,585.76 31.03,585.61 30.77,585.46 30.50,585.31 30.24,585.16 29.97,585.00 29.71,584.84 29.45,584.68 29.19,584.52 28.94,584.35 28.68,584.19 28.43,584.02 28.18,583.84 27.92,583.67 27.68,583.49 27.43,583.32 27.18,583.13 26.94,582.95 26.69,582.77 26.45,582.58 26.21,582.39 25.97,582.20 25.74,582.01 25.50,581.81 25.27,581.61 25.04,581.41 24.81,581.21 24.58,581.01 24.35,580.80 24.13,580.60 23.91,580.39 23.69,580.18 23.47,579.96 23.25,579.75 23.04,579.53 22.82,579.31 22.64,579.07 22.51,578.77 22.43,578.43 22.40,578.05 22.43,577.62 22.51,577.16 22.64,576.66 22.81,576.14 23.02,575.59 23.27,575.02 23.56,574.44 23.87,573.86 24.20,573.27 24.54,572.68 24.95,572.06 25.02,571.70 25.03,571.38 25.01,571.10 24.97,570.82 24.92,570.57 24.86,570.32 24.78,570.08 24.70,569.84 24.61,569.61 24.52,569.39 24.41,569.17 24.30,568.96 24.18,568.75 24.06,568.54 23.93,568.34 23.79,568.14 23.65,567.95 23.50,567.76 23.34,567.57 23.16,567.38 22.98,567.20 22.78,567.03 22.57,566.86 22.33,566.70 22.05,566.56 21.70,566.44 20.96,566.48 20.28,566.48 19.60,566.47 18.94,566.45 18.30,566.40 17.68,566.34 17.10,566.25 16.56,566.13 16.07,566.00 15.63,565.83 15.24,565.64 14.92,565.43 14.66,565.19 14.48,564.93 14.36,564.65 14.27,564.35 14.19,564.06 14.11,563.76 14.04,563.47 13.97,563.17 13.90,562.87 13.83,562.58 13.76,562.28 13.70,561.98 13.64,561.68 13.59,561.38 13.53,561.08 13.48,560.78 13.43,560.48 13.38,560.17 13.34,559.87 13.30,559.57 13.26,559.27 13.22,558.96 13.19,558.66 13.16,558.35 13.13,558.05 13.11,557.75 13.09,557.44 13.07,557.14 13.05,556.83 13.03,556.53 13.02,556.22 13.01,555.92 13.01,555.61 13.00,555.31 13.00,555.00 13.00,554.69 13.01,554.39 13.01,554.08 13.02,553.78 13.03,553.47 13.05,553.17 13.07,552.86 13.09,552.56 13.11,552.25 13.13,551.95 13.16,551.65 13.19,551.34 13.22,551.04 13.26,550.73 13.30,550.43 13.34,550.13 13.38,549.83 13.43,549.52 13.48,549.22 13.53,548.92 13.59,548.62 13.64,548.32 13.70,548.02 13.76,547.72 13.83,547.42 13.90,547.13 13.97,546.83 14.04,546.53 14.11,546.24 14.19,545.94 14.27,545.65 14.36,545.35 14.48,545.07 14.66,544.81 14.92,544.57 15.24,544.36 15.63,544.17 16.07,544.00 16.56,543.87 17.10,543.75 17.68,543.66 18.30,543.60 18.94,543.55 19.60,543.53 20.28,543.52 20.96,543.52 21.70,543.56 22.05,543.44 22.33,543.30 22.57,543.14 22.78,542.97 22.98,542.80 23.16,542.62 23.34,542.43 23.50,542.24 23.65,542.05 23.79,541.86 23.93,541.66 24.06,541.46 24.18,541.25 24.30,541.04 24.41,540.83 24.52,540.61 24.61,540.39 24.70,540.16 24.78,539.92 24.86,539.68 24.92,539.43 24.97,539.18 25.01,538.90 25.03,538.62 25.02,538.30 24.95,537.94 24.54,537.32 24.20,536.73 23.87,536.14 23.56,535.56 23.27,534.98 23.02,534.41 22.81,533.86 22.64,533.34 22.51,532.84 22.43,532.38 22.40,531.95 22.43,531.57 22.51,531.23 22.64,530.93 22.82,530.69 23.04,530.47 23.25,530.25 23.47,530.04 23.69,529.82 23.91,529.61 24.13,529.40 24.35,529.20 24.58,528.99 24.81,528.79 25.04,528.59 25.27,528.39 25.50,528.19 25.74,527.99 25.97,527.80 26.21,527.61 26.45,527.42 26.69,527.23 26.94,527.05 27.18,526.87 27.43,526.68 27.68,526.51 27.92,526.33 28.18,526.16 28.43,525.98 28.68,525.81 28.94,525.65 29.19,525.48 29.45,525.32 29.71,525.16 29.97,525.00 30.24,524.84 30.50,524.69 30.77,524.54 31.03,524.39 31.30,524.24 31.57,524.10 31.84,523.95 32.11,523.81 32.38,523.68 32.66,523.54 32.93,523.41 33.21,523.28 33.49,523.15 33.76,523.03 34.04,522.90 34.32,522.78 34.61,522.66 34.89,522.55 35.17,522.44 35.46,522.32 35.74,522.22 36.03,522.11 36.32,522.01 36.61,521.91 36.89,521.81 37.18,521.71 37.48,521.62 37.77,521.53 38.06,521.44 38.35,521.36 38.65,521.27 38.94,521.19 39.24,521.11 39.53,521.04 39.84,521.00 40.16,521.03 40.49,521.14 40.84,521.31 41.19,521.55 41.56,521.85 41.92,522.21 42.29,522.62 42.66,523.08 43.02,523.58 43.38,524.11 43.74,524.67 44.08,525.25 44.42,525.84 44.75,526.51 45.03,526.75 45.30,526.91 45.55,527.04 45.81,527.15 46.06,527.23 46.31,527.30 46.55,527.36 46.80,527.40 47.04,527.44 47.28,527.47 47.52,527.48 47.76,527.50 48.00,527.50 48.24,527.50 48.48,527.48 48.72,527.47 48.96,527.44 49.20,527.40 49.45,527.36 49.69,527.30 49.94,527.23 50.19,527.15 50.45,527.04 50.70,526.91 50.97,526.75 51.25,526.51 51.58,525.84 51.92,525.25 52.26,524.67 52.62,524.11 52.98,523.58 53.34,523.08 53.71,522.62 54.08,522.21 54.44,521.85 54.81,521.55 55.16,521.31 55.51,521.14 55.84,521.03 56.16,521.00 56.47,521.04 56.76,521.11 57.06,521.19 57.35,521.27 57.65,521.36 57.94,521.44 58.23,521.53 58.52,521.62 58.82,521.71 59.11,521.81 59.39,521.91 59.68,522.01 59.97,522.11 60.26,522.22 60.54,522.32 60.83,522.44 61.11,522.55 61.39,522.66 61.68,522.78 61.96,522.90 62.24,523.03 62.51,523.15 62.79,523.28 63.07,523.41 63.34,523.54 63.62,523.68 63.89,523.81 64.16,523.95 64.43,524.10 64.70,524.24 64.97,524.39 65.23,524.54 65.50,524.69 65.76,524.84 66.03,525.00 66.29,525.16 66.55,525.32 66.81,525.48 67.06,525.65 67.32,525.81 67.57,525.98 67.82,526.16 68.08,526.33 68.32,526.51 68.57,526.68 68.82,526.87 69.06,527.05 69.31,527.23 69.55,527.42 69.79,527.61 70.03,527.80 70.26,527.99 70.50,528.19 70.73,528.39 70.96,528.59 71.19,528.79 71.42,528.99 71.65,529.20 71.87,529.40 72.09,529.61 72.31,529.82 72.53,530.04 72.75,530.25 72.96,530.47 73.18,530.69 73.36,530.93 73.49,531.23 73.57,531.57 73.60,531.95 73.57,532.38 73.49,532.84 73.36,533.34 73.19,533.86 72.98,534.41 72.73,534.98 72.44,535.56 72.13,536.14 71.80,536.73 71.46,537.32 71.05,537.94 70.98,538.30 70.97,538.62 70.99,538.90 71.03,539.18 71.08,539.43 71.14,539.68 71.22,539.92 71.30,540.16 71.39,540.39 71.48,540.61 71.59,540.83 71.70,541.04 71.82,541.25 71.94,541.46 72.07,541.66 72.21,541.86 72.35,542.05 72.50,542.24 72.66,542.43 72.84,542.62 73.02,542.80 73.22,542.97 73.43,543.14 73.67,543.30 73.95,543.44 74.30,543.56 75.04,543.52 75.72,543.52 76.40,543.53 77.06,543.55 77.70,543.60 78.32,543.66 78.90,543.75 79.44,543.87 79.93,544.00 80.37,544.17 80.76,544.36 81.08,544.57 81.34,544.81 81.52,545.07 81.64,545.35 81.73,545.65 81.81,545.94 81.89,546.24 81.96,546.53 82.03,546.83 82.10,547.13 82.17,547.42 82.24,547.72 82.30,548.02 82.36,548.32 82.41,548.62 82.47,548.92 82.52,549.22 82.57,549.52 82.62,549.83 82.66,550.13 82.70,550.43 82.74,550.73 82.78,551.04 82.81,551.34 82.84,551.65 82.87,551.95 82.89,552.25 82.91,552.56 82.93,552.86 82.95,553.17 82.97,553.47 82.98,553.78 82.99,554.08 82.99,554.39 83.00,554.69" fill="url(#ring)"/>
<polygon points="74.80,555.00 74.80,555.23 74.80,555.47 74.79,555.70 74.78,555.94 74.77,556.17 74.76,556.40 74.75,556.64 74.73,556.87 74.72,557.10 74.70,557.34 74.68,557.57 74.65,557.80 74.63,558.03 74.60,558.27 74.57,558.50 74.54,558.73 74.51,558.96 74.47,559.19 74.43,559.42 74.39,559.65 74.35,559.88 74.31,560.11 74.26,560.34 74.21,560.57 74.16,560.80 74.11,561.03 74.06,561.26 74.00,561.48 73.95,561.71 73.89,561.94 73.80,562.16 73.67,562.36 73.48,562.55 73.25,562.72 72.98,562.88 72.66,563.01 72.31,563.13 71.92,563.24 71.51,563.33 71.07,563.40 70.61,563.45 70.13,563.50 69.65,563.53 69.16,563.55 68.66,563.56 68.42,563.67 68.22,563.79 68.05,563.93 67.89,564.07 67.75,564.21 67.61,564.35 67.48,564.50 67.36,564.65 67.24,564.80 67.13,564.96 67.02,565.11 66.92,565.27 66.81,565.43 66.71,565.59 66.62,565.75 66.53,565.91 66.44,566.08 66.35,566.25 66.27,566.42 66.19,566.59 66.11,566.76 66.04,566.94 65.97,567.12 65.91,567.31 65.85,567.50 65.80,567.70 65.76,567.90 65.73,568.12 65.72,568.35 65.74,568.61 65.99,569.05 66.21,569.49 66.43,569.92 66.63,570.35 66.81,570.78 66.96,571.20 67.10,571.60 67.20,571.99 67.27,572.35 67.31,572.69 67.31,573.01 67.28,573.29 67.21,573.55 67.10,573.77 66.95,573.95 66.78,574.12 66.62,574.28 66.45,574.44 66.28,574.60 66.11,574.76 65.93,574.92 65.76,575.07 65.58,575.23 65.41,575.38 65.23,575.53 65.05,575.68 64.87,575.83 64.68,575.97 64.50,576.12 64.31,576.26 64.13,576.40 63.94,576.54 63.75,576.68 63.56,576.82 63.37,576.95 63.18,577.09 62.99,577.22 62.79,577.35 62.60,577.48 62.40,577.60 62.20,577.73 62.00,577.85 61.80,577.97 61.60,578.09 61.40,578.21 61.20,578.33 60.99,578.44 60.79,578.55 60.58,578.66 60.37,578.77 60.17,578.88 59.96,578.98 59.75,579.09 59.54,579.19 59.33,579.29 59.11,579.39 58.90,579.48 58.69,579.58 58.47,579.67 58.26,579.76 58.04,579.85 57.82,579.94 57.60,580.02 57.39,580.10 57.17,580.18 56.95,580.26 56.73,580.34 56.50,580.42 56.28,580.49 56.06,580.56 55.84,580.63 55.61,580.70 55.39,580.76 55.16,580.83 54.94,580.89 54.70,580.92 54.46,580.91 54.20,580.84 53.94,580.73 53.67,580.57 53.39,580.37 53.11,580.12 52.83,579.84 52.54,579.52 52.26,579.18 51.98,578.81 51.71,578.42 51.44,578.01 51.18,577.60 50.92,577.17 50.70,577.02 50.50,576.91 50.29,576.83 50.10,576.76 49.90,576.71 49.70,576.66 49.51,576.62 49.32,576.59 49.13,576.57 48.94,576.55 48.75,576.53 48.56,576.52 48.38,576.51 48.19,576.50 48.00,576.50 47.81,576.50 47.62,576.51 47.44,576.52 47.25,576.53 47.06,576.55 46.87,576.57 46.68,576.59 46.49,576.62 46.30,576.66 46.10,576.71 45.90,576.76 45.71,576.83 45.50,576.91 45.30,577.02 45.08,577.17 44.82,577.60 44.56,578.01 44.29,578.42 44.02,578.81 43.74,579.18 43.46,579.52 43.17,579.84 42.89,580.12 42.61,580.37 42.33,580.57 42.06,580.73 41.80,580.84 41.54,580.91 41.30,580.92 41.06,580.89 40.84,580.83 40.61,580.76 40.39,580.70 40.16,580.63 39.94,580.56 39.72,580.49 39.50,580.42 39.27,580.34 39.05,580.26 38.83,580.18 38.61,580.10 38.40,580.02 38.18,579.94 37.96,579.85 37.74,579.76 37.53,579.67 37.31,579.58 37.10,579.48 36.89,579.39 36.67,579.29 36.46,579.19 36.25,579.09 36.04,578.98 35.83,578.88 35.63,578.77 35.42,578.66 35.21,578.55 35.01,578.44 34.80,578.33 34.60,578.21 34.40,578.09 34.20,577.97 34.00,577.85 33.80,577.73 33.60,577.60 33.40,577.48 33.21,577.35 33.01,577.22 32.82,577.09 32.63,576.95 32.44,576.82 32.25,576.68 32.06,576.54 31.87,576.40 31.69,576.26 31.50,576.12 31.32,575.97 31.13,575.83 30.95,575.68 30.77,575.53 30.59,575.38 30.42,575.23 30.24,575.07 30.07,574.92 29.89,574.76 29.72,574.60 29.55,574.44 29.38,574.28 29.22,574.12 29.05,573.95 28.90,573.77 28.79,573.55 28.72,573.29 28.69,573.01 28.69,572.69 28.73,572.35 28.80,571.99 28.90,571.60 29.04,571.20 29.19,570.78 29.37,570.35 29.57,569.92 29.79,569.49 30.01,569.05 30.26,568.61 30.28,568.35 30.27,568.12 30.24,567.90 30.20,567.70 30.15,567.50 30.09,567.31 30.03,567.12 29.96,566.94 29.89,566.76 29.81,566.59 29.73,566.42 29.65,566.25 29.56,566.08 29.47,565.91 29.38,565.75 29.29,565.59 29.19,565.43 29.08,565.27 28.98,565.11 28.87,564.96 28.76,564.80 28.64,564.65 28.52,564.50 28.39,564.35 28.25,564.21 28.11,564.07 27.95,563.93 27.78,563.79 27.58,563.67 27.34,563.56 26.84,563.55 26.35,563.53 25.87,563.50 25.39,563.45 24.93,563.40 24.49,563.33 24.08,563.24 23.69,563.13 23.34,563.01 23.02,562.88 22.75,562.72 22.52,562.55 22.33,562.36 22.20,562.16 22.11,561.94 22.05,561.71 22.00,561.48 21.94,561.26 21.89,561.03 21.84,560.80 21.79,560.57 21.74,560.34 21.69,560.11 21.65,559.88 21.61,559.65 21.57,559.42 21.53,559.19 21.49,558.96 21.46,558.73 21.43,558.50 21.40,558.27 21.37,558.03 21.35,557.80 21.32,557.57 21.30,557.34 21.28,557.10 21.27,556.87 21.25,556.64 21.24,556.40 21.23,556.17 21.22,555.94 21.21,555.70 21.20,555.47 21.20,555.23 21.20,555.00 21.20,554.77 21.20,554.53 21.21,554.30 21.22,554.06 21.23,553.83 21.24,553.60 21.25,553.36 21.27,553.13 21.28,552.90 21.30,552.66 21.32,552.43 21.35,552.20 21.37,551.97 21.40,551.73 21.43,551.50 21.46,551.27 21.49,551.04 21.53,550.81 21.57,550.58 21.61,550.35 21.65,550.12 21.69,549.89 21.74,549.66 21.79,549.43 21.84,549.20 21.89,548.97 21.94,548.74 22.00,548.52 22.05,548.29 22.11,548.06 22.20,547.84 22.33,547.64 22.52,547.45 22.75,547.28 23.02,547.12 23.34,546.99 23.69,546.87 24.08,546.76 24.49,546.67 24.93,546.60 25.39,546.55 25.87,546.50 26.35,546.47 26.84,546.45 27.34,546.44 27.58,546.33 27.78,546.21 27.95,546.07 28.11,545.93 28.25,545.79 28.39,545.65 28.52,545.50 28.64,545.35 28.76,545.20 28.87,545.04 28.98,544.89 29.08,544.73 29.19,544.57 29.29,544.41 29.38,544.25 29.47,544.09 29.56,543.92 29.65,543.75 29.73,543.58 29.81,543.41 29.89,543.24 29.96,543.06 30.03,542.88 30.09,542.69 30.15,542.50 30.20,542.30 30.24,542.10 30.27,541.88 30.28,541.65 30.26,541.39 30.01,540.95 29.79,540.51 29.57,540.08 29.37,539.65 29.19,539.22 29.04,538.80 28.90,538.40 28.80,538.01 28.73,537.65 28.69,537.31 28.69,536.99 28.72,536.71 28.79,536.45 28.90,536.23 29.05,536.05 29.22,535.88 29.38,535.72 29.55,535.56 29.72,535.40 29.89,535.24 30.07,535.08 30.24,534.93 30.42,534.77 30.59,534.62 30.77,534.47 30.95,534.32 31.13,534.17 31.32,534.03 31.50,533.88 31.69,533.74 31.87,533.60 32.06,533.46 32.25,533.32 32.44,533.18 32.63,533.05 32.82,532.91 33.01,532.78 33.21,532.65 33.40,532.52 33.60,532.40 33.80,532.27 34.00,532.15 34.20,532.03 34.40,531.91 34.60,531.79 34.80,531.67 35.01,531.56 35.21,531.45 35.42,531.34 35.63,531.23 35.83,531.12 36.04,531.02 36.25,530.91 36.46,530.81 36.67,530.71 36.89,530.61 37.10,530.52 37.31,530.42 37.53,530.33 37.74,530.24 37.96,530.15 38.18,530.06 38.40,529.98 38.61,529.90 38.83,529.82 39.05,529.74 39.27,529.66 39.50,529.58 39.72,529.51 39.94,529.44 40.16,529.37 40.39,529.30 40.61,529.24 40.84,529.17 41.06,529.11 41.30,529.08 41.54,529.09 41.80,529.16 42.06,529.27 42.33,529.43 42.61,529.63 42.89,529.88 43.17,530.16 43.46,530.48 43.74,530.82 44.02,531.19 44.29,531.58 44.56,531.99 44.82,532.40 45.08,532.83 45.30,532.98 45.50,533.09 45.71,533.17 45.90,533.24 46.10,533.29 46.30,533.34 46.49,533.38 46.68,533.41 46.87,533.43 47.06,533.45 47.25,533.47 47.44,533.48 47.62,533.49 47.81,533.50 48.00,533.50 48.19,533.50 48.38,533.49 48.56,533.48 48.75,533.47 48.94,533.45 49.13,533.43 49.32,533.41 49.51,533.38 49.70,533.34 49.90,533.29 50.10,533.24 50.29,533.17 50.50,533.09 50.70,532.98 50.92,532.83 51.18,532.40 51.44,531.99 51.71,531.58 51.98,531.19 52.26,530.82 52.54,530.48 52.83,530.16 53.11,529.88 53.39,529.63 53.67,529.43 53.94,529.27 54.20,529.16 54.46,529.09 54.70,529.08 54.94,529.11 55.16,529.17 55.39,529.24 55.61,529.30 55.84,529.37 56.06,529.44 56.28,529.51 56.50,529.58 56.73,529.66 56.95,529.74 57.17,529.82 57.39,529.90 57.60,529.98 57.82,530.06 58.04,530.15 58.26,530.24 58.47,530.33 58.69,530.42 58.90,530.52 59.11,530.61 59.33,530.71 59.54,530.81 59.75,530.91 59.96,531.02 60.17,531.12 60.37,531.23 60.58,531.34 60.79,531.45 60.99,531.56 61.20,531.67 61.40,531.79 61.60,531.91 61.80,532.03 62.00,532.15 62.20,532.27 62.40,532.40 62.60,532.52 62.79,532.65 62.99,532.78 63.18,532.91 63.37,533.05 63.56,533.18 63.75,533.32 63.94,533.46 64.13,533.60 64.31,533.74 64.50,533.88 64.68,534.03 64.87,534.17 65.05,534.32 65.23,534.47 65.41,534.62 65.58,534.77 65.76,534.93 65.93,535.08 66.11,535.24 66.28,535.40 66.45,535.56 66.62,535.72 66.78,535.88 66.95,536.05 67.10,536.23 67.21,536.45 67.28,536.71 67.31,536.99 67.31,537.31 67.27,537.65 67.20,538.01 67.10,538.40 66.96,538.80 66.81,539.22 66.63,539.65 66.43,540.08 66.21,540.51 65.99,540.95 65.74,541.39 65.72,541.65 65.73,541.88 65.76,542.10 65.80,542.30 65.85,542.50 65.91,542.69 65.97,542.88 66.04,543.06 66.11,543.24 66.19,543.41 66.27,543.58 66.35,543.75 66.44,543.92 66.53,544.09 66.62,544.25 66.71,544.41 66.81,544.57 66.92,544.73 67.02,544.89 67.13,545.04 67.24,545.20 67.36,545.35 67.48,545.50 67.61,545.65 67.75,545.79 67.89,545.93 68.05,546.07 68.22,546.21 68.42,546.33 68.66,546.44 69.16,546.45 69.65,546.47 70.13,546.50 70.61,546.55 71.07,546.60 71.51,546.67 71.92,546.76 72.31,546.87 72.66,546.99 72.98,547.12 73.25,547.28 73.48,547.45 73.67,547.64 73.80,547.84 73.89,548.06 73.95,548.29 74.00,548.52 74.06,548.74 74.11,548.97 74.16,549.20 74.21,549.43 74.26,549.66 74.31,549.89 74.35,550.12 74.39,550.35 74.43,550.58 74.47,550.81 74.51,551.04 74.54,551.27 74.57,551.50 74.60,551.73 74.63,551.97 74.65,552.20 74.68,552.43 74.70,552.66 74.72,552.90 74.73,553.13 74.75,553.36 74.76,553.60 74.77,553.83 74.78,554.06 74.79,554.30 74.80,554.53 74.80,554.77" fill="url(#gearin)"/>
<path d="M34.7,540.4 L57,540.4 Q62.5,540.6 62.5,548 Q62.5,554 57,556 L63.5,569 L56.5,569 L50.5,557 L43.2,557 L43.2,569 L35,569 L35,556 Q35,551 40,551 L54,551 Q56,551 56,548.2 Q56,545.6 54,545.6 L39.5,545.6 Z" fill="url(#tex)" stroke="#d8d8d8" stroke-width="0.7"/>
<path d="M100,526 L206,526 Q210,526 210,530 L210,583 Q210,587 206,587 L104,587 Q100,587 100,583 L100,527 Z" fill="#2e383d" stroke="#56646a" stroke-width="2"/>
<rect x="129" y="525" width="80" height="7" fill="#56646a"/>
<path d="M101,531.5 L205,531.5 Q209,531.5 209,535.5 L209,540 L101,540 Z" fill="#2e383d"/>
<path d="M100,565.5 L100,527 Q100,522.5 104,522.5 L125,522.5 Q130,522.5 130,527 L130,565.5 Z" fill="#000" stroke="#56646a" stroke-width="2"/>
<path d="M112,534.1 L116.1,534.1 L116.1,551.9 L112,551.9 L112,538.9 L107.8,540.2 L107.8,536.7 Z" fill="#8a969c"/>
<text x="138.12" y="545.10" font-size="14.54" fill="#8a969c" font-weight="normal" textLength="62.28" lengthAdjust="spacingAndGlyphs" style='font-family:"Liberation Sans", sans-serif'  stroke="#8a969c" stroke-width="0.25">50.00mV/</text>
<text x="137.96" y="563.80" font-size="14.10" fill="#8a969c" font-weight="normal" textLength="36.41" lengthAdjust="spacingAndGlyphs" style='font-family:"Liberation Sans", sans-serif'  stroke="#8a969c" stroke-width="0.25">0.00V</text>
<rect x="169" y="574.3" width="15" height="1.6" fill="#8a969c"/>
<rect x="169" y="579.6" width="3" height="1.6" fill="#8a969c"/>
<rect x="173" y="579.6" width="3" height="1.6" fill="#8a969c"/>
<rect x="177" y="579.6" width="3" height="1.6" fill="#8a969c"/>
<rect x="181" y="579.6" width="3" height="1.6" fill="#8a969c"/>
<path d="M215.5,526 L321,526 Q325,526 325,530 L325,583 Q325,587 321,587 L219.5,587 Q215.5,587 215.5,583 L215.5,527 Z" fill="#2e383d" stroke="#56646a" stroke-width="2"/>
<rect x="244.5" y="525" width="79.5" height="7" fill="#56646a"/>
<path d="M216.5,531.5 L320,531.5 Q324,531.5 324,535.5 L324,540 L216.5,540 Z" fill="#2e383d"/>
<path d="M215.5,565.5 L215.5,527 Q215.5,522.5 219.5,522.5 L240.5,522.5 Q245.5,522.5 245.5,527 L245.5,565.5 Z" fill="#000" stroke="#56646a" stroke-width="2"/>
<text x="220.31" y="552.00" font-size="26.02" fill="#00e8ff" font-weight="bold" textLength="15.83" lengthAdjust="spacingAndGlyphs" style='font-family:"Liberation Sans", sans-serif' >2</text>
<text x="252.56" y="545.10" font-size="14.54" fill="#00e8ff" font-weight="normal" textLength="42.44" lengthAdjust="spacingAndGlyphs" style='font-family:"Liberation Sans", sans-serif'  stroke="#00e8ff" stroke-width="0.25">2.00V/</text>
<text x="252.76" y="563.80" font-size="14.10" fill="#f4f4f4" font-weight="normal" textLength="36.00" lengthAdjust="spacingAndGlyphs" style='font-family:"Liberation Sans", sans-serif'  stroke="#f4f4f4" stroke-width="0.25">0.00V</text>
<rect x="284.3" y="574.3" width="15" height="1.6" fill="#f4f4f4"/>
<rect x="284.3" y="579.6" width="3" height="1.6" fill="#f4f4f4"/>
<rect x="288.3" y="579.6" width="3" height="1.6" fill="#f4f4f4"/>
<rect x="292.3" y="579.6" width="3" height="1.6" fill="#f4f4f4"/>
<rect x="296.3" y="579.6" width="3" height="1.6" fill="#f4f4f4"/>
<path d="M330,526 L436,526 Q440,526 440,530 L440,583 Q440,587 436,587 L334,587 Q330,587 330,583 L330,527 Z" fill="#2e383d" stroke="#56646a" stroke-width="2"/>
<rect x="359" y="525" width="80" height="7" fill="#56646a"/>
<path d="M331,531.5 L435,531.5 Q439,531.5 439,535.5 L439,540 L331,540 Z" fill="#2e383d"/>
<path d="M330,565.5 L330,527 Q330,522.5 334,522.5 L355,522.5 Q360,522.5 360,527 L360,565.5 Z" fill="#000" stroke="#56646a" stroke-width="2"/>
<text x="336.11" y="552.00" font-size="26.02" fill="#8a969c" font-weight="bold" textLength="14.32" lengthAdjust="spacingAndGlyphs" style='font-family:"Liberation Sans", sans-serif' >3</text>
<text x="368.12" y="545.10" font-size="14.54" fill="#8a969c" font-weight="normal" textLength="62.28" lengthAdjust="spacingAndGlyphs" style='font-family:"Liberation Sans", sans-serif'  stroke="#8a969c" stroke-width="0.25">50.00mV/</text>
<text x="367.96" y="563.80" font-size="14.10" fill="#8a969c" font-weight="normal" textLength="36.41" lengthAdjust="spacingAndGlyphs" style='font-family:"Liberation Sans", sans-serif'  stroke="#8a969c" stroke-width="0.25">0.00V</text>
<rect x="399" y="574.3" width="15" height="1.6" fill="#8a969c"/>
<rect x="399" y="579.6" width="3" height="1.6" fill="#8a969c"/>
<rect x="403" y="579.6" width="3" height="1.6" fill="#8a969c"/>
<rect x="407" y="579.6" width="3" height="1.6" fill="#8a969c"/>
<rect x="411" y="579.6" width="3" height="1.6" fill="#8a969c"/>
<path d="M445,526 L551,526 Q555,526 555,530 L555,583 Q555,587 551,587 L449,587 Q445,587 445,583 L445,527 Z" fill="#2e383d" stroke="#1a8cff" stroke-width="2.4"/>
<rect x="474" y="525" width="80" height="7" fill="#1a8cff"/>
<path d="M446,531.5 L550,531.5 Q554,531.5 554,535.5 L554,540 L446,540 Z" fill="#2e383d"/>
<path d="M445,565.5 L445,527 Q445,522.5 449,522.5 L470,522.5 Q475,522.5 475,527 L475,565.5 Z" fill="#000" stroke="#1a8cff" stroke-width="2.4"/>
<text x="450.91" y="552.00" font-size="26.02" fill="#1a8cff" font-weight="bold" textLength="14.22" lengthAdjust="spacingAndGlyphs" style='font-family:"Liberation Sans", sans-serif' >4</text>
<text x="482.17" y="545.10" font-size="14.54" fill="#1a8cff" font-weight="normal" textLength="42.83" lengthAdjust="spacingAndGlyphs" style='font-family:"Liberation Sans", sans-serif'  stroke="#1a8cff" stroke-width="0.25">1.00V/</text>
<text x="482.76" y="563.80" font-size="14.10" fill="#f4f4f4" font-weight="normal" textLength="36.00" lengthAdjust="spacingAndGlyphs" style='font-family:"Liberation Sans", sans-serif'  stroke="#f4f4f4" stroke-width="0.25">0.00V</text>
<rect x="514.3" y="574.3" width="15" height="1.6" fill="#f4f4f4"/>
<rect x="514.3" y="579.6" width="3" height="1.6" fill="#f4f4f4"/>
<rect x="518.3" y="579.6" width="3" height="1.6" fill="#f4f4f4"/>
<rect x="522.3" y="579.6" width="3" height="1.6" fill="#f4f4f4"/>
<rect x="526.3" y="579.6" width="3" height="1.6" fill="#f4f4f4"/>
<path d="M560,526 L662.5,526 Q666.5,526 666.5,530 L666.5,583 Q666.5,587 662.5,587 L564,587 Q560,587 560,583 L560,527 Z" fill="#2e383d" stroke="#56646a" stroke-width="2"/>
<rect x="587" y="525" width="78.5" height="7" fill="#56646a"/>
<path d="M561,531.5 L661.5,531.5 Q665.5,531.5 665.5,535.5 L665.5,540 L561,540 Z" fill="#2e383d"/>
<path d="M560,565.5 L560,527 Q560,522.5 564,522.5 L583,522.5 Q588,522.5 588,527 L588,565.5 Z" fill="#000" stroke="#56646a" stroke-width="2"/>
<text x="564.89" y="555.70" font-size="28.20" fill="#ffffff" font-weight="bold" textLength="19.55" lengthAdjust="spacingAndGlyphs" style='font-family:"Liberation Sans", sans-serif' >D</text>
<text x="590.59" y="543.60" font-size="9.01" fill="#e4e4e4" font-weight="normal" textLength="5.82" lengthAdjust="spacingAndGlyphs" style='font-family:"Liberation Sans", sans-serif' stroke="#e4e4e4" stroke-width="0.4">0</text>
<text x="609.32" y="543.60" font-size="9.01" fill="#e4e4e4" font-weight="normal" textLength="6.45" lengthAdjust="spacingAndGlyphs" style='font-family:"Liberation Sans", sans-serif' stroke="#e4e4e4" stroke-width="0.4">1</text>
<text x="628.65" y="543.60" font-size="9.01" fill="#e4e4e4" font-weight="normal" textLength="6.10" lengthAdjust="spacingAndGlyphs" style='font-family:"Liberation Sans", sans-serif' stroke="#e4e4e4" stroke-width="0.4">2</text>
<text x="647.80" y="543.60" font-size="9.01" fill="#e4e4e4" font-weight="normal" textLength="5.87" lengthAdjust="spacingAndGlyphs" style='font-family:"Liberation Sans", sans-serif' stroke="#e4e4e4" stroke-width="0.4">3</text>
<text x="590.77" y="556.60" font-size="9.30" fill="#e4e4e4" font-weight="normal" textLength="5.52" lengthAdjust="spacingAndGlyphs" style='font-family:"Liberation Sans", sans-serif' stroke="#e4e4e4" stroke-width="0.4">4</text>
<text x="609.78" y="556.60" font-size="9.30" fill="#e4e4e4" font-weight="normal" textLength="5.87" lengthAdjust="spacingAndGlyphs" style='font-family:"Liberation Sans", sans-serif' stroke="#e4e4e4" stroke-width="0.4">5</text>
<text x="628.65" y="556.60" font-size="9.30" fill="#e4e4e4" font-weight="normal" textLength="6.03" lengthAdjust="spacingAndGlyphs" style='font-family:"Liberation Sans", sans-serif' stroke="#e4e4e4" stroke-width="0.4">6</text>
<text x="647.64" y="556.60" font-size="9.30" fill="#e4e4e4" font-weight="normal" textLength="6.12" lengthAdjust="spacingAndGlyphs" style='font-family:"Liberation Sans", sans-serif' stroke="#e4e4e4" stroke-width="0.4">7</text>
<text x="590.54" y="569.60" font-size="9.30" fill="#e4e4e4" font-weight="normal" textLength="5.93" lengthAdjust="spacingAndGlyphs" style='font-family:"Liberation Sans", sans-serif' stroke="#e4e4e4" stroke-width="0.4">8</text>
<text x="609.69" y="569.60" font-size="9.30" fill="#e4e4e4" font-weight="normal" textLength="6.02" lengthAdjust="spacingAndGlyphs" style='font-family:"Liberation Sans", sans-serif' stroke="#e4e4e4" stroke-width="0.4">9</text>
<text x="628.39" y="569.60" font-size="9.30" fill="#e4e4e4" font-weight="normal" textLength="11.83" lengthAdjust="spacingAndGlyphs" style='font-family:"Liberation Sans", sans-serif' stroke="#e4e4e4" stroke-width="0.4">10</text>
<text x="647.38" y="569.60" font-size="9.30" fill="#e4e4e4" font-weight="normal" textLength="11.94" lengthAdjust="spacingAndGlyphs" style='font-family:"Liberation Sans", sans-serif' stroke="#e4e4e4" stroke-width="0.4">11</text>
<text x="590.18" y="582.30" font-size="9.16" fill="#e4e4e4" font-weight="normal" textLength="11.96" lengthAdjust="spacingAndGlyphs" style='font-family:"Liberation Sans", sans-serif' stroke="#e4e4e4" stroke-width="0.4">12</text>
<text x="609.39" y="582.30" font-size="9.16" fill="#e4e4e4" font-weight="normal" textLength="11.88" lengthAdjust="spacingAndGlyphs" style='font-family:"Liberation Sans", sans-serif' stroke="#e4e4e4" stroke-width="0.4">13</text>
<text x="628.40" y="582.30" font-size="9.16" fill="#e4e4e4" font-weight="normal" textLength="11.71" lengthAdjust="spacingAndGlyphs" style='font-family:"Liberation Sans", sans-serif' stroke="#e4e4e4" stroke-width="0.4">14</text>
<text x="647.39" y="582.30" font-size="9.16" fill="#e4e4e4" font-weight="normal" textLength="11.86" lengthAdjust="spacingAndGlyphs" style='font-family:"Liberation Sans", sans-serif' stroke="#e4e4e4" stroke-width="0.4">15</text>
<path d="M782.5,526 L886,526 Q890,526 890,530 L890,583 Q890,587 886,587 L786.5,587 Q782.5,587 782.5,583 L782.5,527 Z" fill="#2e383d" stroke="#56646a" stroke-width="2"/>
<rect x="810.5" y="525" width="78.5" height="7" fill="#56646a"/>
<path d="M783.5,531.5 L885,531.5 Q889,531.5 889,535.5 L889,540 L783.5,540 Z" fill="#2e383d"/>
<path d="M782.5,565.5 L782.5,527 Q782.5,522.5 786.5,522.5 L806.5,522.5 Q811.5,522.5 811.5,527 L811.5,565.5 Z" fill="#000" stroke="#56646a" stroke-width="2"/>
<text x="784.98" y="552.80" font-size="25.44" fill="#ffffff" font-weight="bold" textLength="23.95" lengthAdjust="spacingAndGlyphs" style='font-family:"Liberation Sans", sans-serif' >M</text>
<rect x="814.7" y="532.5" width="73.5" height="50.2" fill="#333c40"/>
<rect x="814.7" y="535" width="36.7" height="24.3" fill="#7d898f"/>
<text x="824.85" y="551.00" font-size="12.50" fill="#e2e6e8" font-weight="normal" textLength="16.01" lengthAdjust="spacingAndGlyphs" style='font-family:"Liberation Sans", sans-serif'  stroke="#e2e6e8" stroke-width="0.25">M1</text>
<rect x="852.4" y="535" width="35.7" height="24.3" fill="#7d898f"/>
<text x="861.81" y="551.00" font-size="12.50" fill="#e2e6e8" font-weight="normal" textLength="16.83" lengthAdjust="spacingAndGlyphs" style='font-family:"Liberation Sans", sans-serif'  stroke="#e2e6e8" stroke-width="0.25">M3</text>
<rect x="814.7" y="560.3" width="36.7" height="22.4" fill="#7d898f"/>
<text x="824.85" y="576.00" font-size="12.65" fill="#e2e6e8" font-weight="normal" textLength="16.03" lengthAdjust="spacingAndGlyphs" style='font-family:"Liberation Sans", sans-serif'  stroke="#e2e6e8" stroke-width="0.25">M2</text>
<rect x="852.4" y="560.3" width="35.7" height="22.4" fill="#7d898f"/>
<text x="861.82" y="576.00" font-size="12.65" fill="#e2e6e8" font-weight="normal" textLength="16.63" lengthAdjust="spacingAndGlyphs" style='font-family:"Liberation Sans", sans-serif'  stroke="#e2e6e8" stroke-width="0.25">M4</text>
<g stroke="#f0f0f0" stroke-width="1" fill="none"><line x1="946.5" y1="545" x2="946.5" y2="563"/><polyline points="942.5,549 942.5,555 946.5,558"/><polyline points="950.5,550 950.5,555 946.5,558"/></g>
<circle cx="946.5" cy="563.5" r="1.8" fill="#f0f0f0"/><circle cx="942.5" cy="548.5" r="1" fill="#f0f0f0"/><rect x="949.5" y="548.5" width="2" height="2" fill="#f0f0f0"/><polygon points="944.8,547 948.2,547 946.5,544.5" fill="#f0f0f0"/>
<g stroke="#f0f0f0" stroke-width="1.2" fill="none" stroke-linejoin="round"><path d="M973,547.5 L966.5,553.5 Q965.3,555 966.5,556.5 L973,562.5 Z"/><line x1="975.3" y1="547" x2="975.3" y2="563"/><path d="M973,552.5 Q970.5,555 973,557.5"/><line x1="977.5" y1="552" x2="984" y2="559"/><line x1="984" y1="552" x2="977.5" y2="559"/></g>
</svg>
</body></html>
